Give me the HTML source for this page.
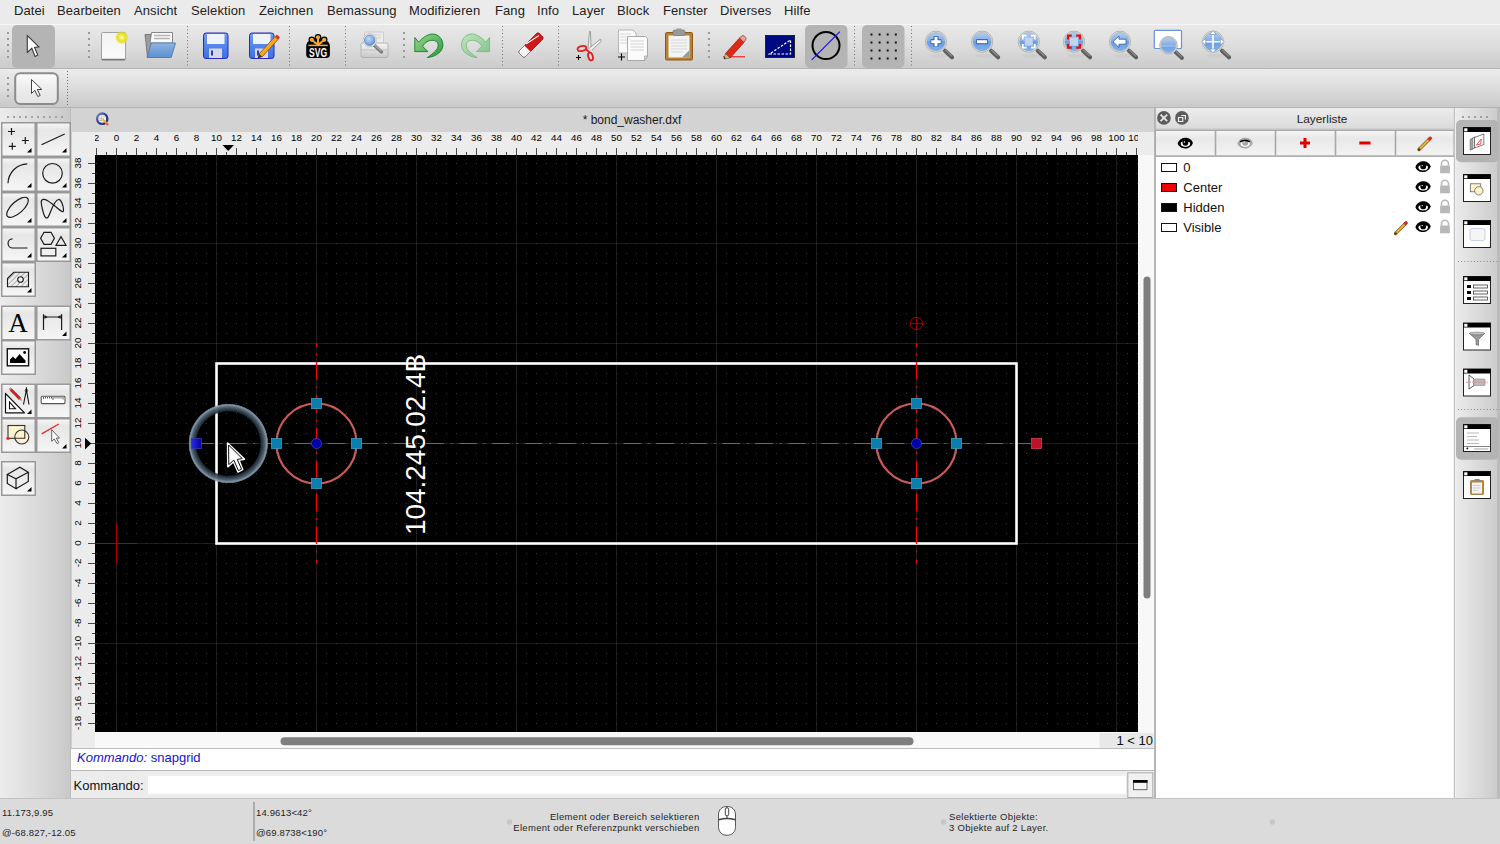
<!DOCTYPE html>
<html><head><meta charset="utf-8">
<style>
*{margin:0;padding:0;box-sizing:border-box}
html,body{width:1500px;height:844px;overflow:hidden;background:#e4e4e4;font-family:"Liberation Sans",sans-serif;color:#1a1a1a}
.a{position:absolute}
#menu{left:0;top:0;width:1500px;height:24px;background:#ebebeb}
#menu span{position:absolute;top:3px;font-size:13px;color:#222;letter-spacing:0.1px}
#tb1{left:0;top:24px;width:1500px;height:45px;background:linear-gradient(#e9e9e9,#dedede 45%,#cbcbcb);border-top:1px solid #f7f7f7;border-bottom:1px solid #b4b4b4}
#tb2{left:0;top:69px;width:1500px;height:39px;background:linear-gradient(#ececec,#dddddd 50%,#c9c9c9);border-bottom:1px solid #b4b4b4}
.hdl{position:absolute;width:2px;background:radial-gradient(circle,#9a9a9a 0.9px,transparent 1.1px) 0 0/2px 6px}
.sep{position:absolute;width:1px;background:repeating-linear-gradient(#7a7a7a 0 1px,transparent 1px 3px)}
.hl{position:absolute;background:#b3b3b3;border-radius:5px}
#tbox{left:0;top:108px;width:72px;height:690px;background:linear-gradient(90deg,#ececec,#dadada 55%,#c9c9c9);border-right:2px solid #bdbdbd}
.btn{position:absolute;width:35px;height:35px;border:2px solid #9b9b9b;background:linear-gradient(#fbfbfb,#ececec 60%,#e2e2e2)}
.btn svg{position:absolute;left:0;top:0}
#mdi{left:71px;top:108px;width:1084px;height:690px;background:#cfcfcf}
#title{left:71px;top:108px;width:1083px;height:24px;background:#d3d3d3}
#vsb{left:1138px;top:155px;width:16px;height:577px;background:#f8f8f8}
#hsb{left:95px;top:732px;width:1059px;height:16px;background:#f8f8f8}
#cmdh{left:71px;top:748px;width:1083px;height:23px;background:#fff;border-top:1.5px solid #bdbdbd;border-bottom:1px solid #b9b9b9}
#cmdi{left:71px;top:771px;width:1083px;height:27px;background:#ececec}
#status{left:0;top:798px;width:1500px;height:46px;background:#dbdbdb;border-top:1px solid #c3c3c3}
.st{position:absolute;font-size:9.5px;color:#1f1f1f;letter-spacing:0.35px;white-space:nowrap}

</style></head><body>
<div id="menu" class="a">
<span style="left:14px">Datei</span><span style="left:57px">Bearbeiten</span><span style="left:134px">Ansicht</span><span style="left:191px">Selektion</span><span style="left:259px">Zeichnen</span><span style="left:327px">Bemassung</span><span style="left:409px">Modifizieren</span><span style="left:495px">Fang</span><span style="left:537px">Info</span><span style="left:572px">Layer</span><span style="left:617px">Block</span><span style="left:663px">Fenster</span><span style="left:720px">Diverses</span><span style="left:784px">Hilfe</span>
</div>
<div id="tb1" class="a"></div>
<div id="tb2" class="a"></div>
<div id="tbox" class="a"></div>
<div id="mdi" class="a"></div>
<div id="title" class="a"></div>
<div id="vsb" class="a"></div>
<div id="hsb" class="a"></div>
<div id="cmdh" class="a"></div>
<div id="cmdi" class="a"></div>
<div id="status" class="a"></div>

<svg class="a" style="left:0;top:24px" width="1500" height="44" viewBox="0 24 1500 44">
<defs>
<linearGradient id="gpg" x1="0" y1="0" x2="0" y2="1"><stop offset="0" stop-color="#f2f2f2"/><stop offset="1" stop-color="#fbfbfb"/></linearGradient>
<radialGradient id="gyl"><stop offset="0" stop-color="#fff"/><stop offset="0.25" stop-color="#f5ef60"/><stop offset="0.6" stop-color="#e8e010"/><stop offset="1" stop-color="#e8e010" stop-opacity="0"/></radialGradient>
<linearGradient id="gfl" x1="0" y1="0" x2="0" y2="1"><stop offset="0" stop-color="#8fb4e0"/><stop offset="1" stop-color="#5b8fd0"/></linearGradient>
<linearGradient id="gfd" x1="0" y1="0" x2="0" y2="1"><stop offset="0" stop-color="#6f9cf0"/><stop offset="1" stop-color="#3a70e8"/></linearGradient>
<radialGradient id="glens" cx="0.4" cy="0.35" r="0.7"><stop offset="0" stop-color="#c6dcf4"/><stop offset="0.6" stop-color="#86b0e4"/><stop offset="1" stop-color="#5a8ccc"/></radialGradient>
<linearGradient id="gund" x1="0" y1="0" x2="0" y2="1"><stop offset="0" stop-color="#7cd27c"/><stop offset="1" stop-color="#1f9a3a"/></linearGradient>
<linearGradient id="gred" x1="0" y1="0" x2="0" y2="1"><stop offset="0" stop-color="#b8e0b8"/><stop offset="1" stop-color="#70b880"/></linearGradient>
<linearGradient id="gprn" x1="0" y1="0" x2="0" y2="1"><stop offset="0" stop-color="#f6f6f6"/><stop offset="1" stop-color="#c8c8c8"/></linearGradient>
</defs>
<!-- handles -->
<g fill="#9a9a9a">
<rect x="7" y="32" width="2" height="2"/><rect x="7" y="38" width="2" height="2"/><rect x="7" y="44" width="2" height="2"/><rect x="7" y="50" width="2" height="2"/><rect x="7" y="56" width="2" height="2"/>
<rect x="88" y="32" width="2" height="2"/><rect x="88" y="38" width="2" height="2"/><rect x="88" y="44" width="2" height="2"/><rect x="88" y="50" width="2" height="2"/><rect x="88" y="56" width="2" height="2"/>
<rect x="403" y="32" width="2" height="2"/><rect x="403" y="38" width="2" height="2"/><rect x="403" y="44" width="2" height="2"/><rect x="403" y="50" width="2" height="2"/><rect x="403" y="56" width="2" height="2"/>
<rect x="708" y="32" width="2" height="2"/><rect x="708" y="38" width="2" height="2"/><rect x="708" y="44" width="2" height="2"/><rect x="708" y="50" width="2" height="2"/><rect x="708" y="56" width="2" height="2"/>
</g>
<!-- separators -->
<path d="M187.5 26V67M289.5 26V67M345.5 26V67M502.5 26V67M558.5 26V67M854.5 26V67M911.5 26V67" stroke="#6e6e6e" stroke-width="1" stroke-dasharray="1 2.5"/>
<!-- highlights -->
<rect x="12" y="25" width="43" height="43" rx="5" fill="#b4b4b4"/>
<rect x="805" y="25" width="42.5" height="43" rx="5" fill="#b4b4b4"/>
<rect x="862" y="25" width="42.5" height="43" rx="5" fill="#b4b4b4"/>
<!-- select arrow -->
<path d="M27.3 35.5V52.4L31.8 48.3L35.1 56.4L37.8 55.1L34.5 47.4L38.9 46.9Z" fill="#fff" stroke="#3a3a3a" stroke-width="1.1" stroke-linejoin="miter"/>
<!-- new -->
<rect x="101.5" y="32.5" width="24" height="27.5" rx="1" fill="url(#gpg)" stroke="#999" stroke-width="0.9"/>
<path d="M102 59.5H125" stroke="#777" stroke-width="1.5"/>
<circle cx="121.8" cy="37.5" r="7" fill="url(#gyl)"/>
<!-- open -->
<path d="M145 34.5H151V57H147.5Z" fill="#9c9c9c" stroke="#6a6a6a" stroke-width="0.8"/>
<path d="M151.5 32.5H172.5V43H150Z" fill="#fafafa" stroke="#7a7a7a" stroke-width="0.9"/>
<path d="M154 35.5H170M154 38.5H170" stroke="#b4b4b4" stroke-width="1.4"/>
<path d="M151.3 43H175.5L171.2 57.5H147Z" fill="url(#gfl)" stroke="#4a7cc0" stroke-width="0.9" stroke-linejoin="round"/>
<!-- save -->
<rect x="203.5" y="33" width="24.5" height="25.5" rx="2.5" fill="url(#gfd)" stroke="#2a2ab8" stroke-width="1"/>
<rect x="207" y="34" width="17.5" height="10" fill="#eef2fa"/>
<rect x="209" y="48.5" width="13" height="9.5" fill="#d8d8e4"/>
<rect x="211" y="50.5" width="2" height="5" fill="#2040c0"/>
<!-- save as -->
<rect x="249.5" y="33" width="24.5" height="25.5" rx="2.5" fill="url(#gfd)" stroke="#2a2ab8" stroke-width="1"/>
<rect x="253" y="34" width="17.5" height="10" fill="#eef2fa"/>
<rect x="255" y="48.5" width="13" height="9.5" fill="#d8d8e4"/>
<rect x="257" y="50.5" width="2" height="5" fill="#2040c0"/>
<path d="M259 54L275 36.5L278 39.5L262 57Z" fill="#f5a623" stroke="#8a4a00" stroke-width="0.8"/>
<path d="M275 36.5L277 34.5L280 37.5L278 39.5Z" fill="#e03020"/>
<path d="M259 54L257.5 58.5L262 57Z" fill="#333"/>
<!-- SVG -->
<g stroke-linecap="round">
<path d="M318 45L318 37.3M318 45L311.8 39.8M318 45L324.2 39.8M318 45L309.5 43.8M318 45L326.5 43.8" stroke="#000" stroke-width="5"/>
<circle cx="318" cy="37.3" r="3.3" fill="#000"/><circle cx="311.8" cy="39.8" r="3.3" fill="#000"/><circle cx="324.2" cy="39.8" r="3.3" fill="#000"/>
<rect x="306.2" y="42.5" width="23.7" height="15.4" rx="3.4" fill="#000"/>
<path d="M318 45L318 37.3M318 45L311.8 39.8M318 45L324.2 39.8" stroke="#f5a831" stroke-width="2"/>
<circle cx="318" cy="37.3" r="2.1" fill="#f5a831"/><circle cx="311.8" cy="39.8" r="2.1" fill="#f5a831"/><circle cx="324.2" cy="39.8" r="2.1" fill="#f5a831"/>
<path d="M313 43.8L318 42.3L323 43.8" fill="#f5a831"/>
<path d="M308.3 45.4H327.7" stroke="#f5a831" stroke-width="1.5" stroke-linecap="butt"/>
</g>
<text x="0" y="0" font-family="Liberation Sans" font-weight="bold" font-size="13.4" fill="#fff" text-anchor="middle" transform="translate(318.1 56.5) scale(0.64 1)">SVG</text>
<!-- print preview -->
<rect x="364.5" y="32" width="19" height="13" rx="1" fill="#ececec" stroke="#c4c4c4" stroke-width="0.8"/>
<path d="M367 35H381M367 38H381" stroke="#cfcfcf" stroke-width="1"/>
<path d="M361 44.5Q361 43 363 43H386Q388 43 388 44.5V55.5Q388 57.5 386 57.5H363Q361 57.5 361 55.5Z" fill="url(#gprn)" stroke="#a8a8a8" stroke-width="0.8"/>
<path d="M362 50H387" stroke="#b8b8b8" stroke-width="0.8"/>
<path d="M373.5 44.5L381.5 52" stroke="#777" stroke-width="3.2" stroke-linecap="round"/>
<path d="M374 44.3L381 50.8" stroke="#b0b0b0" stroke-width="1.2" stroke-linecap="round"/>
<circle cx="369.7" cy="40.3" r="6.6" fill="#f4f4f4" stroke="#b8b8b8" stroke-width="0.8"/>
<circle cx="369.7" cy="40.3" r="5.2" fill="url(#glens)" stroke="#5d8ac4" stroke-width="0.8"/>
<!-- undo -->
<defs><linearGradient id="gu2" x1="0" y1="0" x2="1" y2="1"><stop offset="0" stop-color="#9ad88a"/><stop offset="1" stop-color="#2a9a40"/></linearGradient>
<linearGradient id="gr2" x1="1" y1="0" x2="0" y2="1"><stop offset="0" stop-color="#c4e6bc"/><stop offset="1" stop-color="#80c088"/></linearGradient></defs>
<path d="M414.8 37.5L418.7 42.1C422 38 428 34 432.2 34C438.5 34 442.9 39 442.9 44.9C442.9 51 437 56.5 427.3 57.6C434 53 438.2 49.5 438.2 45C438.2 42 435.5 40.3 432 40.3C428.5 40.3 425 42.5 422.5 46.3L427.9 51.6H414.8Z" fill="url(#gu2)" stroke="#157a2e" stroke-width="0.9" stroke-linejoin="round"/>
<!-- redo -->
<path d="M414.8 37.5L418.7 42.1C422 38 428 34 432.2 34C438.5 34 442.9 39 442.9 44.9C442.9 51 437 56.5 427.3 57.6C434 53 438.2 49.5 438.2 45C438.2 42 435.5 40.3 432 40.3C428.5 40.3 425 42.5 422.5 46.3L427.9 51.6H414.8Z" transform="matrix(-1 0 0 1 904.4 0)" fill="url(#gr2)" stroke="#7ab888" stroke-width="0.9" stroke-linejoin="round"/>
<!-- eraser -->
<ellipse cx="532" cy="57.5" rx="12" ry="1.5" fill="#d6d6d6"/>
<path d="M519.5 50.5L536.5 33.5Q538 32 539.5 33.5L542.5 36.5Q544 38 542.5 39.5L525.5 56.5Q524 58 522.5 56.5L519.5 53.5Q518 52 519.5 50.5Z" fill="#d01818" stroke="#8a0a0a" stroke-width="0.7"/>
<path d="M519.5 50.5L524.5 45.5L530.5 51.5L525.5 56.5Q524 58 522.5 56.5L519.5 53.5Q518 52 519.5 50.5Z" fill="#f4f4f4" stroke="#777" stroke-width="0.7"/>
<path d="M526 44L539 35.5" stroke="#fff" stroke-width="1.3" opacity="0.9"/>
<!-- scissors -->
<path d="M588 49L589.5 31.5Q590 30.5 590.5 31.5L591 48" fill="#f2f2f2" stroke="#888" stroke-width="0.8"/>
<path d="M589 48.5L600 39.5Q601 39 601 40L601 41.5L592 50" fill="#f2f2f2" stroke="#888" stroke-width="0.8"/>
<ellipse cx="582" cy="48.5" rx="4.5" ry="2.4" transform="rotate(-15 582 48.5)" fill="none" stroke="#e02020" stroke-width="1.8"/>
<ellipse cx="590.5" cy="56.5" rx="2.3" ry="4" transform="rotate(-15 590.5 56.5)" fill="none" stroke="#e02020" stroke-width="1.8"/>
<path d="M586 49.5L589.5 52" stroke="#e02020" stroke-width="1.8"/>
<path d="M576 57.5H581M578.5 55V60" stroke="#000" stroke-width="1.1"/>
<!-- copy -->
<path d="M618.5 30H633L636 33V53H618.5Z" fill="#fafafa" stroke="#a8a8a8" stroke-width="0.8"/>
<path d="M620 34H631M620 37H631M620 40H631M620 43H631" stroke="#d0d0d0" stroke-width="0.8"/>
<path d="M627.5 36.5H645.5L647.5 38.5V56L644.5 60.5H627.5Z" fill="#fbfbfb" stroke="#a0a0a0" stroke-width="0.9"/>
<path d="M630.5 41H644M630.5 44H644M630.5 47H644M630.5 50H644" stroke="#c8c8c8" stroke-width="0.8"/>
<path d="M644.5 60.5V56H647.5Z" fill="#ddd" stroke="#999" stroke-width="0.6"/>
<path d="M618 57H625M621.5 53.5V60.5" stroke="#000" stroke-width="1.1"/>
<!-- paste -->
<rect x="665.5" y="32.5" width="27" height="27.5" rx="1.2" fill="#b88030" stroke="#8a5a18" stroke-width="1"/>
<rect x="668.5" y="35.5" width="21" height="22" fill="#f4f4f4"/>
<path d="M671 40H687M671 43H687M671 46H687M671 49H687M671 52H683" stroke="#cfcfcf" stroke-width="0.8"/>
<path d="M682 57.5L689.5 50V57.5Z" fill="#9a9a9a"/>
<rect x="673" y="30" width="12" height="5.5" rx="1.5" fill="#9a9a9a" stroke="#777" stroke-width="0.7"/>
<rect x="676.5" y="28.5" width="5" height="2.5" fill="#9a9a9a"/>
<!-- pencil w/ red line -->
<path d="M723 56.8H745" stroke="#f02020" stroke-width="1.2"/>
<path d="M725.5 53.5L739 38.5Q740.5 37 742 38.5L743.5 40Q745 41.5 743.5 43L730 58Z" fill="#e02818" stroke="#8a1a10" stroke-width="0.7"/>
<path d="M739.5 38L741.5 36Q743 34.8 744.5 36.3L745.5 37.3Q746.8 38.8 745.5 40.2L743.5 42.2Z" fill="#e8a0a0" stroke="#8a1a10" stroke-width="0.6"/>
<path d="M725.5 53.5L724 59L730 58Z" fill="#d4b48a" stroke="#5a3a1a" stroke-width="0.5"/>
<path d="M724.5 57L724 59L726 58.6Z" fill="#222"/>
<!-- dim -->
<rect x="765.5" y="35.5" width="29" height="22" fill="#000a80" stroke="#222" stroke-width="1"/>
<path d="M769.5 54H790.5V40Z" fill="none" stroke="#fff" stroke-width="1.2" stroke-dasharray="2.5 1.5"/>
<!-- snap circle -->
<circle cx="826" cy="45.6" r="13.5" fill="none" stroke="#000" stroke-width="2"/>
<path d="M811.8 59.9L839.9 31.7" stroke="#1010ff" stroke-width="1.2"/>
<!-- grid -->
<g fill="#111">
<rect x="870.5" y="33.5" width="2" height="2"/>
<rect x="870.5" y="41.5" width="2" height="2"/>
<rect x="870.5" y="49.5" width="2" height="2"/>
<rect x="870.5" y="57.5" width="2" height="2"/>
<rect x="878.6" y="33.5" width="2" height="2"/>
<rect x="878.6" y="41.5" width="2" height="2"/>
<rect x="878.6" y="49.5" width="2" height="2"/>
<rect x="878.6" y="57.5" width="2" height="2"/>
<rect x="886.7" y="33.5" width="2" height="2"/>
<rect x="886.7" y="41.5" width="2" height="2"/>
<rect x="886.7" y="49.5" width="2" height="2"/>
<rect x="886.7" y="57.5" width="2" height="2"/>
<rect x="894.8" y="33.5" width="2" height="2"/>
<rect x="894.8" y="41.5" width="2" height="2"/>
<rect x="894.8" y="49.5" width="2" height="2"/>
<rect x="894.8" y="57.5" width="2" height="2"/>
</g>
<defs>
<linearGradient id="gzl" x1="0" y1="0" x2="0" y2="1"><stop offset="0" stop-color="#b4cdef"/><stop offset="0.45" stop-color="#86aee6"/><stop offset="0.5" stop-color="#6c9ce0"/><stop offset="1" stop-color="#80b4ec"/></linearGradient>
</defs>
<g>
<ellipse cx="939" cy="55.7" rx="10" ry="2" fill="#000" opacity="0.035"/>
<path d="M945 50.7L952 57.2" stroke="#5e5e5e" stroke-width="4.2" stroke-linecap="round"/>
<path d="M945.5 50.2L951.5 55.7" stroke="#8a8a8a" stroke-width="1.2" stroke-linecap="round"/>
<circle cx="936" cy="41.7" r="10.6" fill="#e6e6de" stroke="#b4b4aa" stroke-width="1"/>
<circle cx="936" cy="41.7" r="9.2" fill="url(#gzl)" stroke="#8aa6c8" stroke-width="0.6"/>
<path d="M930.6 41.7H941.4M936 36.3V47.1" stroke="#2a5aa0" stroke-width="5"/><path d="M931.3 41.7H940.7M936 37V46.4" stroke="#fff" stroke-width="3"/>
</g>
<g>
<ellipse cx="985.1" cy="55.7" rx="10" ry="2" fill="#000" opacity="0.035"/>
<path d="M991.1 50.7L998.1 57.2" stroke="#5e5e5e" stroke-width="4.2" stroke-linecap="round"/>
<path d="M991.6 50.2L997.6 55.7" stroke="#8a8a8a" stroke-width="1.2" stroke-linecap="round"/>
<circle cx="982.1" cy="41.7" r="10.6" fill="#e6e6de" stroke="#b4b4aa" stroke-width="1"/>
<circle cx="982.1" cy="41.7" r="9.2" fill="url(#gzl)" stroke="#8aa6c8" stroke-width="0.6"/>
<path d="M976.3 41.7H987.9" stroke="#2a5aa0" stroke-width="5"/><path d="M977 41.7H987.2" stroke="#fff" stroke-width="3"/>
</g>
<g>
<ellipse cx="1031.8" cy="55.7" rx="10" ry="2" fill="#000" opacity="0.035"/>
<path d="M1037.8 50.7L1044.8 57.2" stroke="#5e5e5e" stroke-width="4.2" stroke-linecap="round"/>
<path d="M1038.3 50.2L1044.3 55.7" stroke="#8a8a8a" stroke-width="1.2" stroke-linecap="round"/>
<circle cx="1028.8" cy="41.7" r="10.6" fill="#e6e6de" stroke="#b4b4aa" stroke-width="1"/>
<circle cx="1028.8" cy="41.7" r="9.2" fill="url(#gzl)" stroke="#8aa6c8" stroke-width="0.6"/>
<rect x="1024.8" y="37.7" width="8" height="8" fill="#c0d4ee"/><path d="M1022.8 39.5V35.7H1026.6M1031.0 35.7H1034.8V39.5M1034.8 44V47.7H1031.0M1026.6 47.7H1022.8V44" stroke="#fff" stroke-width="1.8" fill="none"/>
</g>
<g>
<ellipse cx="1077" cy="55.7" rx="10" ry="2" fill="#000" opacity="0.035"/>
<path d="M1083 50.7L1090 57.2" stroke="#5e5e5e" stroke-width="4.2" stroke-linecap="round"/>
<path d="M1083.5 50.2L1089.5 55.7" stroke="#8a8a8a" stroke-width="1.2" stroke-linecap="round"/>
<circle cx="1074" cy="41.7" r="10.6" fill="#e6e6de" stroke="#b4b4aa" stroke-width="1"/>
<circle cx="1074" cy="41.7" r="9.2" fill="url(#gzl)" stroke="#8aa6c8" stroke-width="0.6"/>
<rect x="1070" y="37.7" width="8" height="8" fill="#c0d4ee"/><path d="M1068 39.5V35.7H1071.8M1076.2 35.7H1080V39.5M1080 44V47.7H1076.2M1071.8 47.7H1068V44" stroke="#e01010" stroke-width="2.2" fill="none"/>
</g>
<g>
<ellipse cx="1123" cy="55.7" rx="10" ry="2" fill="#000" opacity="0.035"/>
<path d="M1129 50.7L1136 57.2" stroke="#5e5e5e" stroke-width="4.2" stroke-linecap="round"/>
<path d="M1129.5 50.2L1135.5 55.7" stroke="#8a8a8a" stroke-width="1.2" stroke-linecap="round"/>
<circle cx="1120" cy="41.7" r="10.6" fill="#e6e6de" stroke="#b4b4aa" stroke-width="1"/>
<circle cx="1120" cy="41.7" r="9.2" fill="url(#gzl)" stroke="#8aa6c8" stroke-width="0.6"/>
<path d="M1113 41.7L1119 36V39.2H1126V44.2H1119V47.4Z" fill="#fff" stroke="#2a5aa0" stroke-width="0.8"/>
</g>
<rect x="1154.3" y="30.3" width="27.2" height="18.2" rx="1" fill="#fff" stroke="#6a94d0" stroke-width="1.2"/>
<g>
<path d="M1175.5 52L1182 58" stroke="#5e5e5e" stroke-width="3.8" stroke-linecap="round"/>
<path d="M1176 51.5L1181.5 56.6" stroke="#8a8a8a" stroke-width="1.1" stroke-linecap="round"/>
<circle cx="1168.5" cy="45.3" r="8.8" fill="#e6e6de" stroke="#b4b4aa" stroke-width="1"/>
<circle cx="1168.5" cy="45.3" r="7.5" fill="url(#gzl)" stroke="#8aa6c8" stroke-width="0.6"/>
<path d="M1161 46H1176" stroke="#bcd2ee" stroke-width="1"/>
</g>
<g>
<ellipse cx="1216" cy="55.7" rx="10" ry="2" fill="#000" opacity="0.035"/>
<path d="M1222 50.7L1229 57.2" stroke="#5e5e5e" stroke-width="4.2" stroke-linecap="round"/>
<path d="M1222.5 50.2L1228.5 55.7" stroke="#8a8a8a" stroke-width="1.2" stroke-linecap="round"/>
<circle cx="1213" cy="41.7" r="10.6" fill="#e6e6de" stroke="#b4b4aa" stroke-width="1"/>
<circle cx="1213" cy="41.7" r="9.2" fill="url(#gzl)" stroke="#8aa6c8" stroke-width="0.6"/>
<path d="M1213 31V52.4M1202.3 41.7H1223.7" stroke="#fff" stroke-width="1.6"/><path d="M1213 30.5L1209.8 34.5H1216.2ZM1213 53L1209.8 49H1216.2ZM1201.7 41.7L1205.7 38.5V44.9ZM1224.3 41.7L1220.3 38.5V44.9Z" fill="#fff" stroke="#5a8ac8" stroke-width="0.6"/>
</g>
</svg>

<svg class="a" style="left:0;top:69px" width="1500" height="39" viewBox="0 69 1500 39">
<defs><linearGradient id="gb2" x1="0" y1="0" x2="0" y2="1"><stop offset="0" stop-color="#fdfdfd"/><stop offset="0.5" stop-color="#ececec"/><stop offset="1" stop-color="#e4e4e4"/></linearGradient></defs>
<g fill="#9a9a9a"><rect x="7" y="77" width="2" height="2"/><rect x="7" y="83" width="2" height="2"/><rect x="7" y="89" width="2" height="2"/><rect x="7" y="95" width="2" height="2"/></g>
<rect x="15.2" y="73.2" width="42.6" height="30.8" rx="5" fill="url(#gb2)" stroke="#8c8c8c" stroke-width="2"/>
<path d="M31.5 79.5V93.5L34.8 90.3L37.8 96.5L40.2 95.5L37.3 89.5H41.8Z" fill="#fff" stroke="#444" stroke-width="1"/>
<path d="M67.5 71V106" stroke="#6e6e6e" stroke-width="1" stroke-dasharray="1 2"/>
</svg>

<svg class="a" style="left:0;top:108px" width="71" height="690" viewBox="0 108 71 690">
<defs>
<linearGradient id="gbt" x1="0" y1="0" x2="0" y2="1"><stop offset="0" stop-color="#f7f7f7"/><stop offset="0.22" stop-color="#e6e6e6"/><stop offset="1" stop-color="#f6f6f6"/></linearGradient>
</defs>
<g fill="#a4a4a4">
<rect x="7" y="116" width="2" height="2"/><rect x="13" y="116" width="2" height="2"/><rect x="19" y="116" width="2" height="2"/><rect x="25" y="116" width="2" height="2"/><rect x="31" y="116" width="2" height="2"/><rect x="37" y="116" width="2" height="2"/><rect x="43" y="116" width="2" height="2"/><rect x="49" y="116" width="2" height="2"/><rect x="55" y="116" width="2" height="2"/><rect x="61" y="116" width="2" height="2"/>
</g>
<rect x="1.75" y="122.75" width="33.5" height="33.5" fill="url(#gbt)" stroke="#999" stroke-width="1.5"/>
<rect x="36.75" y="122.75" width="33.5" height="33.5" fill="url(#gbt)" stroke="#999" stroke-width="1.5"/>
<rect x="1.75" y="157.75" width="33.5" height="33.5" fill="url(#gbt)" stroke="#999" stroke-width="1.5"/>
<rect x="36.75" y="157.75" width="33.5" height="33.5" fill="url(#gbt)" stroke="#999" stroke-width="1.5"/>
<rect x="1.75" y="192.75" width="33.5" height="33.5" fill="url(#gbt)" stroke="#999" stroke-width="1.5"/>
<rect x="36.75" y="192.75" width="33.5" height="33.5" fill="url(#gbt)" stroke="#999" stroke-width="1.5"/>
<rect x="1.75" y="227.75" width="33.5" height="33.5" fill="url(#gbt)" stroke="#999" stroke-width="1.5"/>
<rect x="36.75" y="227.75" width="33.5" height="33.5" fill="url(#gbt)" stroke="#999" stroke-width="1.5"/>
<rect x="1.75" y="262.75" width="33.5" height="33.5" fill="url(#gbt)" stroke="#999" stroke-width="1.5"/>
<rect x="1.75" y="306.25" width="33.5" height="33.5" fill="url(#gbt)" stroke="#999" stroke-width="1.5"/>
<rect x="36.75" y="306.25" width="33.5" height="33.5" fill="url(#gbt)" stroke="#999" stroke-width="1.5"/>
<rect x="1.75" y="340.75" width="33.5" height="33.5" fill="url(#gbt)" stroke="#999" stroke-width="1.5"/>
<rect x="1.75" y="384.25" width="33.5" height="33.5" fill="url(#gbt)" stroke="#999" stroke-width="1.5"/>
<rect x="36.75" y="384.25" width="33.5" height="33.5" fill="url(#gbt)" stroke="#999" stroke-width="1.5"/>
<rect x="1.75" y="418.75" width="33.5" height="33.5" fill="url(#gbt)" stroke="#999" stroke-width="1.5"/>
<rect x="36.75" y="418.75" width="33.5" height="33.5" fill="url(#gbt)" stroke="#999" stroke-width="1.5"/>
<rect x="1.75" y="461.75" width="33.5" height="33.5" fill="url(#gbt)" stroke="#999" stroke-width="1.5"/>
<path d="M31.5 148V152.5H27Z" fill="#000"/>
<path d="M66.5 148V152.5H62Z" fill="#000"/>
<path d="M31.5 183V187.5H27Z" fill="#000"/>
<path d="M66.5 183V187.5H62Z" fill="#000"/>
<path d="M31.5 218V222.5H27Z" fill="#000"/>
<path d="M66.5 218V222.5H62Z" fill="#000"/>
<path d="M31.5 253V257.5H27Z" fill="#000"/>
<path d="M66.5 253V257.5H62Z" fill="#000"/>
<path d="M31.5 288V292.5H27Z" fill="#000"/>
<path d="M66.5 331.5V336.0H62Z" fill="#000"/>
<path d="M66.5 444V448.5H62Z" fill="#000"/>
<path d="M31.5 409.5V414.0H27Z" fill="#000"/>
<path d="M31.5 487V491.5H27Z" fill="#000"/>
<g fill="none" stroke="#1a1a1a" stroke-width="1.2">
<path d="M8 131.5H15M11.5 128V135M21.8 140.5H28.8M25.3 137V144M8.8 146.3H15.8M12.3 142.8V149.8"/>
<path d="M41.5 144.8L64.7 134"/>
<path d="M8 183.3A20 20 0 0 1 27.3 163.8"/>
<circle cx="52.5" cy="173.3" r="9.8"/>
<ellipse cx="17.5" cy="207.3" rx="13.5" ry="5.8" transform="rotate(-42 17.5 207.3)"/>
<path d="M41.5 200.5C44 197 50 202 55.5 206.5C60 210 63.5 214 63.5 210C63.5 206 61 199 58.5 199.5C55 200 52 208 50 213C48.5 217 47.5 219 45.5 217.5C43.5 215.5 40.5 203 41.5 200.5Z"/>
<path d="M12.5 238.8A4.6 4.6 0 0 0 12.8 248H27.5"/>
<path d="M44 232.3H51L54.4 238.3L51 244.3H44L40.6 238.3Z"/>
<path d="M56 245.3H66L61 236.7Z"/>
<rect x="41" y="248.3" width="14.8" height="7.6"/>
<path d="M15.5 327.5"/>
<path d="M43.5 314.3V330M61.6 314.3V330M44 317H61"/>
<path d="M41.7 433.9L58.8 424" stroke="#f02828" stroke-width="1.4"/>
<path d="M7.3 474.5L19.8 467.2L28.3 472.3L16 478.8ZM7.3 474.5V483.5L16 488.8V478.8M28.3 472.3V481.5L16 488.8"/>
</g>
<path d="M47.5 317L44.5 315V319ZM57.5 317L60.6 315V319Z" fill="#1a1a1a"/>
<!-- hatch -->
<defs><pattern id="hp" width="3.5" height="3.5" patternUnits="userSpaceOnUse" patternTransform="rotate(45)"><path d="M0 0V3.5" stroke="#666" stroke-width="0.9"/></pattern></defs>
<path d="M7.5 278.5L13.8 272.3H28.5V286.7H7.5Z" fill="url(#hp)" stroke="#1a1a1a" stroke-width="1.1"/>
<circle cx="20.5" cy="279.5" r="2.8" fill="#eee" stroke="#1a1a1a" stroke-width="1.1"/>
<!-- text A -->
<text x="18" y="332" font-family="Liberation Serif" font-size="27" text-anchor="middle" fill="#000">A</text>
<!-- image -->
<rect x="7.3" y="348.8" width="21.3" height="17" fill="#fff" stroke="#111" stroke-width="1.4"/>
<path d="M10 363V359.5L13 356.5L15.5 359L19.5 354L24 359L25.5 360.5V363Z" fill="#000"/>
<circle cx="24.6" cy="352.5" r="1.4" fill="#000"/>
<!-- modify -->
<path d="M5.5 393.5V412.8H24.5Z" fill="#fff" stroke="#111" stroke-width="1.2" stroke-linejoin="round"/>
<path d="M9.5 402V408.8H15.5Z" fill="#fff" stroke="#111" stroke-width="1.1"/>
<path d="M10.2 390.6L11.8 389L20.4 397.6L18.8 399.2Z" fill="#d82020" stroke="#8a1010" stroke-width="0.7"/>
<path d="M10.2 390.6L9.6 388.6Q9.8 387.8 10.6 388L11.8 389Z" fill="#f0a0a0" stroke="#8a1010" stroke-width="0.5"/>
<path d="M20.4 397.6L21.6 400.4L18.8 399.2Z" fill="#d8a070" stroke="#6a4020" stroke-width="0.4"/>
<path d="M26.4 387.2V390M26.4 390L23.5 404.5M26.4 390L29 404.5" stroke="#111" stroke-width="1.1" fill="none"/>
<circle cx="26.4" cy="390.5" r="1.2" fill="none" stroke="#111" stroke-width="0.8"/>
<!-- measure ruler -->
<rect x="41.2" y="396.2" width="23.8" height="7.4" rx="1" fill="#fff" stroke="#555" stroke-width="1.1"/>
<path d="M43.5 397V399M45.5 397V398.5M47.5 397V398.5M49.5 397V398.5M51.5 397V398.5M53 397V400M55 397V398.5M57 397V398.5M59 397V398.5M61 397V398.5M63 397V399.5" stroke="#333" stroke-width="0.8"/>
<!-- select -->
<rect x="8" y="425.5" width="16.8" height="12.8" fill="#fdf3cf" stroke="#333" stroke-width="1.1"/>
<circle cx="21.8" cy="437" r="7" fill="#fdf3cf" stroke="#333" stroke-width="1.1"/>
<path d="M15 438.3H24.8V431" fill="none" stroke="#333" stroke-width="1.1"/>
<circle cx="8" cy="438.3" r="1.6" fill="#f02020"/>
<!-- snap cursor -->
<path d="M51.7 429.7V441.3L54.3 438.9L57 443.6L58.8 442.7L56.3 438.1H59.5Z" fill="#fff" stroke="#555" stroke-width="0.9" stroke-linejoin="round"/>
</svg>

<svg style="position:absolute;left:72px;top:132px" width="1082" height="23" viewBox="72 132 1082 23"><rect x="72" y="132" width="1082" height="23" fill="#ececec"/><path d="M96.5 148V155M106.5 152V155M116.5 148V155M126.5 152V155M136.5 148V155M146.5 152V155M156.5 148V155M166.5 152V155M176.5 148V155M186.5 152V155M196.5 148V155M206.5 152V155M216.5 148V155M226.5 152V155M236.5 148V155M246.5 152V155M256.5 148V155M266.5 152V155M276.5 148V155M286.5 152V155M296.5 148V155M306.5 152V155M316.5 148V155M326.5 152V155M336.5 148V155M346.5 152V155M356.5 148V155M366.5 152V155M376.5 148V155M386.5 152V155M396.5 148V155M406.5 152V155M416.5 148V155M426.5 152V155M436.5 148V155M446.5 152V155M456.5 148V155M466.5 152V155M476.5 148V155M486.5 152V155M496.5 148V155M506.5 152V155M516.5 148V155M526.5 152V155M536.5 148V155M546.5 152V155M556.5 148V155M566.5 152V155M576.5 148V155M586.5 152V155M596.5 148V155M606.5 152V155M616.5 148V155M626.5 152V155M636.5 148V155M646.5 152V155M656.5 148V155M666.5 152V155M676.5 148V155M686.5 152V155M696.5 148V155M706.5 152V155M716.5 148V155M726.5 152V155M736.5 148V155M746.5 152V155M756.5 148V155M766.5 152V155M776.5 148V155M786.5 152V155M796.5 148V155M806.5 152V155M816.5 148V155M826.5 152V155M836.5 148V155M846.5 152V155M856.5 148V155M866.5 152V155M876.5 148V155M886.5 152V155M896.5 148V155M906.5 152V155M916.5 148V155M926.5 152V155M936.5 148V155M946.5 152V155M956.5 148V155M966.5 152V155M976.5 148V155M986.5 152V155M996.5 148V155M1006.5 152V155M1016.5 148V155M1026.5 152V155M1036.5 148V155M1046.5 152V155M1056.5 148V155M1066.5 152V155M1076.5 148V155M1086.5 152V155M1096.5 148V155M1106.5 152V155M1116.5 148V155M1126.5 152V155M1136.5 148V155" stroke="#4a4a4a" stroke-width="1" shape-rendering="crispEdges"/><defs><clipPath id="rtc"><rect x="95" y="132" width="1043" height="23"/></clipPath></defs><g clip-path="url(#rtc)" font-family="Liberation Sans" font-size="9.8" fill="#000" text-anchor="middle"><text x="96.5" y="141">2</text><text x="116.5" y="141">0</text><text x="136.5" y="141">2</text><text x="156.5" y="141">4</text><text x="176.5" y="141">6</text><text x="196.5" y="141">8</text><text x="216.5" y="141">10</text><text x="236.5" y="141">12</text><text x="256.5" y="141">14</text><text x="276.5" y="141">16</text><text x="296.5" y="141">18</text><text x="316.5" y="141">20</text><text x="336.5" y="141">22</text><text x="356.5" y="141">24</text><text x="376.5" y="141">26</text><text x="396.5" y="141">28</text><text x="416.5" y="141">30</text><text x="436.5" y="141">32</text><text x="456.5" y="141">34</text><text x="476.5" y="141">36</text><text x="496.5" y="141">38</text><text x="516.5" y="141">40</text><text x="536.5" y="141">42</text><text x="556.5" y="141">44</text><text x="576.5" y="141">46</text><text x="596.5" y="141">48</text><text x="616.5" y="141">50</text><text x="636.5" y="141">52</text><text x="656.5" y="141">54</text><text x="676.5" y="141">56</text><text x="696.5" y="141">58</text><text x="716.5" y="141">60</text><text x="736.5" y="141">62</text><text x="756.5" y="141">64</text><text x="776.5" y="141">66</text><text x="796.5" y="141">68</text><text x="816.5" y="141">70</text><text x="836.5" y="141">72</text><text x="856.5" y="141">74</text><text x="876.5" y="141">76</text><text x="896.5" y="141">78</text><text x="916.5" y="141">80</text><text x="936.5" y="141">82</text><text x="956.5" y="141">84</text><text x="976.5" y="141">86</text><text x="996.5" y="141">88</text><text x="1016.5" y="141">90</text><text x="1036.5" y="141">92</text><text x="1056.5" y="141">94</text><text x="1076.5" y="141">96</text><text x="1096.5" y="141">98</text><text x="1116.5" y="141">100</text><text x="1136.5" y="141">102</text></g></svg>
<svg style="position:absolute;left:72px;top:155px" width="23" height="593" viewBox="72 155 23 593"><rect x="72" y="155" width="23" height="593" fill="#ececec"/><path d="M88 723.5H95M92 713.5H95M88 703.5H95M92 693.5H95M88 683.5H95M92 673.5H95M88 663.5H95M92 653.5H95M88 643.5H95M92 633.5H95M88 623.5H95M92 613.5H95M88 603.5H95M92 593.5H95M88 583.5H95M92 573.5H95M88 563.5H95M92 553.5H95M88 543.5H95M92 533.5H95M88 523.5H95M92 513.5H95M88 503.5H95M92 493.5H95M88 483.5H95M92 473.5H95M88 463.5H95M92 453.5H95M88 443.5H95M92 433.5H95M88 423.5H95M92 413.5H95M88 403.5H95M92 393.5H95M88 383.5H95M92 373.5H95M88 363.5H95M92 353.5H95M88 343.5H95M92 333.5H95M88 323.5H95M92 313.5H95M88 303.5H95M92 293.5H95M88 283.5H95M92 273.5H95M88 263.5H95M92 253.5H95M88 243.5H95M92 233.5H95M88 223.5H95M92 213.5H95M88 203.5H95M92 193.5H95M88 183.5H95M92 173.5H95M88 163.5H95" stroke="#4a4a4a" stroke-width="1" shape-rendering="crispEdges"/><g font-family="Liberation Sans" font-size="9.8" fill="#000" text-anchor="middle"><text transform="translate(77.6 723) rotate(-90)" y="3.5">-18</text><text transform="translate(77.6 703) rotate(-90)" y="3.5">-16</text><text transform="translate(77.6 683) rotate(-90)" y="3.5">-14</text><text transform="translate(77.6 663) rotate(-90)" y="3.5">-12</text><text transform="translate(77.6 643) rotate(-90)" y="3.5">-10</text><text transform="translate(77.6 623) rotate(-90)" y="3.5">-8</text><text transform="translate(77.6 603) rotate(-90)" y="3.5">-6</text><text transform="translate(77.6 583) rotate(-90)" y="3.5">-4</text><text transform="translate(77.6 563) rotate(-90)" y="3.5">-2</text><text transform="translate(77.6 543) rotate(-90)" y="3.5">0</text><text transform="translate(77.6 523) rotate(-90)" y="3.5">2</text><text transform="translate(77.6 503) rotate(-90)" y="3.5">4</text><text transform="translate(77.6 483) rotate(-90)" y="3.5">6</text><text transform="translate(77.6 463) rotate(-90)" y="3.5">8</text><text transform="translate(77.6 443) rotate(-90)" y="3.5">10</text><text transform="translate(77.6 423) rotate(-90)" y="3.5">12</text><text transform="translate(77.6 403) rotate(-90)" y="3.5">14</text><text transform="translate(77.6 383) rotate(-90)" y="3.5">16</text><text transform="translate(77.6 363) rotate(-90)" y="3.5">18</text><text transform="translate(77.6 343) rotate(-90)" y="3.5">20</text><text transform="translate(77.6 323) rotate(-90)" y="3.5">22</text><text transform="translate(77.6 303) rotate(-90)" y="3.5">24</text><text transform="translate(77.6 283) rotate(-90)" y="3.5">26</text><text transform="translate(77.6 263) rotate(-90)" y="3.5">28</text><text transform="translate(77.6 243) rotate(-90)" y="3.5">30</text><text transform="translate(77.6 223) rotate(-90)" y="3.5">32</text><text transform="translate(77.6 203) rotate(-90)" y="3.5">34</text><text transform="translate(77.6 183) rotate(-90)" y="3.5">36</text><text transform="translate(77.6 163) rotate(-90)" y="3.5">38</text></g></svg>
<svg style="position:absolute;left:95px;top:155px" width="1043" height="577" viewBox="95 155 1043 577" shape-rendering="crispEdges"><rect x="95" y="155" width="1043" height="577" fill="#000"/><path d="M116.5 155V732M216.5 155V732M316.5 155V732M416.5 155V732M516.5 155V732M616.5 155V732M716.5 155V732M816.5 155V732M916.5 155V732M1016.5 155V732M1116.5 155V732M95 243.5H1138M95 343.5H1138M95 443.5H1138M95 543.5H1138M95 643.5H1138" stroke="#1c1c1c" stroke-width="1" fill="none"/><path d="M96 163h1v1h-1zM96 173h1v1h-1zM96 183h1v1h-1zM96 193h1v1h-1zM96 203h1v1h-1zM96 213h1v1h-1zM96 223h1v1h-1zM96 233h1v1h-1zM96 243h1v1h-1zM96 253h1v1h-1zM96 263h1v1h-1zM96 273h1v1h-1zM96 283h1v1h-1zM96 293h1v1h-1zM96 303h1v1h-1zM96 313h1v1h-1zM96 323h1v1h-1zM96 333h1v1h-1zM96 343h1v1h-1zM96 353h1v1h-1zM96 363h1v1h-1zM96 373h1v1h-1zM96 383h1v1h-1zM96 393h1v1h-1zM96 403h1v1h-1zM96 413h1v1h-1zM96 423h1v1h-1zM96 433h1v1h-1zM96 443h1v1h-1zM96 453h1v1h-1zM96 463h1v1h-1zM96 473h1v1h-1zM96 483h1v1h-1zM96 493h1v1h-1zM96 503h1v1h-1zM96 513h1v1h-1zM96 523h1v1h-1zM96 533h1v1h-1zM96 543h1v1h-1zM96 553h1v1h-1zM96 563h1v1h-1zM96 573h1v1h-1zM96 583h1v1h-1zM96 593h1v1h-1zM96 603h1v1h-1zM96 613h1v1h-1zM96 623h1v1h-1zM96 633h1v1h-1zM96 643h1v1h-1zM96 653h1v1h-1zM96 663h1v1h-1zM96 673h1v1h-1zM96 683h1v1h-1zM96 693h1v1h-1zM96 703h1v1h-1zM96 713h1v1h-1zM96 723h1v1h-1zM106 163h1v1h-1zM106 173h1v1h-1zM106 183h1v1h-1zM106 193h1v1h-1zM106 203h1v1h-1zM106 213h1v1h-1zM106 223h1v1h-1zM106 233h1v1h-1zM106 243h1v1h-1zM106 253h1v1h-1zM106 263h1v1h-1zM106 273h1v1h-1zM106 283h1v1h-1zM106 293h1v1h-1zM106 303h1v1h-1zM106 313h1v1h-1zM106 323h1v1h-1zM106 333h1v1h-1zM106 343h1v1h-1zM106 353h1v1h-1zM106 363h1v1h-1zM106 373h1v1h-1zM106 383h1v1h-1zM106 393h1v1h-1zM106 403h1v1h-1zM106 413h1v1h-1zM106 423h1v1h-1zM106 433h1v1h-1zM106 443h1v1h-1zM106 453h1v1h-1zM106 463h1v1h-1zM106 473h1v1h-1zM106 483h1v1h-1zM106 493h1v1h-1zM106 503h1v1h-1zM106 513h1v1h-1zM106 523h1v1h-1zM106 533h1v1h-1zM106 543h1v1h-1zM106 553h1v1h-1zM106 563h1v1h-1zM106 573h1v1h-1zM106 583h1v1h-1zM106 593h1v1h-1zM106 603h1v1h-1zM106 613h1v1h-1zM106 623h1v1h-1zM106 633h1v1h-1zM106 643h1v1h-1zM106 653h1v1h-1zM106 663h1v1h-1zM106 673h1v1h-1zM106 683h1v1h-1zM106 693h1v1h-1zM106 703h1v1h-1zM106 713h1v1h-1zM106 723h1v1h-1zM116 163h1v1h-1zM116 173h1v1h-1zM116 183h1v1h-1zM116 193h1v1h-1zM116 203h1v1h-1zM116 213h1v1h-1zM116 223h1v1h-1zM116 233h1v1h-1zM116 243h1v1h-1zM116 253h1v1h-1zM116 263h1v1h-1zM116 273h1v1h-1zM116 283h1v1h-1zM116 293h1v1h-1zM116 303h1v1h-1zM116 313h1v1h-1zM116 323h1v1h-1zM116 333h1v1h-1zM116 343h1v1h-1zM116 353h1v1h-1zM116 363h1v1h-1zM116 373h1v1h-1zM116 383h1v1h-1zM116 393h1v1h-1zM116 403h1v1h-1zM116 413h1v1h-1zM116 423h1v1h-1zM116 433h1v1h-1zM116 443h1v1h-1zM116 453h1v1h-1zM116 463h1v1h-1zM116 473h1v1h-1zM116 483h1v1h-1zM116 493h1v1h-1zM116 503h1v1h-1zM116 513h1v1h-1zM116 523h1v1h-1zM116 533h1v1h-1zM116 543h1v1h-1zM116 553h1v1h-1zM116 563h1v1h-1zM116 573h1v1h-1zM116 583h1v1h-1zM116 593h1v1h-1zM116 603h1v1h-1zM116 613h1v1h-1zM116 623h1v1h-1zM116 633h1v1h-1zM116 643h1v1h-1zM116 653h1v1h-1zM116 663h1v1h-1zM116 673h1v1h-1zM116 683h1v1h-1zM116 693h1v1h-1zM116 703h1v1h-1zM116 713h1v1h-1zM116 723h1v1h-1zM126 163h1v1h-1zM126 173h1v1h-1zM126 183h1v1h-1zM126 193h1v1h-1zM126 203h1v1h-1zM126 213h1v1h-1zM126 223h1v1h-1zM126 233h1v1h-1zM126 243h1v1h-1zM126 253h1v1h-1zM126 263h1v1h-1zM126 273h1v1h-1zM126 283h1v1h-1zM126 293h1v1h-1zM126 303h1v1h-1zM126 313h1v1h-1zM126 323h1v1h-1zM126 333h1v1h-1zM126 343h1v1h-1zM126 353h1v1h-1zM126 363h1v1h-1zM126 373h1v1h-1zM126 383h1v1h-1zM126 393h1v1h-1zM126 403h1v1h-1zM126 413h1v1h-1zM126 423h1v1h-1zM126 433h1v1h-1zM126 443h1v1h-1zM126 453h1v1h-1zM126 463h1v1h-1zM126 473h1v1h-1zM126 483h1v1h-1zM126 493h1v1h-1zM126 503h1v1h-1zM126 513h1v1h-1zM126 523h1v1h-1zM126 533h1v1h-1zM126 543h1v1h-1zM126 553h1v1h-1zM126 563h1v1h-1zM126 573h1v1h-1zM126 583h1v1h-1zM126 593h1v1h-1zM126 603h1v1h-1zM126 613h1v1h-1zM126 623h1v1h-1zM126 633h1v1h-1zM126 643h1v1h-1zM126 653h1v1h-1zM126 663h1v1h-1zM126 673h1v1h-1zM126 683h1v1h-1zM126 693h1v1h-1zM126 703h1v1h-1zM126 713h1v1h-1zM126 723h1v1h-1zM136 163h1v1h-1zM136 173h1v1h-1zM136 183h1v1h-1zM136 193h1v1h-1zM136 203h1v1h-1zM136 213h1v1h-1zM136 223h1v1h-1zM136 233h1v1h-1zM136 243h1v1h-1zM136 253h1v1h-1zM136 263h1v1h-1zM136 273h1v1h-1zM136 283h1v1h-1zM136 293h1v1h-1zM136 303h1v1h-1zM136 313h1v1h-1zM136 323h1v1h-1zM136 333h1v1h-1zM136 343h1v1h-1zM136 353h1v1h-1zM136 363h1v1h-1zM136 373h1v1h-1zM136 383h1v1h-1zM136 393h1v1h-1zM136 403h1v1h-1zM136 413h1v1h-1zM136 423h1v1h-1zM136 433h1v1h-1zM136 443h1v1h-1zM136 453h1v1h-1zM136 463h1v1h-1zM136 473h1v1h-1zM136 483h1v1h-1zM136 493h1v1h-1zM136 503h1v1h-1zM136 513h1v1h-1zM136 523h1v1h-1zM136 533h1v1h-1zM136 543h1v1h-1zM136 553h1v1h-1zM136 563h1v1h-1zM136 573h1v1h-1zM136 583h1v1h-1zM136 593h1v1h-1zM136 603h1v1h-1zM136 613h1v1h-1zM136 623h1v1h-1zM136 633h1v1h-1zM136 643h1v1h-1zM136 653h1v1h-1zM136 663h1v1h-1zM136 673h1v1h-1zM136 683h1v1h-1zM136 693h1v1h-1zM136 703h1v1h-1zM136 713h1v1h-1zM136 723h1v1h-1zM146 163h1v1h-1zM146 173h1v1h-1zM146 183h1v1h-1zM146 193h1v1h-1zM146 203h1v1h-1zM146 213h1v1h-1zM146 223h1v1h-1zM146 233h1v1h-1zM146 243h1v1h-1zM146 253h1v1h-1zM146 263h1v1h-1zM146 273h1v1h-1zM146 283h1v1h-1zM146 293h1v1h-1zM146 303h1v1h-1zM146 313h1v1h-1zM146 323h1v1h-1zM146 333h1v1h-1zM146 343h1v1h-1zM146 353h1v1h-1zM146 363h1v1h-1zM146 373h1v1h-1zM146 383h1v1h-1zM146 393h1v1h-1zM146 403h1v1h-1zM146 413h1v1h-1zM146 423h1v1h-1zM146 433h1v1h-1zM146 443h1v1h-1zM146 453h1v1h-1zM146 463h1v1h-1zM146 473h1v1h-1zM146 483h1v1h-1zM146 493h1v1h-1zM146 503h1v1h-1zM146 513h1v1h-1zM146 523h1v1h-1zM146 533h1v1h-1zM146 543h1v1h-1zM146 553h1v1h-1zM146 563h1v1h-1zM146 573h1v1h-1zM146 583h1v1h-1zM146 593h1v1h-1zM146 603h1v1h-1zM146 613h1v1h-1zM146 623h1v1h-1zM146 633h1v1h-1zM146 643h1v1h-1zM146 653h1v1h-1zM146 663h1v1h-1zM146 673h1v1h-1zM146 683h1v1h-1zM146 693h1v1h-1zM146 703h1v1h-1zM146 713h1v1h-1zM146 723h1v1h-1zM156 163h1v1h-1zM156 173h1v1h-1zM156 183h1v1h-1zM156 193h1v1h-1zM156 203h1v1h-1zM156 213h1v1h-1zM156 223h1v1h-1zM156 233h1v1h-1zM156 243h1v1h-1zM156 253h1v1h-1zM156 263h1v1h-1zM156 273h1v1h-1zM156 283h1v1h-1zM156 293h1v1h-1zM156 303h1v1h-1zM156 313h1v1h-1zM156 323h1v1h-1zM156 333h1v1h-1zM156 343h1v1h-1zM156 353h1v1h-1zM156 363h1v1h-1zM156 373h1v1h-1zM156 383h1v1h-1zM156 393h1v1h-1zM156 403h1v1h-1zM156 413h1v1h-1zM156 423h1v1h-1zM156 433h1v1h-1zM156 443h1v1h-1zM156 453h1v1h-1zM156 463h1v1h-1zM156 473h1v1h-1zM156 483h1v1h-1zM156 493h1v1h-1zM156 503h1v1h-1zM156 513h1v1h-1zM156 523h1v1h-1zM156 533h1v1h-1zM156 543h1v1h-1zM156 553h1v1h-1zM156 563h1v1h-1zM156 573h1v1h-1zM156 583h1v1h-1zM156 593h1v1h-1zM156 603h1v1h-1zM156 613h1v1h-1zM156 623h1v1h-1zM156 633h1v1h-1zM156 643h1v1h-1zM156 653h1v1h-1zM156 663h1v1h-1zM156 673h1v1h-1zM156 683h1v1h-1zM156 693h1v1h-1zM156 703h1v1h-1zM156 713h1v1h-1zM156 723h1v1h-1zM166 163h1v1h-1zM166 173h1v1h-1zM166 183h1v1h-1zM166 193h1v1h-1zM166 203h1v1h-1zM166 213h1v1h-1zM166 223h1v1h-1zM166 233h1v1h-1zM166 243h1v1h-1zM166 253h1v1h-1zM166 263h1v1h-1zM166 273h1v1h-1zM166 283h1v1h-1zM166 293h1v1h-1zM166 303h1v1h-1zM166 313h1v1h-1zM166 323h1v1h-1zM166 333h1v1h-1zM166 343h1v1h-1zM166 353h1v1h-1zM166 363h1v1h-1zM166 373h1v1h-1zM166 383h1v1h-1zM166 393h1v1h-1zM166 403h1v1h-1zM166 413h1v1h-1zM166 423h1v1h-1zM166 433h1v1h-1zM166 443h1v1h-1zM166 453h1v1h-1zM166 463h1v1h-1zM166 473h1v1h-1zM166 483h1v1h-1zM166 493h1v1h-1zM166 503h1v1h-1zM166 513h1v1h-1zM166 523h1v1h-1zM166 533h1v1h-1zM166 543h1v1h-1zM166 553h1v1h-1zM166 563h1v1h-1zM166 573h1v1h-1zM166 583h1v1h-1zM166 593h1v1h-1zM166 603h1v1h-1zM166 613h1v1h-1zM166 623h1v1h-1zM166 633h1v1h-1zM166 643h1v1h-1zM166 653h1v1h-1zM166 663h1v1h-1zM166 673h1v1h-1zM166 683h1v1h-1zM166 693h1v1h-1zM166 703h1v1h-1zM166 713h1v1h-1zM166 723h1v1h-1zM176 163h1v1h-1zM176 173h1v1h-1zM176 183h1v1h-1zM176 193h1v1h-1zM176 203h1v1h-1zM176 213h1v1h-1zM176 223h1v1h-1zM176 233h1v1h-1zM176 243h1v1h-1zM176 253h1v1h-1zM176 263h1v1h-1zM176 273h1v1h-1zM176 283h1v1h-1zM176 293h1v1h-1zM176 303h1v1h-1zM176 313h1v1h-1zM176 323h1v1h-1zM176 333h1v1h-1zM176 343h1v1h-1zM176 353h1v1h-1zM176 363h1v1h-1zM176 373h1v1h-1zM176 383h1v1h-1zM176 393h1v1h-1zM176 403h1v1h-1zM176 413h1v1h-1zM176 423h1v1h-1zM176 433h1v1h-1zM176 443h1v1h-1zM176 453h1v1h-1zM176 463h1v1h-1zM176 473h1v1h-1zM176 483h1v1h-1zM176 493h1v1h-1zM176 503h1v1h-1zM176 513h1v1h-1zM176 523h1v1h-1zM176 533h1v1h-1zM176 543h1v1h-1zM176 553h1v1h-1zM176 563h1v1h-1zM176 573h1v1h-1zM176 583h1v1h-1zM176 593h1v1h-1zM176 603h1v1h-1zM176 613h1v1h-1zM176 623h1v1h-1zM176 633h1v1h-1zM176 643h1v1h-1zM176 653h1v1h-1zM176 663h1v1h-1zM176 673h1v1h-1zM176 683h1v1h-1zM176 693h1v1h-1zM176 703h1v1h-1zM176 713h1v1h-1zM176 723h1v1h-1zM186 163h1v1h-1zM186 173h1v1h-1zM186 183h1v1h-1zM186 193h1v1h-1zM186 203h1v1h-1zM186 213h1v1h-1zM186 223h1v1h-1zM186 233h1v1h-1zM186 243h1v1h-1zM186 253h1v1h-1zM186 263h1v1h-1zM186 273h1v1h-1zM186 283h1v1h-1zM186 293h1v1h-1zM186 303h1v1h-1zM186 313h1v1h-1zM186 323h1v1h-1zM186 333h1v1h-1zM186 343h1v1h-1zM186 353h1v1h-1zM186 363h1v1h-1zM186 373h1v1h-1zM186 383h1v1h-1zM186 393h1v1h-1zM186 403h1v1h-1zM186 413h1v1h-1zM186 423h1v1h-1zM186 433h1v1h-1zM186 443h1v1h-1zM186 453h1v1h-1zM186 463h1v1h-1zM186 473h1v1h-1zM186 483h1v1h-1zM186 493h1v1h-1zM186 503h1v1h-1zM186 513h1v1h-1zM186 523h1v1h-1zM186 533h1v1h-1zM186 543h1v1h-1zM186 553h1v1h-1zM186 563h1v1h-1zM186 573h1v1h-1zM186 583h1v1h-1zM186 593h1v1h-1zM186 603h1v1h-1zM186 613h1v1h-1zM186 623h1v1h-1zM186 633h1v1h-1zM186 643h1v1h-1zM186 653h1v1h-1zM186 663h1v1h-1zM186 673h1v1h-1zM186 683h1v1h-1zM186 693h1v1h-1zM186 703h1v1h-1zM186 713h1v1h-1zM186 723h1v1h-1zM196 163h1v1h-1zM196 173h1v1h-1zM196 183h1v1h-1zM196 193h1v1h-1zM196 203h1v1h-1zM196 213h1v1h-1zM196 223h1v1h-1zM196 233h1v1h-1zM196 243h1v1h-1zM196 253h1v1h-1zM196 263h1v1h-1zM196 273h1v1h-1zM196 283h1v1h-1zM196 293h1v1h-1zM196 303h1v1h-1zM196 313h1v1h-1zM196 323h1v1h-1zM196 333h1v1h-1zM196 343h1v1h-1zM196 353h1v1h-1zM196 363h1v1h-1zM196 373h1v1h-1zM196 383h1v1h-1zM196 393h1v1h-1zM196 403h1v1h-1zM196 413h1v1h-1zM196 423h1v1h-1zM196 433h1v1h-1zM196 443h1v1h-1zM196 453h1v1h-1zM196 463h1v1h-1zM196 473h1v1h-1zM196 483h1v1h-1zM196 493h1v1h-1zM196 503h1v1h-1zM196 513h1v1h-1zM196 523h1v1h-1zM196 533h1v1h-1zM196 543h1v1h-1zM196 553h1v1h-1zM196 563h1v1h-1zM196 573h1v1h-1zM196 583h1v1h-1zM196 593h1v1h-1zM196 603h1v1h-1zM196 613h1v1h-1zM196 623h1v1h-1zM196 633h1v1h-1zM196 643h1v1h-1zM196 653h1v1h-1zM196 663h1v1h-1zM196 673h1v1h-1zM196 683h1v1h-1zM196 693h1v1h-1zM196 703h1v1h-1zM196 713h1v1h-1zM196 723h1v1h-1zM206 163h1v1h-1zM206 173h1v1h-1zM206 183h1v1h-1zM206 193h1v1h-1zM206 203h1v1h-1zM206 213h1v1h-1zM206 223h1v1h-1zM206 233h1v1h-1zM206 243h1v1h-1zM206 253h1v1h-1zM206 263h1v1h-1zM206 273h1v1h-1zM206 283h1v1h-1zM206 293h1v1h-1zM206 303h1v1h-1zM206 313h1v1h-1zM206 323h1v1h-1zM206 333h1v1h-1zM206 343h1v1h-1zM206 353h1v1h-1zM206 363h1v1h-1zM206 373h1v1h-1zM206 383h1v1h-1zM206 393h1v1h-1zM206 403h1v1h-1zM206 413h1v1h-1zM206 423h1v1h-1zM206 433h1v1h-1zM206 443h1v1h-1zM206 453h1v1h-1zM206 463h1v1h-1zM206 473h1v1h-1zM206 483h1v1h-1zM206 493h1v1h-1zM206 503h1v1h-1zM206 513h1v1h-1zM206 523h1v1h-1zM206 533h1v1h-1zM206 543h1v1h-1zM206 553h1v1h-1zM206 563h1v1h-1zM206 573h1v1h-1zM206 583h1v1h-1zM206 593h1v1h-1zM206 603h1v1h-1zM206 613h1v1h-1zM206 623h1v1h-1zM206 633h1v1h-1zM206 643h1v1h-1zM206 653h1v1h-1zM206 663h1v1h-1zM206 673h1v1h-1zM206 683h1v1h-1zM206 693h1v1h-1zM206 703h1v1h-1zM206 713h1v1h-1zM206 723h1v1h-1zM216 163h1v1h-1zM216 173h1v1h-1zM216 183h1v1h-1zM216 193h1v1h-1zM216 203h1v1h-1zM216 213h1v1h-1zM216 223h1v1h-1zM216 233h1v1h-1zM216 243h1v1h-1zM216 253h1v1h-1zM216 263h1v1h-1zM216 273h1v1h-1zM216 283h1v1h-1zM216 293h1v1h-1zM216 303h1v1h-1zM216 313h1v1h-1zM216 323h1v1h-1zM216 333h1v1h-1zM216 343h1v1h-1zM216 353h1v1h-1zM216 363h1v1h-1zM216 373h1v1h-1zM216 383h1v1h-1zM216 393h1v1h-1zM216 403h1v1h-1zM216 413h1v1h-1zM216 423h1v1h-1zM216 433h1v1h-1zM216 443h1v1h-1zM216 453h1v1h-1zM216 463h1v1h-1zM216 473h1v1h-1zM216 483h1v1h-1zM216 493h1v1h-1zM216 503h1v1h-1zM216 513h1v1h-1zM216 523h1v1h-1zM216 533h1v1h-1zM216 543h1v1h-1zM216 553h1v1h-1zM216 563h1v1h-1zM216 573h1v1h-1zM216 583h1v1h-1zM216 593h1v1h-1zM216 603h1v1h-1zM216 613h1v1h-1zM216 623h1v1h-1zM216 633h1v1h-1zM216 643h1v1h-1zM216 653h1v1h-1zM216 663h1v1h-1zM216 673h1v1h-1zM216 683h1v1h-1zM216 693h1v1h-1zM216 703h1v1h-1zM216 713h1v1h-1zM216 723h1v1h-1zM226 163h1v1h-1zM226 173h1v1h-1zM226 183h1v1h-1zM226 193h1v1h-1zM226 203h1v1h-1zM226 213h1v1h-1zM226 223h1v1h-1zM226 233h1v1h-1zM226 243h1v1h-1zM226 253h1v1h-1zM226 263h1v1h-1zM226 273h1v1h-1zM226 283h1v1h-1zM226 293h1v1h-1zM226 303h1v1h-1zM226 313h1v1h-1zM226 323h1v1h-1zM226 333h1v1h-1zM226 343h1v1h-1zM226 353h1v1h-1zM226 363h1v1h-1zM226 373h1v1h-1zM226 383h1v1h-1zM226 393h1v1h-1zM226 403h1v1h-1zM226 413h1v1h-1zM226 423h1v1h-1zM226 433h1v1h-1zM226 443h1v1h-1zM226 453h1v1h-1zM226 463h1v1h-1zM226 473h1v1h-1zM226 483h1v1h-1zM226 493h1v1h-1zM226 503h1v1h-1zM226 513h1v1h-1zM226 523h1v1h-1zM226 533h1v1h-1zM226 543h1v1h-1zM226 553h1v1h-1zM226 563h1v1h-1zM226 573h1v1h-1zM226 583h1v1h-1zM226 593h1v1h-1zM226 603h1v1h-1zM226 613h1v1h-1zM226 623h1v1h-1zM226 633h1v1h-1zM226 643h1v1h-1zM226 653h1v1h-1zM226 663h1v1h-1zM226 673h1v1h-1zM226 683h1v1h-1zM226 693h1v1h-1zM226 703h1v1h-1zM226 713h1v1h-1zM226 723h1v1h-1zM236 163h1v1h-1zM236 173h1v1h-1zM236 183h1v1h-1zM236 193h1v1h-1zM236 203h1v1h-1zM236 213h1v1h-1zM236 223h1v1h-1zM236 233h1v1h-1zM236 243h1v1h-1zM236 253h1v1h-1zM236 263h1v1h-1zM236 273h1v1h-1zM236 283h1v1h-1zM236 293h1v1h-1zM236 303h1v1h-1zM236 313h1v1h-1zM236 323h1v1h-1zM236 333h1v1h-1zM236 343h1v1h-1zM236 353h1v1h-1zM236 363h1v1h-1zM236 373h1v1h-1zM236 383h1v1h-1zM236 393h1v1h-1zM236 403h1v1h-1zM236 413h1v1h-1zM236 423h1v1h-1zM236 433h1v1h-1zM236 443h1v1h-1zM236 453h1v1h-1zM236 463h1v1h-1zM236 473h1v1h-1zM236 483h1v1h-1zM236 493h1v1h-1zM236 503h1v1h-1zM236 513h1v1h-1zM236 523h1v1h-1zM236 533h1v1h-1zM236 543h1v1h-1zM236 553h1v1h-1zM236 563h1v1h-1zM236 573h1v1h-1zM236 583h1v1h-1zM236 593h1v1h-1zM236 603h1v1h-1zM236 613h1v1h-1zM236 623h1v1h-1zM236 633h1v1h-1zM236 643h1v1h-1zM236 653h1v1h-1zM236 663h1v1h-1zM236 673h1v1h-1zM236 683h1v1h-1zM236 693h1v1h-1zM236 703h1v1h-1zM236 713h1v1h-1zM236 723h1v1h-1zM246 163h1v1h-1zM246 173h1v1h-1zM246 183h1v1h-1zM246 193h1v1h-1zM246 203h1v1h-1zM246 213h1v1h-1zM246 223h1v1h-1zM246 233h1v1h-1zM246 243h1v1h-1zM246 253h1v1h-1zM246 263h1v1h-1zM246 273h1v1h-1zM246 283h1v1h-1zM246 293h1v1h-1zM246 303h1v1h-1zM246 313h1v1h-1zM246 323h1v1h-1zM246 333h1v1h-1zM246 343h1v1h-1zM246 353h1v1h-1zM246 363h1v1h-1zM246 373h1v1h-1zM246 383h1v1h-1zM246 393h1v1h-1zM246 403h1v1h-1zM246 413h1v1h-1zM246 423h1v1h-1zM246 433h1v1h-1zM246 443h1v1h-1zM246 453h1v1h-1zM246 463h1v1h-1zM246 473h1v1h-1zM246 483h1v1h-1zM246 493h1v1h-1zM246 503h1v1h-1zM246 513h1v1h-1zM246 523h1v1h-1zM246 533h1v1h-1zM246 543h1v1h-1zM246 553h1v1h-1zM246 563h1v1h-1zM246 573h1v1h-1zM246 583h1v1h-1zM246 593h1v1h-1zM246 603h1v1h-1zM246 613h1v1h-1zM246 623h1v1h-1zM246 633h1v1h-1zM246 643h1v1h-1zM246 653h1v1h-1zM246 663h1v1h-1zM246 673h1v1h-1zM246 683h1v1h-1zM246 693h1v1h-1zM246 703h1v1h-1zM246 713h1v1h-1zM246 723h1v1h-1zM256 163h1v1h-1zM256 173h1v1h-1zM256 183h1v1h-1zM256 193h1v1h-1zM256 203h1v1h-1zM256 213h1v1h-1zM256 223h1v1h-1zM256 233h1v1h-1zM256 243h1v1h-1zM256 253h1v1h-1zM256 263h1v1h-1zM256 273h1v1h-1zM256 283h1v1h-1zM256 293h1v1h-1zM256 303h1v1h-1zM256 313h1v1h-1zM256 323h1v1h-1zM256 333h1v1h-1zM256 343h1v1h-1zM256 353h1v1h-1zM256 363h1v1h-1zM256 373h1v1h-1zM256 383h1v1h-1zM256 393h1v1h-1zM256 403h1v1h-1zM256 413h1v1h-1zM256 423h1v1h-1zM256 433h1v1h-1zM256 443h1v1h-1zM256 453h1v1h-1zM256 463h1v1h-1zM256 473h1v1h-1zM256 483h1v1h-1zM256 493h1v1h-1zM256 503h1v1h-1zM256 513h1v1h-1zM256 523h1v1h-1zM256 533h1v1h-1zM256 543h1v1h-1zM256 553h1v1h-1zM256 563h1v1h-1zM256 573h1v1h-1zM256 583h1v1h-1zM256 593h1v1h-1zM256 603h1v1h-1zM256 613h1v1h-1zM256 623h1v1h-1zM256 633h1v1h-1zM256 643h1v1h-1zM256 653h1v1h-1zM256 663h1v1h-1zM256 673h1v1h-1zM256 683h1v1h-1zM256 693h1v1h-1zM256 703h1v1h-1zM256 713h1v1h-1zM256 723h1v1h-1zM266 163h1v1h-1zM266 173h1v1h-1zM266 183h1v1h-1zM266 193h1v1h-1zM266 203h1v1h-1zM266 213h1v1h-1zM266 223h1v1h-1zM266 233h1v1h-1zM266 243h1v1h-1zM266 253h1v1h-1zM266 263h1v1h-1zM266 273h1v1h-1zM266 283h1v1h-1zM266 293h1v1h-1zM266 303h1v1h-1zM266 313h1v1h-1zM266 323h1v1h-1zM266 333h1v1h-1zM266 343h1v1h-1zM266 353h1v1h-1zM266 363h1v1h-1zM266 373h1v1h-1zM266 383h1v1h-1zM266 393h1v1h-1zM266 403h1v1h-1zM266 413h1v1h-1zM266 423h1v1h-1zM266 433h1v1h-1zM266 443h1v1h-1zM266 453h1v1h-1zM266 463h1v1h-1zM266 473h1v1h-1zM266 483h1v1h-1zM266 493h1v1h-1zM266 503h1v1h-1zM266 513h1v1h-1zM266 523h1v1h-1zM266 533h1v1h-1zM266 543h1v1h-1zM266 553h1v1h-1zM266 563h1v1h-1zM266 573h1v1h-1zM266 583h1v1h-1zM266 593h1v1h-1zM266 603h1v1h-1zM266 613h1v1h-1zM266 623h1v1h-1zM266 633h1v1h-1zM266 643h1v1h-1zM266 653h1v1h-1zM266 663h1v1h-1zM266 673h1v1h-1zM266 683h1v1h-1zM266 693h1v1h-1zM266 703h1v1h-1zM266 713h1v1h-1zM266 723h1v1h-1zM276 163h1v1h-1zM276 173h1v1h-1zM276 183h1v1h-1zM276 193h1v1h-1zM276 203h1v1h-1zM276 213h1v1h-1zM276 223h1v1h-1zM276 233h1v1h-1zM276 243h1v1h-1zM276 253h1v1h-1zM276 263h1v1h-1zM276 273h1v1h-1zM276 283h1v1h-1zM276 293h1v1h-1zM276 303h1v1h-1zM276 313h1v1h-1zM276 323h1v1h-1zM276 333h1v1h-1zM276 343h1v1h-1zM276 353h1v1h-1zM276 363h1v1h-1zM276 373h1v1h-1zM276 383h1v1h-1zM276 393h1v1h-1zM276 403h1v1h-1zM276 413h1v1h-1zM276 423h1v1h-1zM276 433h1v1h-1zM276 443h1v1h-1zM276 453h1v1h-1zM276 463h1v1h-1zM276 473h1v1h-1zM276 483h1v1h-1zM276 493h1v1h-1zM276 503h1v1h-1zM276 513h1v1h-1zM276 523h1v1h-1zM276 533h1v1h-1zM276 543h1v1h-1zM276 553h1v1h-1zM276 563h1v1h-1zM276 573h1v1h-1zM276 583h1v1h-1zM276 593h1v1h-1zM276 603h1v1h-1zM276 613h1v1h-1zM276 623h1v1h-1zM276 633h1v1h-1zM276 643h1v1h-1zM276 653h1v1h-1zM276 663h1v1h-1zM276 673h1v1h-1zM276 683h1v1h-1zM276 693h1v1h-1zM276 703h1v1h-1zM276 713h1v1h-1zM276 723h1v1h-1zM286 163h1v1h-1zM286 173h1v1h-1zM286 183h1v1h-1zM286 193h1v1h-1zM286 203h1v1h-1zM286 213h1v1h-1zM286 223h1v1h-1zM286 233h1v1h-1zM286 243h1v1h-1zM286 253h1v1h-1zM286 263h1v1h-1zM286 273h1v1h-1zM286 283h1v1h-1zM286 293h1v1h-1zM286 303h1v1h-1zM286 313h1v1h-1zM286 323h1v1h-1zM286 333h1v1h-1zM286 343h1v1h-1zM286 353h1v1h-1zM286 363h1v1h-1zM286 373h1v1h-1zM286 383h1v1h-1zM286 393h1v1h-1zM286 403h1v1h-1zM286 413h1v1h-1zM286 423h1v1h-1zM286 433h1v1h-1zM286 443h1v1h-1zM286 453h1v1h-1zM286 463h1v1h-1zM286 473h1v1h-1zM286 483h1v1h-1zM286 493h1v1h-1zM286 503h1v1h-1zM286 513h1v1h-1zM286 523h1v1h-1zM286 533h1v1h-1zM286 543h1v1h-1zM286 553h1v1h-1zM286 563h1v1h-1zM286 573h1v1h-1zM286 583h1v1h-1zM286 593h1v1h-1zM286 603h1v1h-1zM286 613h1v1h-1zM286 623h1v1h-1zM286 633h1v1h-1zM286 643h1v1h-1zM286 653h1v1h-1zM286 663h1v1h-1zM286 673h1v1h-1zM286 683h1v1h-1zM286 693h1v1h-1zM286 703h1v1h-1zM286 713h1v1h-1zM286 723h1v1h-1zM296 163h1v1h-1zM296 173h1v1h-1zM296 183h1v1h-1zM296 193h1v1h-1zM296 203h1v1h-1zM296 213h1v1h-1zM296 223h1v1h-1zM296 233h1v1h-1zM296 243h1v1h-1zM296 253h1v1h-1zM296 263h1v1h-1zM296 273h1v1h-1zM296 283h1v1h-1zM296 293h1v1h-1zM296 303h1v1h-1zM296 313h1v1h-1zM296 323h1v1h-1zM296 333h1v1h-1zM296 343h1v1h-1zM296 353h1v1h-1zM296 363h1v1h-1zM296 373h1v1h-1zM296 383h1v1h-1zM296 393h1v1h-1zM296 403h1v1h-1zM296 413h1v1h-1zM296 423h1v1h-1zM296 433h1v1h-1zM296 443h1v1h-1zM296 453h1v1h-1zM296 463h1v1h-1zM296 473h1v1h-1zM296 483h1v1h-1zM296 493h1v1h-1zM296 503h1v1h-1zM296 513h1v1h-1zM296 523h1v1h-1zM296 533h1v1h-1zM296 543h1v1h-1zM296 553h1v1h-1zM296 563h1v1h-1zM296 573h1v1h-1zM296 583h1v1h-1zM296 593h1v1h-1zM296 603h1v1h-1zM296 613h1v1h-1zM296 623h1v1h-1zM296 633h1v1h-1zM296 643h1v1h-1zM296 653h1v1h-1zM296 663h1v1h-1zM296 673h1v1h-1zM296 683h1v1h-1zM296 693h1v1h-1zM296 703h1v1h-1zM296 713h1v1h-1zM296 723h1v1h-1zM306 163h1v1h-1zM306 173h1v1h-1zM306 183h1v1h-1zM306 193h1v1h-1zM306 203h1v1h-1zM306 213h1v1h-1zM306 223h1v1h-1zM306 233h1v1h-1zM306 243h1v1h-1zM306 253h1v1h-1zM306 263h1v1h-1zM306 273h1v1h-1zM306 283h1v1h-1zM306 293h1v1h-1zM306 303h1v1h-1zM306 313h1v1h-1zM306 323h1v1h-1zM306 333h1v1h-1zM306 343h1v1h-1zM306 353h1v1h-1zM306 363h1v1h-1zM306 373h1v1h-1zM306 383h1v1h-1zM306 393h1v1h-1zM306 403h1v1h-1zM306 413h1v1h-1zM306 423h1v1h-1zM306 433h1v1h-1zM306 443h1v1h-1zM306 453h1v1h-1zM306 463h1v1h-1zM306 473h1v1h-1zM306 483h1v1h-1zM306 493h1v1h-1zM306 503h1v1h-1zM306 513h1v1h-1zM306 523h1v1h-1zM306 533h1v1h-1zM306 543h1v1h-1zM306 553h1v1h-1zM306 563h1v1h-1zM306 573h1v1h-1zM306 583h1v1h-1zM306 593h1v1h-1zM306 603h1v1h-1zM306 613h1v1h-1zM306 623h1v1h-1zM306 633h1v1h-1zM306 643h1v1h-1zM306 653h1v1h-1zM306 663h1v1h-1zM306 673h1v1h-1zM306 683h1v1h-1zM306 693h1v1h-1zM306 703h1v1h-1zM306 713h1v1h-1zM306 723h1v1h-1zM316 163h1v1h-1zM316 173h1v1h-1zM316 183h1v1h-1zM316 193h1v1h-1zM316 203h1v1h-1zM316 213h1v1h-1zM316 223h1v1h-1zM316 233h1v1h-1zM316 243h1v1h-1zM316 253h1v1h-1zM316 263h1v1h-1zM316 273h1v1h-1zM316 283h1v1h-1zM316 293h1v1h-1zM316 303h1v1h-1zM316 313h1v1h-1zM316 323h1v1h-1zM316 333h1v1h-1zM316 343h1v1h-1zM316 353h1v1h-1zM316 363h1v1h-1zM316 373h1v1h-1zM316 383h1v1h-1zM316 393h1v1h-1zM316 403h1v1h-1zM316 413h1v1h-1zM316 423h1v1h-1zM316 433h1v1h-1zM316 443h1v1h-1zM316 453h1v1h-1zM316 463h1v1h-1zM316 473h1v1h-1zM316 483h1v1h-1zM316 493h1v1h-1zM316 503h1v1h-1zM316 513h1v1h-1zM316 523h1v1h-1zM316 533h1v1h-1zM316 543h1v1h-1zM316 553h1v1h-1zM316 563h1v1h-1zM316 573h1v1h-1zM316 583h1v1h-1zM316 593h1v1h-1zM316 603h1v1h-1zM316 613h1v1h-1zM316 623h1v1h-1zM316 633h1v1h-1zM316 643h1v1h-1zM316 653h1v1h-1zM316 663h1v1h-1zM316 673h1v1h-1zM316 683h1v1h-1zM316 693h1v1h-1zM316 703h1v1h-1zM316 713h1v1h-1zM316 723h1v1h-1zM326 163h1v1h-1zM326 173h1v1h-1zM326 183h1v1h-1zM326 193h1v1h-1zM326 203h1v1h-1zM326 213h1v1h-1zM326 223h1v1h-1zM326 233h1v1h-1zM326 243h1v1h-1zM326 253h1v1h-1zM326 263h1v1h-1zM326 273h1v1h-1zM326 283h1v1h-1zM326 293h1v1h-1zM326 303h1v1h-1zM326 313h1v1h-1zM326 323h1v1h-1zM326 333h1v1h-1zM326 343h1v1h-1zM326 353h1v1h-1zM326 363h1v1h-1zM326 373h1v1h-1zM326 383h1v1h-1zM326 393h1v1h-1zM326 403h1v1h-1zM326 413h1v1h-1zM326 423h1v1h-1zM326 433h1v1h-1zM326 443h1v1h-1zM326 453h1v1h-1zM326 463h1v1h-1zM326 473h1v1h-1zM326 483h1v1h-1zM326 493h1v1h-1zM326 503h1v1h-1zM326 513h1v1h-1zM326 523h1v1h-1zM326 533h1v1h-1zM326 543h1v1h-1zM326 553h1v1h-1zM326 563h1v1h-1zM326 573h1v1h-1zM326 583h1v1h-1zM326 593h1v1h-1zM326 603h1v1h-1zM326 613h1v1h-1zM326 623h1v1h-1zM326 633h1v1h-1zM326 643h1v1h-1zM326 653h1v1h-1zM326 663h1v1h-1zM326 673h1v1h-1zM326 683h1v1h-1zM326 693h1v1h-1zM326 703h1v1h-1zM326 713h1v1h-1zM326 723h1v1h-1zM336 163h1v1h-1zM336 173h1v1h-1zM336 183h1v1h-1zM336 193h1v1h-1zM336 203h1v1h-1zM336 213h1v1h-1zM336 223h1v1h-1zM336 233h1v1h-1zM336 243h1v1h-1zM336 253h1v1h-1zM336 263h1v1h-1zM336 273h1v1h-1zM336 283h1v1h-1zM336 293h1v1h-1zM336 303h1v1h-1zM336 313h1v1h-1zM336 323h1v1h-1zM336 333h1v1h-1zM336 343h1v1h-1zM336 353h1v1h-1zM336 363h1v1h-1zM336 373h1v1h-1zM336 383h1v1h-1zM336 393h1v1h-1zM336 403h1v1h-1zM336 413h1v1h-1zM336 423h1v1h-1zM336 433h1v1h-1zM336 443h1v1h-1zM336 453h1v1h-1zM336 463h1v1h-1zM336 473h1v1h-1zM336 483h1v1h-1zM336 493h1v1h-1zM336 503h1v1h-1zM336 513h1v1h-1zM336 523h1v1h-1zM336 533h1v1h-1zM336 543h1v1h-1zM336 553h1v1h-1zM336 563h1v1h-1zM336 573h1v1h-1zM336 583h1v1h-1zM336 593h1v1h-1zM336 603h1v1h-1zM336 613h1v1h-1zM336 623h1v1h-1zM336 633h1v1h-1zM336 643h1v1h-1zM336 653h1v1h-1zM336 663h1v1h-1zM336 673h1v1h-1zM336 683h1v1h-1zM336 693h1v1h-1zM336 703h1v1h-1zM336 713h1v1h-1zM336 723h1v1h-1zM346 163h1v1h-1zM346 173h1v1h-1zM346 183h1v1h-1zM346 193h1v1h-1zM346 203h1v1h-1zM346 213h1v1h-1zM346 223h1v1h-1zM346 233h1v1h-1zM346 243h1v1h-1zM346 253h1v1h-1zM346 263h1v1h-1zM346 273h1v1h-1zM346 283h1v1h-1zM346 293h1v1h-1zM346 303h1v1h-1zM346 313h1v1h-1zM346 323h1v1h-1zM346 333h1v1h-1zM346 343h1v1h-1zM346 353h1v1h-1zM346 363h1v1h-1zM346 373h1v1h-1zM346 383h1v1h-1zM346 393h1v1h-1zM346 403h1v1h-1zM346 413h1v1h-1zM346 423h1v1h-1zM346 433h1v1h-1zM346 443h1v1h-1zM346 453h1v1h-1zM346 463h1v1h-1zM346 473h1v1h-1zM346 483h1v1h-1zM346 493h1v1h-1zM346 503h1v1h-1zM346 513h1v1h-1zM346 523h1v1h-1zM346 533h1v1h-1zM346 543h1v1h-1zM346 553h1v1h-1zM346 563h1v1h-1zM346 573h1v1h-1zM346 583h1v1h-1zM346 593h1v1h-1zM346 603h1v1h-1zM346 613h1v1h-1zM346 623h1v1h-1zM346 633h1v1h-1zM346 643h1v1h-1zM346 653h1v1h-1zM346 663h1v1h-1zM346 673h1v1h-1zM346 683h1v1h-1zM346 693h1v1h-1zM346 703h1v1h-1zM346 713h1v1h-1zM346 723h1v1h-1zM356 163h1v1h-1zM356 173h1v1h-1zM356 183h1v1h-1zM356 193h1v1h-1zM356 203h1v1h-1zM356 213h1v1h-1zM356 223h1v1h-1zM356 233h1v1h-1zM356 243h1v1h-1zM356 253h1v1h-1zM356 263h1v1h-1zM356 273h1v1h-1zM356 283h1v1h-1zM356 293h1v1h-1zM356 303h1v1h-1zM356 313h1v1h-1zM356 323h1v1h-1zM356 333h1v1h-1zM356 343h1v1h-1zM356 353h1v1h-1zM356 363h1v1h-1zM356 373h1v1h-1zM356 383h1v1h-1zM356 393h1v1h-1zM356 403h1v1h-1zM356 413h1v1h-1zM356 423h1v1h-1zM356 433h1v1h-1zM356 443h1v1h-1zM356 453h1v1h-1zM356 463h1v1h-1zM356 473h1v1h-1zM356 483h1v1h-1zM356 493h1v1h-1zM356 503h1v1h-1zM356 513h1v1h-1zM356 523h1v1h-1zM356 533h1v1h-1zM356 543h1v1h-1zM356 553h1v1h-1zM356 563h1v1h-1zM356 573h1v1h-1zM356 583h1v1h-1zM356 593h1v1h-1zM356 603h1v1h-1zM356 613h1v1h-1zM356 623h1v1h-1zM356 633h1v1h-1zM356 643h1v1h-1zM356 653h1v1h-1zM356 663h1v1h-1zM356 673h1v1h-1zM356 683h1v1h-1zM356 693h1v1h-1zM356 703h1v1h-1zM356 713h1v1h-1zM356 723h1v1h-1zM366 163h1v1h-1zM366 173h1v1h-1zM366 183h1v1h-1zM366 193h1v1h-1zM366 203h1v1h-1zM366 213h1v1h-1zM366 223h1v1h-1zM366 233h1v1h-1zM366 243h1v1h-1zM366 253h1v1h-1zM366 263h1v1h-1zM366 273h1v1h-1zM366 283h1v1h-1zM366 293h1v1h-1zM366 303h1v1h-1zM366 313h1v1h-1zM366 323h1v1h-1zM366 333h1v1h-1zM366 343h1v1h-1zM366 353h1v1h-1zM366 363h1v1h-1zM366 373h1v1h-1zM366 383h1v1h-1zM366 393h1v1h-1zM366 403h1v1h-1zM366 413h1v1h-1zM366 423h1v1h-1zM366 433h1v1h-1zM366 443h1v1h-1zM366 453h1v1h-1zM366 463h1v1h-1zM366 473h1v1h-1zM366 483h1v1h-1zM366 493h1v1h-1zM366 503h1v1h-1zM366 513h1v1h-1zM366 523h1v1h-1zM366 533h1v1h-1zM366 543h1v1h-1zM366 553h1v1h-1zM366 563h1v1h-1zM366 573h1v1h-1zM366 583h1v1h-1zM366 593h1v1h-1zM366 603h1v1h-1zM366 613h1v1h-1zM366 623h1v1h-1zM366 633h1v1h-1zM366 643h1v1h-1zM366 653h1v1h-1zM366 663h1v1h-1zM366 673h1v1h-1zM366 683h1v1h-1zM366 693h1v1h-1zM366 703h1v1h-1zM366 713h1v1h-1zM366 723h1v1h-1zM376 163h1v1h-1zM376 173h1v1h-1zM376 183h1v1h-1zM376 193h1v1h-1zM376 203h1v1h-1zM376 213h1v1h-1zM376 223h1v1h-1zM376 233h1v1h-1zM376 243h1v1h-1zM376 253h1v1h-1zM376 263h1v1h-1zM376 273h1v1h-1zM376 283h1v1h-1zM376 293h1v1h-1zM376 303h1v1h-1zM376 313h1v1h-1zM376 323h1v1h-1zM376 333h1v1h-1zM376 343h1v1h-1zM376 353h1v1h-1zM376 363h1v1h-1zM376 373h1v1h-1zM376 383h1v1h-1zM376 393h1v1h-1zM376 403h1v1h-1zM376 413h1v1h-1zM376 423h1v1h-1zM376 433h1v1h-1zM376 443h1v1h-1zM376 453h1v1h-1zM376 463h1v1h-1zM376 473h1v1h-1zM376 483h1v1h-1zM376 493h1v1h-1zM376 503h1v1h-1zM376 513h1v1h-1zM376 523h1v1h-1zM376 533h1v1h-1zM376 543h1v1h-1zM376 553h1v1h-1zM376 563h1v1h-1zM376 573h1v1h-1zM376 583h1v1h-1zM376 593h1v1h-1zM376 603h1v1h-1zM376 613h1v1h-1zM376 623h1v1h-1zM376 633h1v1h-1zM376 643h1v1h-1zM376 653h1v1h-1zM376 663h1v1h-1zM376 673h1v1h-1zM376 683h1v1h-1zM376 693h1v1h-1zM376 703h1v1h-1zM376 713h1v1h-1zM376 723h1v1h-1zM386 163h1v1h-1zM386 173h1v1h-1zM386 183h1v1h-1zM386 193h1v1h-1zM386 203h1v1h-1zM386 213h1v1h-1zM386 223h1v1h-1zM386 233h1v1h-1zM386 243h1v1h-1zM386 253h1v1h-1zM386 263h1v1h-1zM386 273h1v1h-1zM386 283h1v1h-1zM386 293h1v1h-1zM386 303h1v1h-1zM386 313h1v1h-1zM386 323h1v1h-1zM386 333h1v1h-1zM386 343h1v1h-1zM386 353h1v1h-1zM386 363h1v1h-1zM386 373h1v1h-1zM386 383h1v1h-1zM386 393h1v1h-1zM386 403h1v1h-1zM386 413h1v1h-1zM386 423h1v1h-1zM386 433h1v1h-1zM386 443h1v1h-1zM386 453h1v1h-1zM386 463h1v1h-1zM386 473h1v1h-1zM386 483h1v1h-1zM386 493h1v1h-1zM386 503h1v1h-1zM386 513h1v1h-1zM386 523h1v1h-1zM386 533h1v1h-1zM386 543h1v1h-1zM386 553h1v1h-1zM386 563h1v1h-1zM386 573h1v1h-1zM386 583h1v1h-1zM386 593h1v1h-1zM386 603h1v1h-1zM386 613h1v1h-1zM386 623h1v1h-1zM386 633h1v1h-1zM386 643h1v1h-1zM386 653h1v1h-1zM386 663h1v1h-1zM386 673h1v1h-1zM386 683h1v1h-1zM386 693h1v1h-1zM386 703h1v1h-1zM386 713h1v1h-1zM386 723h1v1h-1zM396 163h1v1h-1zM396 173h1v1h-1zM396 183h1v1h-1zM396 193h1v1h-1zM396 203h1v1h-1zM396 213h1v1h-1zM396 223h1v1h-1zM396 233h1v1h-1zM396 243h1v1h-1zM396 253h1v1h-1zM396 263h1v1h-1zM396 273h1v1h-1zM396 283h1v1h-1zM396 293h1v1h-1zM396 303h1v1h-1zM396 313h1v1h-1zM396 323h1v1h-1zM396 333h1v1h-1zM396 343h1v1h-1zM396 353h1v1h-1zM396 363h1v1h-1zM396 373h1v1h-1zM396 383h1v1h-1zM396 393h1v1h-1zM396 403h1v1h-1zM396 413h1v1h-1zM396 423h1v1h-1zM396 433h1v1h-1zM396 443h1v1h-1zM396 453h1v1h-1zM396 463h1v1h-1zM396 473h1v1h-1zM396 483h1v1h-1zM396 493h1v1h-1zM396 503h1v1h-1zM396 513h1v1h-1zM396 523h1v1h-1zM396 533h1v1h-1zM396 543h1v1h-1zM396 553h1v1h-1zM396 563h1v1h-1zM396 573h1v1h-1zM396 583h1v1h-1zM396 593h1v1h-1zM396 603h1v1h-1zM396 613h1v1h-1zM396 623h1v1h-1zM396 633h1v1h-1zM396 643h1v1h-1zM396 653h1v1h-1zM396 663h1v1h-1zM396 673h1v1h-1zM396 683h1v1h-1zM396 693h1v1h-1zM396 703h1v1h-1zM396 713h1v1h-1zM396 723h1v1h-1zM406 163h1v1h-1zM406 173h1v1h-1zM406 183h1v1h-1zM406 193h1v1h-1zM406 203h1v1h-1zM406 213h1v1h-1zM406 223h1v1h-1zM406 233h1v1h-1zM406 243h1v1h-1zM406 253h1v1h-1zM406 263h1v1h-1zM406 273h1v1h-1zM406 283h1v1h-1zM406 293h1v1h-1zM406 303h1v1h-1zM406 313h1v1h-1zM406 323h1v1h-1zM406 333h1v1h-1zM406 343h1v1h-1zM406 353h1v1h-1zM406 363h1v1h-1zM406 373h1v1h-1zM406 383h1v1h-1zM406 393h1v1h-1zM406 403h1v1h-1zM406 413h1v1h-1zM406 423h1v1h-1zM406 433h1v1h-1zM406 443h1v1h-1zM406 453h1v1h-1zM406 463h1v1h-1zM406 473h1v1h-1zM406 483h1v1h-1zM406 493h1v1h-1zM406 503h1v1h-1zM406 513h1v1h-1zM406 523h1v1h-1zM406 533h1v1h-1zM406 543h1v1h-1zM406 553h1v1h-1zM406 563h1v1h-1zM406 573h1v1h-1zM406 583h1v1h-1zM406 593h1v1h-1zM406 603h1v1h-1zM406 613h1v1h-1zM406 623h1v1h-1zM406 633h1v1h-1zM406 643h1v1h-1zM406 653h1v1h-1zM406 663h1v1h-1zM406 673h1v1h-1zM406 683h1v1h-1zM406 693h1v1h-1zM406 703h1v1h-1zM406 713h1v1h-1zM406 723h1v1h-1zM416 163h1v1h-1zM416 173h1v1h-1zM416 183h1v1h-1zM416 193h1v1h-1zM416 203h1v1h-1zM416 213h1v1h-1zM416 223h1v1h-1zM416 233h1v1h-1zM416 243h1v1h-1zM416 253h1v1h-1zM416 263h1v1h-1zM416 273h1v1h-1zM416 283h1v1h-1zM416 293h1v1h-1zM416 303h1v1h-1zM416 313h1v1h-1zM416 323h1v1h-1zM416 333h1v1h-1zM416 343h1v1h-1zM416 353h1v1h-1zM416 363h1v1h-1zM416 373h1v1h-1zM416 383h1v1h-1zM416 393h1v1h-1zM416 403h1v1h-1zM416 413h1v1h-1zM416 423h1v1h-1zM416 433h1v1h-1zM416 443h1v1h-1zM416 453h1v1h-1zM416 463h1v1h-1zM416 473h1v1h-1zM416 483h1v1h-1zM416 493h1v1h-1zM416 503h1v1h-1zM416 513h1v1h-1zM416 523h1v1h-1zM416 533h1v1h-1zM416 543h1v1h-1zM416 553h1v1h-1zM416 563h1v1h-1zM416 573h1v1h-1zM416 583h1v1h-1zM416 593h1v1h-1zM416 603h1v1h-1zM416 613h1v1h-1zM416 623h1v1h-1zM416 633h1v1h-1zM416 643h1v1h-1zM416 653h1v1h-1zM416 663h1v1h-1zM416 673h1v1h-1zM416 683h1v1h-1zM416 693h1v1h-1zM416 703h1v1h-1zM416 713h1v1h-1zM416 723h1v1h-1zM426 163h1v1h-1zM426 173h1v1h-1zM426 183h1v1h-1zM426 193h1v1h-1zM426 203h1v1h-1zM426 213h1v1h-1zM426 223h1v1h-1zM426 233h1v1h-1zM426 243h1v1h-1zM426 253h1v1h-1zM426 263h1v1h-1zM426 273h1v1h-1zM426 283h1v1h-1zM426 293h1v1h-1zM426 303h1v1h-1zM426 313h1v1h-1zM426 323h1v1h-1zM426 333h1v1h-1zM426 343h1v1h-1zM426 353h1v1h-1zM426 363h1v1h-1zM426 373h1v1h-1zM426 383h1v1h-1zM426 393h1v1h-1zM426 403h1v1h-1zM426 413h1v1h-1zM426 423h1v1h-1zM426 433h1v1h-1zM426 443h1v1h-1zM426 453h1v1h-1zM426 463h1v1h-1zM426 473h1v1h-1zM426 483h1v1h-1zM426 493h1v1h-1zM426 503h1v1h-1zM426 513h1v1h-1zM426 523h1v1h-1zM426 533h1v1h-1zM426 543h1v1h-1zM426 553h1v1h-1zM426 563h1v1h-1zM426 573h1v1h-1zM426 583h1v1h-1zM426 593h1v1h-1zM426 603h1v1h-1zM426 613h1v1h-1zM426 623h1v1h-1zM426 633h1v1h-1zM426 643h1v1h-1zM426 653h1v1h-1zM426 663h1v1h-1zM426 673h1v1h-1zM426 683h1v1h-1zM426 693h1v1h-1zM426 703h1v1h-1zM426 713h1v1h-1zM426 723h1v1h-1zM436 163h1v1h-1zM436 173h1v1h-1zM436 183h1v1h-1zM436 193h1v1h-1zM436 203h1v1h-1zM436 213h1v1h-1zM436 223h1v1h-1zM436 233h1v1h-1zM436 243h1v1h-1zM436 253h1v1h-1zM436 263h1v1h-1zM436 273h1v1h-1zM436 283h1v1h-1zM436 293h1v1h-1zM436 303h1v1h-1zM436 313h1v1h-1zM436 323h1v1h-1zM436 333h1v1h-1zM436 343h1v1h-1zM436 353h1v1h-1zM436 363h1v1h-1zM436 373h1v1h-1zM436 383h1v1h-1zM436 393h1v1h-1zM436 403h1v1h-1zM436 413h1v1h-1zM436 423h1v1h-1zM436 433h1v1h-1zM436 443h1v1h-1zM436 453h1v1h-1zM436 463h1v1h-1zM436 473h1v1h-1zM436 483h1v1h-1zM436 493h1v1h-1zM436 503h1v1h-1zM436 513h1v1h-1zM436 523h1v1h-1zM436 533h1v1h-1zM436 543h1v1h-1zM436 553h1v1h-1zM436 563h1v1h-1zM436 573h1v1h-1zM436 583h1v1h-1zM436 593h1v1h-1zM436 603h1v1h-1zM436 613h1v1h-1zM436 623h1v1h-1zM436 633h1v1h-1zM436 643h1v1h-1zM436 653h1v1h-1zM436 663h1v1h-1zM436 673h1v1h-1zM436 683h1v1h-1zM436 693h1v1h-1zM436 703h1v1h-1zM436 713h1v1h-1zM436 723h1v1h-1zM446 163h1v1h-1zM446 173h1v1h-1zM446 183h1v1h-1zM446 193h1v1h-1zM446 203h1v1h-1zM446 213h1v1h-1zM446 223h1v1h-1zM446 233h1v1h-1zM446 243h1v1h-1zM446 253h1v1h-1zM446 263h1v1h-1zM446 273h1v1h-1zM446 283h1v1h-1zM446 293h1v1h-1zM446 303h1v1h-1zM446 313h1v1h-1zM446 323h1v1h-1zM446 333h1v1h-1zM446 343h1v1h-1zM446 353h1v1h-1zM446 363h1v1h-1zM446 373h1v1h-1zM446 383h1v1h-1zM446 393h1v1h-1zM446 403h1v1h-1zM446 413h1v1h-1zM446 423h1v1h-1zM446 433h1v1h-1zM446 443h1v1h-1zM446 453h1v1h-1zM446 463h1v1h-1zM446 473h1v1h-1zM446 483h1v1h-1zM446 493h1v1h-1zM446 503h1v1h-1zM446 513h1v1h-1zM446 523h1v1h-1zM446 533h1v1h-1zM446 543h1v1h-1zM446 553h1v1h-1zM446 563h1v1h-1zM446 573h1v1h-1zM446 583h1v1h-1zM446 593h1v1h-1zM446 603h1v1h-1zM446 613h1v1h-1zM446 623h1v1h-1zM446 633h1v1h-1zM446 643h1v1h-1zM446 653h1v1h-1zM446 663h1v1h-1zM446 673h1v1h-1zM446 683h1v1h-1zM446 693h1v1h-1zM446 703h1v1h-1zM446 713h1v1h-1zM446 723h1v1h-1zM456 163h1v1h-1zM456 173h1v1h-1zM456 183h1v1h-1zM456 193h1v1h-1zM456 203h1v1h-1zM456 213h1v1h-1zM456 223h1v1h-1zM456 233h1v1h-1zM456 243h1v1h-1zM456 253h1v1h-1zM456 263h1v1h-1zM456 273h1v1h-1zM456 283h1v1h-1zM456 293h1v1h-1zM456 303h1v1h-1zM456 313h1v1h-1zM456 323h1v1h-1zM456 333h1v1h-1zM456 343h1v1h-1zM456 353h1v1h-1zM456 363h1v1h-1zM456 373h1v1h-1zM456 383h1v1h-1zM456 393h1v1h-1zM456 403h1v1h-1zM456 413h1v1h-1zM456 423h1v1h-1zM456 433h1v1h-1zM456 443h1v1h-1zM456 453h1v1h-1zM456 463h1v1h-1zM456 473h1v1h-1zM456 483h1v1h-1zM456 493h1v1h-1zM456 503h1v1h-1zM456 513h1v1h-1zM456 523h1v1h-1zM456 533h1v1h-1zM456 543h1v1h-1zM456 553h1v1h-1zM456 563h1v1h-1zM456 573h1v1h-1zM456 583h1v1h-1zM456 593h1v1h-1zM456 603h1v1h-1zM456 613h1v1h-1zM456 623h1v1h-1zM456 633h1v1h-1zM456 643h1v1h-1zM456 653h1v1h-1zM456 663h1v1h-1zM456 673h1v1h-1zM456 683h1v1h-1zM456 693h1v1h-1zM456 703h1v1h-1zM456 713h1v1h-1zM456 723h1v1h-1zM466 163h1v1h-1zM466 173h1v1h-1zM466 183h1v1h-1zM466 193h1v1h-1zM466 203h1v1h-1zM466 213h1v1h-1zM466 223h1v1h-1zM466 233h1v1h-1zM466 243h1v1h-1zM466 253h1v1h-1zM466 263h1v1h-1zM466 273h1v1h-1zM466 283h1v1h-1zM466 293h1v1h-1zM466 303h1v1h-1zM466 313h1v1h-1zM466 323h1v1h-1zM466 333h1v1h-1zM466 343h1v1h-1zM466 353h1v1h-1zM466 363h1v1h-1zM466 373h1v1h-1zM466 383h1v1h-1zM466 393h1v1h-1zM466 403h1v1h-1zM466 413h1v1h-1zM466 423h1v1h-1zM466 433h1v1h-1zM466 443h1v1h-1zM466 453h1v1h-1zM466 463h1v1h-1zM466 473h1v1h-1zM466 483h1v1h-1zM466 493h1v1h-1zM466 503h1v1h-1zM466 513h1v1h-1zM466 523h1v1h-1zM466 533h1v1h-1zM466 543h1v1h-1zM466 553h1v1h-1zM466 563h1v1h-1zM466 573h1v1h-1zM466 583h1v1h-1zM466 593h1v1h-1zM466 603h1v1h-1zM466 613h1v1h-1zM466 623h1v1h-1zM466 633h1v1h-1zM466 643h1v1h-1zM466 653h1v1h-1zM466 663h1v1h-1zM466 673h1v1h-1zM466 683h1v1h-1zM466 693h1v1h-1zM466 703h1v1h-1zM466 713h1v1h-1zM466 723h1v1h-1zM476 163h1v1h-1zM476 173h1v1h-1zM476 183h1v1h-1zM476 193h1v1h-1zM476 203h1v1h-1zM476 213h1v1h-1zM476 223h1v1h-1zM476 233h1v1h-1zM476 243h1v1h-1zM476 253h1v1h-1zM476 263h1v1h-1zM476 273h1v1h-1zM476 283h1v1h-1zM476 293h1v1h-1zM476 303h1v1h-1zM476 313h1v1h-1zM476 323h1v1h-1zM476 333h1v1h-1zM476 343h1v1h-1zM476 353h1v1h-1zM476 363h1v1h-1zM476 373h1v1h-1zM476 383h1v1h-1zM476 393h1v1h-1zM476 403h1v1h-1zM476 413h1v1h-1zM476 423h1v1h-1zM476 433h1v1h-1zM476 443h1v1h-1zM476 453h1v1h-1zM476 463h1v1h-1zM476 473h1v1h-1zM476 483h1v1h-1zM476 493h1v1h-1zM476 503h1v1h-1zM476 513h1v1h-1zM476 523h1v1h-1zM476 533h1v1h-1zM476 543h1v1h-1zM476 553h1v1h-1zM476 563h1v1h-1zM476 573h1v1h-1zM476 583h1v1h-1zM476 593h1v1h-1zM476 603h1v1h-1zM476 613h1v1h-1zM476 623h1v1h-1zM476 633h1v1h-1zM476 643h1v1h-1zM476 653h1v1h-1zM476 663h1v1h-1zM476 673h1v1h-1zM476 683h1v1h-1zM476 693h1v1h-1zM476 703h1v1h-1zM476 713h1v1h-1zM476 723h1v1h-1zM486 163h1v1h-1zM486 173h1v1h-1zM486 183h1v1h-1zM486 193h1v1h-1zM486 203h1v1h-1zM486 213h1v1h-1zM486 223h1v1h-1zM486 233h1v1h-1zM486 243h1v1h-1zM486 253h1v1h-1zM486 263h1v1h-1zM486 273h1v1h-1zM486 283h1v1h-1zM486 293h1v1h-1zM486 303h1v1h-1zM486 313h1v1h-1zM486 323h1v1h-1zM486 333h1v1h-1zM486 343h1v1h-1zM486 353h1v1h-1zM486 363h1v1h-1zM486 373h1v1h-1zM486 383h1v1h-1zM486 393h1v1h-1zM486 403h1v1h-1zM486 413h1v1h-1zM486 423h1v1h-1zM486 433h1v1h-1zM486 443h1v1h-1zM486 453h1v1h-1zM486 463h1v1h-1zM486 473h1v1h-1zM486 483h1v1h-1zM486 493h1v1h-1zM486 503h1v1h-1zM486 513h1v1h-1zM486 523h1v1h-1zM486 533h1v1h-1zM486 543h1v1h-1zM486 553h1v1h-1zM486 563h1v1h-1zM486 573h1v1h-1zM486 583h1v1h-1zM486 593h1v1h-1zM486 603h1v1h-1zM486 613h1v1h-1zM486 623h1v1h-1zM486 633h1v1h-1zM486 643h1v1h-1zM486 653h1v1h-1zM486 663h1v1h-1zM486 673h1v1h-1zM486 683h1v1h-1zM486 693h1v1h-1zM486 703h1v1h-1zM486 713h1v1h-1zM486 723h1v1h-1zM496 163h1v1h-1zM496 173h1v1h-1zM496 183h1v1h-1zM496 193h1v1h-1zM496 203h1v1h-1zM496 213h1v1h-1zM496 223h1v1h-1zM496 233h1v1h-1zM496 243h1v1h-1zM496 253h1v1h-1zM496 263h1v1h-1zM496 273h1v1h-1zM496 283h1v1h-1zM496 293h1v1h-1zM496 303h1v1h-1zM496 313h1v1h-1zM496 323h1v1h-1zM496 333h1v1h-1zM496 343h1v1h-1zM496 353h1v1h-1zM496 363h1v1h-1zM496 373h1v1h-1zM496 383h1v1h-1zM496 393h1v1h-1zM496 403h1v1h-1zM496 413h1v1h-1zM496 423h1v1h-1zM496 433h1v1h-1zM496 443h1v1h-1zM496 453h1v1h-1zM496 463h1v1h-1zM496 473h1v1h-1zM496 483h1v1h-1zM496 493h1v1h-1zM496 503h1v1h-1zM496 513h1v1h-1zM496 523h1v1h-1zM496 533h1v1h-1zM496 543h1v1h-1zM496 553h1v1h-1zM496 563h1v1h-1zM496 573h1v1h-1zM496 583h1v1h-1zM496 593h1v1h-1zM496 603h1v1h-1zM496 613h1v1h-1zM496 623h1v1h-1zM496 633h1v1h-1zM496 643h1v1h-1zM496 653h1v1h-1zM496 663h1v1h-1zM496 673h1v1h-1zM496 683h1v1h-1zM496 693h1v1h-1zM496 703h1v1h-1zM496 713h1v1h-1zM496 723h1v1h-1zM506 163h1v1h-1zM506 173h1v1h-1zM506 183h1v1h-1zM506 193h1v1h-1zM506 203h1v1h-1zM506 213h1v1h-1zM506 223h1v1h-1zM506 233h1v1h-1zM506 243h1v1h-1zM506 253h1v1h-1zM506 263h1v1h-1zM506 273h1v1h-1zM506 283h1v1h-1zM506 293h1v1h-1zM506 303h1v1h-1zM506 313h1v1h-1zM506 323h1v1h-1zM506 333h1v1h-1zM506 343h1v1h-1zM506 353h1v1h-1zM506 363h1v1h-1zM506 373h1v1h-1zM506 383h1v1h-1zM506 393h1v1h-1zM506 403h1v1h-1zM506 413h1v1h-1zM506 423h1v1h-1zM506 433h1v1h-1zM506 443h1v1h-1zM506 453h1v1h-1zM506 463h1v1h-1zM506 473h1v1h-1zM506 483h1v1h-1zM506 493h1v1h-1zM506 503h1v1h-1zM506 513h1v1h-1zM506 523h1v1h-1zM506 533h1v1h-1zM506 543h1v1h-1zM506 553h1v1h-1zM506 563h1v1h-1zM506 573h1v1h-1zM506 583h1v1h-1zM506 593h1v1h-1zM506 603h1v1h-1zM506 613h1v1h-1zM506 623h1v1h-1zM506 633h1v1h-1zM506 643h1v1h-1zM506 653h1v1h-1zM506 663h1v1h-1zM506 673h1v1h-1zM506 683h1v1h-1zM506 693h1v1h-1zM506 703h1v1h-1zM506 713h1v1h-1zM506 723h1v1h-1zM516 163h1v1h-1zM516 173h1v1h-1zM516 183h1v1h-1zM516 193h1v1h-1zM516 203h1v1h-1zM516 213h1v1h-1zM516 223h1v1h-1zM516 233h1v1h-1zM516 243h1v1h-1zM516 253h1v1h-1zM516 263h1v1h-1zM516 273h1v1h-1zM516 283h1v1h-1zM516 293h1v1h-1zM516 303h1v1h-1zM516 313h1v1h-1zM516 323h1v1h-1zM516 333h1v1h-1zM516 343h1v1h-1zM516 353h1v1h-1zM516 363h1v1h-1zM516 373h1v1h-1zM516 383h1v1h-1zM516 393h1v1h-1zM516 403h1v1h-1zM516 413h1v1h-1zM516 423h1v1h-1zM516 433h1v1h-1zM516 443h1v1h-1zM516 453h1v1h-1zM516 463h1v1h-1zM516 473h1v1h-1zM516 483h1v1h-1zM516 493h1v1h-1zM516 503h1v1h-1zM516 513h1v1h-1zM516 523h1v1h-1zM516 533h1v1h-1zM516 543h1v1h-1zM516 553h1v1h-1zM516 563h1v1h-1zM516 573h1v1h-1zM516 583h1v1h-1zM516 593h1v1h-1zM516 603h1v1h-1zM516 613h1v1h-1zM516 623h1v1h-1zM516 633h1v1h-1zM516 643h1v1h-1zM516 653h1v1h-1zM516 663h1v1h-1zM516 673h1v1h-1zM516 683h1v1h-1zM516 693h1v1h-1zM516 703h1v1h-1zM516 713h1v1h-1zM516 723h1v1h-1zM526 163h1v1h-1zM526 173h1v1h-1zM526 183h1v1h-1zM526 193h1v1h-1zM526 203h1v1h-1zM526 213h1v1h-1zM526 223h1v1h-1zM526 233h1v1h-1zM526 243h1v1h-1zM526 253h1v1h-1zM526 263h1v1h-1zM526 273h1v1h-1zM526 283h1v1h-1zM526 293h1v1h-1zM526 303h1v1h-1zM526 313h1v1h-1zM526 323h1v1h-1zM526 333h1v1h-1zM526 343h1v1h-1zM526 353h1v1h-1zM526 363h1v1h-1zM526 373h1v1h-1zM526 383h1v1h-1zM526 393h1v1h-1zM526 403h1v1h-1zM526 413h1v1h-1zM526 423h1v1h-1zM526 433h1v1h-1zM526 443h1v1h-1zM526 453h1v1h-1zM526 463h1v1h-1zM526 473h1v1h-1zM526 483h1v1h-1zM526 493h1v1h-1zM526 503h1v1h-1zM526 513h1v1h-1zM526 523h1v1h-1zM526 533h1v1h-1zM526 543h1v1h-1zM526 553h1v1h-1zM526 563h1v1h-1zM526 573h1v1h-1zM526 583h1v1h-1zM526 593h1v1h-1zM526 603h1v1h-1zM526 613h1v1h-1zM526 623h1v1h-1zM526 633h1v1h-1zM526 643h1v1h-1zM526 653h1v1h-1zM526 663h1v1h-1zM526 673h1v1h-1zM526 683h1v1h-1zM526 693h1v1h-1zM526 703h1v1h-1zM526 713h1v1h-1zM526 723h1v1h-1zM536 163h1v1h-1zM536 173h1v1h-1zM536 183h1v1h-1zM536 193h1v1h-1zM536 203h1v1h-1zM536 213h1v1h-1zM536 223h1v1h-1zM536 233h1v1h-1zM536 243h1v1h-1zM536 253h1v1h-1zM536 263h1v1h-1zM536 273h1v1h-1zM536 283h1v1h-1zM536 293h1v1h-1zM536 303h1v1h-1zM536 313h1v1h-1zM536 323h1v1h-1zM536 333h1v1h-1zM536 343h1v1h-1zM536 353h1v1h-1zM536 363h1v1h-1zM536 373h1v1h-1zM536 383h1v1h-1zM536 393h1v1h-1zM536 403h1v1h-1zM536 413h1v1h-1zM536 423h1v1h-1zM536 433h1v1h-1zM536 443h1v1h-1zM536 453h1v1h-1zM536 463h1v1h-1zM536 473h1v1h-1zM536 483h1v1h-1zM536 493h1v1h-1zM536 503h1v1h-1zM536 513h1v1h-1zM536 523h1v1h-1zM536 533h1v1h-1zM536 543h1v1h-1zM536 553h1v1h-1zM536 563h1v1h-1zM536 573h1v1h-1zM536 583h1v1h-1zM536 593h1v1h-1zM536 603h1v1h-1zM536 613h1v1h-1zM536 623h1v1h-1zM536 633h1v1h-1zM536 643h1v1h-1zM536 653h1v1h-1zM536 663h1v1h-1zM536 673h1v1h-1zM536 683h1v1h-1zM536 693h1v1h-1zM536 703h1v1h-1zM536 713h1v1h-1zM536 723h1v1h-1zM546 163h1v1h-1zM546 173h1v1h-1zM546 183h1v1h-1zM546 193h1v1h-1zM546 203h1v1h-1zM546 213h1v1h-1zM546 223h1v1h-1zM546 233h1v1h-1zM546 243h1v1h-1zM546 253h1v1h-1zM546 263h1v1h-1zM546 273h1v1h-1zM546 283h1v1h-1zM546 293h1v1h-1zM546 303h1v1h-1zM546 313h1v1h-1zM546 323h1v1h-1zM546 333h1v1h-1zM546 343h1v1h-1zM546 353h1v1h-1zM546 363h1v1h-1zM546 373h1v1h-1zM546 383h1v1h-1zM546 393h1v1h-1zM546 403h1v1h-1zM546 413h1v1h-1zM546 423h1v1h-1zM546 433h1v1h-1zM546 443h1v1h-1zM546 453h1v1h-1zM546 463h1v1h-1zM546 473h1v1h-1zM546 483h1v1h-1zM546 493h1v1h-1zM546 503h1v1h-1zM546 513h1v1h-1zM546 523h1v1h-1zM546 533h1v1h-1zM546 543h1v1h-1zM546 553h1v1h-1zM546 563h1v1h-1zM546 573h1v1h-1zM546 583h1v1h-1zM546 593h1v1h-1zM546 603h1v1h-1zM546 613h1v1h-1zM546 623h1v1h-1zM546 633h1v1h-1zM546 643h1v1h-1zM546 653h1v1h-1zM546 663h1v1h-1zM546 673h1v1h-1zM546 683h1v1h-1zM546 693h1v1h-1zM546 703h1v1h-1zM546 713h1v1h-1zM546 723h1v1h-1zM556 163h1v1h-1zM556 173h1v1h-1zM556 183h1v1h-1zM556 193h1v1h-1zM556 203h1v1h-1zM556 213h1v1h-1zM556 223h1v1h-1zM556 233h1v1h-1zM556 243h1v1h-1zM556 253h1v1h-1zM556 263h1v1h-1zM556 273h1v1h-1zM556 283h1v1h-1zM556 293h1v1h-1zM556 303h1v1h-1zM556 313h1v1h-1zM556 323h1v1h-1zM556 333h1v1h-1zM556 343h1v1h-1zM556 353h1v1h-1zM556 363h1v1h-1zM556 373h1v1h-1zM556 383h1v1h-1zM556 393h1v1h-1zM556 403h1v1h-1zM556 413h1v1h-1zM556 423h1v1h-1zM556 433h1v1h-1zM556 443h1v1h-1zM556 453h1v1h-1zM556 463h1v1h-1zM556 473h1v1h-1zM556 483h1v1h-1zM556 493h1v1h-1zM556 503h1v1h-1zM556 513h1v1h-1zM556 523h1v1h-1zM556 533h1v1h-1zM556 543h1v1h-1zM556 553h1v1h-1zM556 563h1v1h-1zM556 573h1v1h-1zM556 583h1v1h-1zM556 593h1v1h-1zM556 603h1v1h-1zM556 613h1v1h-1zM556 623h1v1h-1zM556 633h1v1h-1zM556 643h1v1h-1zM556 653h1v1h-1zM556 663h1v1h-1zM556 673h1v1h-1zM556 683h1v1h-1zM556 693h1v1h-1zM556 703h1v1h-1zM556 713h1v1h-1zM556 723h1v1h-1zM566 163h1v1h-1zM566 173h1v1h-1zM566 183h1v1h-1zM566 193h1v1h-1zM566 203h1v1h-1zM566 213h1v1h-1zM566 223h1v1h-1zM566 233h1v1h-1zM566 243h1v1h-1zM566 253h1v1h-1zM566 263h1v1h-1zM566 273h1v1h-1zM566 283h1v1h-1zM566 293h1v1h-1zM566 303h1v1h-1zM566 313h1v1h-1zM566 323h1v1h-1zM566 333h1v1h-1zM566 343h1v1h-1zM566 353h1v1h-1zM566 363h1v1h-1zM566 373h1v1h-1zM566 383h1v1h-1zM566 393h1v1h-1zM566 403h1v1h-1zM566 413h1v1h-1zM566 423h1v1h-1zM566 433h1v1h-1zM566 443h1v1h-1zM566 453h1v1h-1zM566 463h1v1h-1zM566 473h1v1h-1zM566 483h1v1h-1zM566 493h1v1h-1zM566 503h1v1h-1zM566 513h1v1h-1zM566 523h1v1h-1zM566 533h1v1h-1zM566 543h1v1h-1zM566 553h1v1h-1zM566 563h1v1h-1zM566 573h1v1h-1zM566 583h1v1h-1zM566 593h1v1h-1zM566 603h1v1h-1zM566 613h1v1h-1zM566 623h1v1h-1zM566 633h1v1h-1zM566 643h1v1h-1zM566 653h1v1h-1zM566 663h1v1h-1zM566 673h1v1h-1zM566 683h1v1h-1zM566 693h1v1h-1zM566 703h1v1h-1zM566 713h1v1h-1zM566 723h1v1h-1zM576 163h1v1h-1zM576 173h1v1h-1zM576 183h1v1h-1zM576 193h1v1h-1zM576 203h1v1h-1zM576 213h1v1h-1zM576 223h1v1h-1zM576 233h1v1h-1zM576 243h1v1h-1zM576 253h1v1h-1zM576 263h1v1h-1zM576 273h1v1h-1zM576 283h1v1h-1zM576 293h1v1h-1zM576 303h1v1h-1zM576 313h1v1h-1zM576 323h1v1h-1zM576 333h1v1h-1zM576 343h1v1h-1zM576 353h1v1h-1zM576 363h1v1h-1zM576 373h1v1h-1zM576 383h1v1h-1zM576 393h1v1h-1zM576 403h1v1h-1zM576 413h1v1h-1zM576 423h1v1h-1zM576 433h1v1h-1zM576 443h1v1h-1zM576 453h1v1h-1zM576 463h1v1h-1zM576 473h1v1h-1zM576 483h1v1h-1zM576 493h1v1h-1zM576 503h1v1h-1zM576 513h1v1h-1zM576 523h1v1h-1zM576 533h1v1h-1zM576 543h1v1h-1zM576 553h1v1h-1zM576 563h1v1h-1zM576 573h1v1h-1zM576 583h1v1h-1zM576 593h1v1h-1zM576 603h1v1h-1zM576 613h1v1h-1zM576 623h1v1h-1zM576 633h1v1h-1zM576 643h1v1h-1zM576 653h1v1h-1zM576 663h1v1h-1zM576 673h1v1h-1zM576 683h1v1h-1zM576 693h1v1h-1zM576 703h1v1h-1zM576 713h1v1h-1zM576 723h1v1h-1zM586 163h1v1h-1zM586 173h1v1h-1zM586 183h1v1h-1zM586 193h1v1h-1zM586 203h1v1h-1zM586 213h1v1h-1zM586 223h1v1h-1zM586 233h1v1h-1zM586 243h1v1h-1zM586 253h1v1h-1zM586 263h1v1h-1zM586 273h1v1h-1zM586 283h1v1h-1zM586 293h1v1h-1zM586 303h1v1h-1zM586 313h1v1h-1zM586 323h1v1h-1zM586 333h1v1h-1zM586 343h1v1h-1zM586 353h1v1h-1zM586 363h1v1h-1zM586 373h1v1h-1zM586 383h1v1h-1zM586 393h1v1h-1zM586 403h1v1h-1zM586 413h1v1h-1zM586 423h1v1h-1zM586 433h1v1h-1zM586 443h1v1h-1zM586 453h1v1h-1zM586 463h1v1h-1zM586 473h1v1h-1zM586 483h1v1h-1zM586 493h1v1h-1zM586 503h1v1h-1zM586 513h1v1h-1zM586 523h1v1h-1zM586 533h1v1h-1zM586 543h1v1h-1zM586 553h1v1h-1zM586 563h1v1h-1zM586 573h1v1h-1zM586 583h1v1h-1zM586 593h1v1h-1zM586 603h1v1h-1zM586 613h1v1h-1zM586 623h1v1h-1zM586 633h1v1h-1zM586 643h1v1h-1zM586 653h1v1h-1zM586 663h1v1h-1zM586 673h1v1h-1zM586 683h1v1h-1zM586 693h1v1h-1zM586 703h1v1h-1zM586 713h1v1h-1zM586 723h1v1h-1zM596 163h1v1h-1zM596 173h1v1h-1zM596 183h1v1h-1zM596 193h1v1h-1zM596 203h1v1h-1zM596 213h1v1h-1zM596 223h1v1h-1zM596 233h1v1h-1zM596 243h1v1h-1zM596 253h1v1h-1zM596 263h1v1h-1zM596 273h1v1h-1zM596 283h1v1h-1zM596 293h1v1h-1zM596 303h1v1h-1zM596 313h1v1h-1zM596 323h1v1h-1zM596 333h1v1h-1zM596 343h1v1h-1zM596 353h1v1h-1zM596 363h1v1h-1zM596 373h1v1h-1zM596 383h1v1h-1zM596 393h1v1h-1zM596 403h1v1h-1zM596 413h1v1h-1zM596 423h1v1h-1zM596 433h1v1h-1zM596 443h1v1h-1zM596 453h1v1h-1zM596 463h1v1h-1zM596 473h1v1h-1zM596 483h1v1h-1zM596 493h1v1h-1zM596 503h1v1h-1zM596 513h1v1h-1zM596 523h1v1h-1zM596 533h1v1h-1zM596 543h1v1h-1zM596 553h1v1h-1zM596 563h1v1h-1zM596 573h1v1h-1zM596 583h1v1h-1zM596 593h1v1h-1zM596 603h1v1h-1zM596 613h1v1h-1zM596 623h1v1h-1zM596 633h1v1h-1zM596 643h1v1h-1zM596 653h1v1h-1zM596 663h1v1h-1zM596 673h1v1h-1zM596 683h1v1h-1zM596 693h1v1h-1zM596 703h1v1h-1zM596 713h1v1h-1zM596 723h1v1h-1zM606 163h1v1h-1zM606 173h1v1h-1zM606 183h1v1h-1zM606 193h1v1h-1zM606 203h1v1h-1zM606 213h1v1h-1zM606 223h1v1h-1zM606 233h1v1h-1zM606 243h1v1h-1zM606 253h1v1h-1zM606 263h1v1h-1zM606 273h1v1h-1zM606 283h1v1h-1zM606 293h1v1h-1zM606 303h1v1h-1zM606 313h1v1h-1zM606 323h1v1h-1zM606 333h1v1h-1zM606 343h1v1h-1zM606 353h1v1h-1zM606 363h1v1h-1zM606 373h1v1h-1zM606 383h1v1h-1zM606 393h1v1h-1zM606 403h1v1h-1zM606 413h1v1h-1zM606 423h1v1h-1zM606 433h1v1h-1zM606 443h1v1h-1zM606 453h1v1h-1zM606 463h1v1h-1zM606 473h1v1h-1zM606 483h1v1h-1zM606 493h1v1h-1zM606 503h1v1h-1zM606 513h1v1h-1zM606 523h1v1h-1zM606 533h1v1h-1zM606 543h1v1h-1zM606 553h1v1h-1zM606 563h1v1h-1zM606 573h1v1h-1zM606 583h1v1h-1zM606 593h1v1h-1zM606 603h1v1h-1zM606 613h1v1h-1zM606 623h1v1h-1zM606 633h1v1h-1zM606 643h1v1h-1zM606 653h1v1h-1zM606 663h1v1h-1zM606 673h1v1h-1zM606 683h1v1h-1zM606 693h1v1h-1zM606 703h1v1h-1zM606 713h1v1h-1zM606 723h1v1h-1zM616 163h1v1h-1zM616 173h1v1h-1zM616 183h1v1h-1zM616 193h1v1h-1zM616 203h1v1h-1zM616 213h1v1h-1zM616 223h1v1h-1zM616 233h1v1h-1zM616 243h1v1h-1zM616 253h1v1h-1zM616 263h1v1h-1zM616 273h1v1h-1zM616 283h1v1h-1zM616 293h1v1h-1zM616 303h1v1h-1zM616 313h1v1h-1zM616 323h1v1h-1zM616 333h1v1h-1zM616 343h1v1h-1zM616 353h1v1h-1zM616 363h1v1h-1zM616 373h1v1h-1zM616 383h1v1h-1zM616 393h1v1h-1zM616 403h1v1h-1zM616 413h1v1h-1zM616 423h1v1h-1zM616 433h1v1h-1zM616 443h1v1h-1zM616 453h1v1h-1zM616 463h1v1h-1zM616 473h1v1h-1zM616 483h1v1h-1zM616 493h1v1h-1zM616 503h1v1h-1zM616 513h1v1h-1zM616 523h1v1h-1zM616 533h1v1h-1zM616 543h1v1h-1zM616 553h1v1h-1zM616 563h1v1h-1zM616 573h1v1h-1zM616 583h1v1h-1zM616 593h1v1h-1zM616 603h1v1h-1zM616 613h1v1h-1zM616 623h1v1h-1zM616 633h1v1h-1zM616 643h1v1h-1zM616 653h1v1h-1zM616 663h1v1h-1zM616 673h1v1h-1zM616 683h1v1h-1zM616 693h1v1h-1zM616 703h1v1h-1zM616 713h1v1h-1zM616 723h1v1h-1zM626 163h1v1h-1zM626 173h1v1h-1zM626 183h1v1h-1zM626 193h1v1h-1zM626 203h1v1h-1zM626 213h1v1h-1zM626 223h1v1h-1zM626 233h1v1h-1zM626 243h1v1h-1zM626 253h1v1h-1zM626 263h1v1h-1zM626 273h1v1h-1zM626 283h1v1h-1zM626 293h1v1h-1zM626 303h1v1h-1zM626 313h1v1h-1zM626 323h1v1h-1zM626 333h1v1h-1zM626 343h1v1h-1zM626 353h1v1h-1zM626 363h1v1h-1zM626 373h1v1h-1zM626 383h1v1h-1zM626 393h1v1h-1zM626 403h1v1h-1zM626 413h1v1h-1zM626 423h1v1h-1zM626 433h1v1h-1zM626 443h1v1h-1zM626 453h1v1h-1zM626 463h1v1h-1zM626 473h1v1h-1zM626 483h1v1h-1zM626 493h1v1h-1zM626 503h1v1h-1zM626 513h1v1h-1zM626 523h1v1h-1zM626 533h1v1h-1zM626 543h1v1h-1zM626 553h1v1h-1zM626 563h1v1h-1zM626 573h1v1h-1zM626 583h1v1h-1zM626 593h1v1h-1zM626 603h1v1h-1zM626 613h1v1h-1zM626 623h1v1h-1zM626 633h1v1h-1zM626 643h1v1h-1zM626 653h1v1h-1zM626 663h1v1h-1zM626 673h1v1h-1zM626 683h1v1h-1zM626 693h1v1h-1zM626 703h1v1h-1zM626 713h1v1h-1zM626 723h1v1h-1zM636 163h1v1h-1zM636 173h1v1h-1zM636 183h1v1h-1zM636 193h1v1h-1zM636 203h1v1h-1zM636 213h1v1h-1zM636 223h1v1h-1zM636 233h1v1h-1zM636 243h1v1h-1zM636 253h1v1h-1zM636 263h1v1h-1zM636 273h1v1h-1zM636 283h1v1h-1zM636 293h1v1h-1zM636 303h1v1h-1zM636 313h1v1h-1zM636 323h1v1h-1zM636 333h1v1h-1zM636 343h1v1h-1zM636 353h1v1h-1zM636 363h1v1h-1zM636 373h1v1h-1zM636 383h1v1h-1zM636 393h1v1h-1zM636 403h1v1h-1zM636 413h1v1h-1zM636 423h1v1h-1zM636 433h1v1h-1zM636 443h1v1h-1zM636 453h1v1h-1zM636 463h1v1h-1zM636 473h1v1h-1zM636 483h1v1h-1zM636 493h1v1h-1zM636 503h1v1h-1zM636 513h1v1h-1zM636 523h1v1h-1zM636 533h1v1h-1zM636 543h1v1h-1zM636 553h1v1h-1zM636 563h1v1h-1zM636 573h1v1h-1zM636 583h1v1h-1zM636 593h1v1h-1zM636 603h1v1h-1zM636 613h1v1h-1zM636 623h1v1h-1zM636 633h1v1h-1zM636 643h1v1h-1zM636 653h1v1h-1zM636 663h1v1h-1zM636 673h1v1h-1zM636 683h1v1h-1zM636 693h1v1h-1zM636 703h1v1h-1zM636 713h1v1h-1zM636 723h1v1h-1zM646 163h1v1h-1zM646 173h1v1h-1zM646 183h1v1h-1zM646 193h1v1h-1zM646 203h1v1h-1zM646 213h1v1h-1zM646 223h1v1h-1zM646 233h1v1h-1zM646 243h1v1h-1zM646 253h1v1h-1zM646 263h1v1h-1zM646 273h1v1h-1zM646 283h1v1h-1zM646 293h1v1h-1zM646 303h1v1h-1zM646 313h1v1h-1zM646 323h1v1h-1zM646 333h1v1h-1zM646 343h1v1h-1zM646 353h1v1h-1zM646 363h1v1h-1zM646 373h1v1h-1zM646 383h1v1h-1zM646 393h1v1h-1zM646 403h1v1h-1zM646 413h1v1h-1zM646 423h1v1h-1zM646 433h1v1h-1zM646 443h1v1h-1zM646 453h1v1h-1zM646 463h1v1h-1zM646 473h1v1h-1zM646 483h1v1h-1zM646 493h1v1h-1zM646 503h1v1h-1zM646 513h1v1h-1zM646 523h1v1h-1zM646 533h1v1h-1zM646 543h1v1h-1zM646 553h1v1h-1zM646 563h1v1h-1zM646 573h1v1h-1zM646 583h1v1h-1zM646 593h1v1h-1zM646 603h1v1h-1zM646 613h1v1h-1zM646 623h1v1h-1zM646 633h1v1h-1zM646 643h1v1h-1zM646 653h1v1h-1zM646 663h1v1h-1zM646 673h1v1h-1zM646 683h1v1h-1zM646 693h1v1h-1zM646 703h1v1h-1zM646 713h1v1h-1zM646 723h1v1h-1zM656 163h1v1h-1zM656 173h1v1h-1zM656 183h1v1h-1zM656 193h1v1h-1zM656 203h1v1h-1zM656 213h1v1h-1zM656 223h1v1h-1zM656 233h1v1h-1zM656 243h1v1h-1zM656 253h1v1h-1zM656 263h1v1h-1zM656 273h1v1h-1zM656 283h1v1h-1zM656 293h1v1h-1zM656 303h1v1h-1zM656 313h1v1h-1zM656 323h1v1h-1zM656 333h1v1h-1zM656 343h1v1h-1zM656 353h1v1h-1zM656 363h1v1h-1zM656 373h1v1h-1zM656 383h1v1h-1zM656 393h1v1h-1zM656 403h1v1h-1zM656 413h1v1h-1zM656 423h1v1h-1zM656 433h1v1h-1zM656 443h1v1h-1zM656 453h1v1h-1zM656 463h1v1h-1zM656 473h1v1h-1zM656 483h1v1h-1zM656 493h1v1h-1zM656 503h1v1h-1zM656 513h1v1h-1zM656 523h1v1h-1zM656 533h1v1h-1zM656 543h1v1h-1zM656 553h1v1h-1zM656 563h1v1h-1zM656 573h1v1h-1zM656 583h1v1h-1zM656 593h1v1h-1zM656 603h1v1h-1zM656 613h1v1h-1zM656 623h1v1h-1zM656 633h1v1h-1zM656 643h1v1h-1zM656 653h1v1h-1zM656 663h1v1h-1zM656 673h1v1h-1zM656 683h1v1h-1zM656 693h1v1h-1zM656 703h1v1h-1zM656 713h1v1h-1zM656 723h1v1h-1zM666 163h1v1h-1zM666 173h1v1h-1zM666 183h1v1h-1zM666 193h1v1h-1zM666 203h1v1h-1zM666 213h1v1h-1zM666 223h1v1h-1zM666 233h1v1h-1zM666 243h1v1h-1zM666 253h1v1h-1zM666 263h1v1h-1zM666 273h1v1h-1zM666 283h1v1h-1zM666 293h1v1h-1zM666 303h1v1h-1zM666 313h1v1h-1zM666 323h1v1h-1zM666 333h1v1h-1zM666 343h1v1h-1zM666 353h1v1h-1zM666 363h1v1h-1zM666 373h1v1h-1zM666 383h1v1h-1zM666 393h1v1h-1zM666 403h1v1h-1zM666 413h1v1h-1zM666 423h1v1h-1zM666 433h1v1h-1zM666 443h1v1h-1zM666 453h1v1h-1zM666 463h1v1h-1zM666 473h1v1h-1zM666 483h1v1h-1zM666 493h1v1h-1zM666 503h1v1h-1zM666 513h1v1h-1zM666 523h1v1h-1zM666 533h1v1h-1zM666 543h1v1h-1zM666 553h1v1h-1zM666 563h1v1h-1zM666 573h1v1h-1zM666 583h1v1h-1zM666 593h1v1h-1zM666 603h1v1h-1zM666 613h1v1h-1zM666 623h1v1h-1zM666 633h1v1h-1zM666 643h1v1h-1zM666 653h1v1h-1zM666 663h1v1h-1zM666 673h1v1h-1zM666 683h1v1h-1zM666 693h1v1h-1zM666 703h1v1h-1zM666 713h1v1h-1zM666 723h1v1h-1zM676 163h1v1h-1zM676 173h1v1h-1zM676 183h1v1h-1zM676 193h1v1h-1zM676 203h1v1h-1zM676 213h1v1h-1zM676 223h1v1h-1zM676 233h1v1h-1zM676 243h1v1h-1zM676 253h1v1h-1zM676 263h1v1h-1zM676 273h1v1h-1zM676 283h1v1h-1zM676 293h1v1h-1zM676 303h1v1h-1zM676 313h1v1h-1zM676 323h1v1h-1zM676 333h1v1h-1zM676 343h1v1h-1zM676 353h1v1h-1zM676 363h1v1h-1zM676 373h1v1h-1zM676 383h1v1h-1zM676 393h1v1h-1zM676 403h1v1h-1zM676 413h1v1h-1zM676 423h1v1h-1zM676 433h1v1h-1zM676 443h1v1h-1zM676 453h1v1h-1zM676 463h1v1h-1zM676 473h1v1h-1zM676 483h1v1h-1zM676 493h1v1h-1zM676 503h1v1h-1zM676 513h1v1h-1zM676 523h1v1h-1zM676 533h1v1h-1zM676 543h1v1h-1zM676 553h1v1h-1zM676 563h1v1h-1zM676 573h1v1h-1zM676 583h1v1h-1zM676 593h1v1h-1zM676 603h1v1h-1zM676 613h1v1h-1zM676 623h1v1h-1zM676 633h1v1h-1zM676 643h1v1h-1zM676 653h1v1h-1zM676 663h1v1h-1zM676 673h1v1h-1zM676 683h1v1h-1zM676 693h1v1h-1zM676 703h1v1h-1zM676 713h1v1h-1zM676 723h1v1h-1zM686 163h1v1h-1zM686 173h1v1h-1zM686 183h1v1h-1zM686 193h1v1h-1zM686 203h1v1h-1zM686 213h1v1h-1zM686 223h1v1h-1zM686 233h1v1h-1zM686 243h1v1h-1zM686 253h1v1h-1zM686 263h1v1h-1zM686 273h1v1h-1zM686 283h1v1h-1zM686 293h1v1h-1zM686 303h1v1h-1zM686 313h1v1h-1zM686 323h1v1h-1zM686 333h1v1h-1zM686 343h1v1h-1zM686 353h1v1h-1zM686 363h1v1h-1zM686 373h1v1h-1zM686 383h1v1h-1zM686 393h1v1h-1zM686 403h1v1h-1zM686 413h1v1h-1zM686 423h1v1h-1zM686 433h1v1h-1zM686 443h1v1h-1zM686 453h1v1h-1zM686 463h1v1h-1zM686 473h1v1h-1zM686 483h1v1h-1zM686 493h1v1h-1zM686 503h1v1h-1zM686 513h1v1h-1zM686 523h1v1h-1zM686 533h1v1h-1zM686 543h1v1h-1zM686 553h1v1h-1zM686 563h1v1h-1zM686 573h1v1h-1zM686 583h1v1h-1zM686 593h1v1h-1zM686 603h1v1h-1zM686 613h1v1h-1zM686 623h1v1h-1zM686 633h1v1h-1zM686 643h1v1h-1zM686 653h1v1h-1zM686 663h1v1h-1zM686 673h1v1h-1zM686 683h1v1h-1zM686 693h1v1h-1zM686 703h1v1h-1zM686 713h1v1h-1zM686 723h1v1h-1zM696 163h1v1h-1zM696 173h1v1h-1zM696 183h1v1h-1zM696 193h1v1h-1zM696 203h1v1h-1zM696 213h1v1h-1zM696 223h1v1h-1zM696 233h1v1h-1zM696 243h1v1h-1zM696 253h1v1h-1zM696 263h1v1h-1zM696 273h1v1h-1zM696 283h1v1h-1zM696 293h1v1h-1zM696 303h1v1h-1zM696 313h1v1h-1zM696 323h1v1h-1zM696 333h1v1h-1zM696 343h1v1h-1zM696 353h1v1h-1zM696 363h1v1h-1zM696 373h1v1h-1zM696 383h1v1h-1zM696 393h1v1h-1zM696 403h1v1h-1zM696 413h1v1h-1zM696 423h1v1h-1zM696 433h1v1h-1zM696 443h1v1h-1zM696 453h1v1h-1zM696 463h1v1h-1zM696 473h1v1h-1zM696 483h1v1h-1zM696 493h1v1h-1zM696 503h1v1h-1zM696 513h1v1h-1zM696 523h1v1h-1zM696 533h1v1h-1zM696 543h1v1h-1zM696 553h1v1h-1zM696 563h1v1h-1zM696 573h1v1h-1zM696 583h1v1h-1zM696 593h1v1h-1zM696 603h1v1h-1zM696 613h1v1h-1zM696 623h1v1h-1zM696 633h1v1h-1zM696 643h1v1h-1zM696 653h1v1h-1zM696 663h1v1h-1zM696 673h1v1h-1zM696 683h1v1h-1zM696 693h1v1h-1zM696 703h1v1h-1zM696 713h1v1h-1zM696 723h1v1h-1zM706 163h1v1h-1zM706 173h1v1h-1zM706 183h1v1h-1zM706 193h1v1h-1zM706 203h1v1h-1zM706 213h1v1h-1zM706 223h1v1h-1zM706 233h1v1h-1zM706 243h1v1h-1zM706 253h1v1h-1zM706 263h1v1h-1zM706 273h1v1h-1zM706 283h1v1h-1zM706 293h1v1h-1zM706 303h1v1h-1zM706 313h1v1h-1zM706 323h1v1h-1zM706 333h1v1h-1zM706 343h1v1h-1zM706 353h1v1h-1zM706 363h1v1h-1zM706 373h1v1h-1zM706 383h1v1h-1zM706 393h1v1h-1zM706 403h1v1h-1zM706 413h1v1h-1zM706 423h1v1h-1zM706 433h1v1h-1zM706 443h1v1h-1zM706 453h1v1h-1zM706 463h1v1h-1zM706 473h1v1h-1zM706 483h1v1h-1zM706 493h1v1h-1zM706 503h1v1h-1zM706 513h1v1h-1zM706 523h1v1h-1zM706 533h1v1h-1zM706 543h1v1h-1zM706 553h1v1h-1zM706 563h1v1h-1zM706 573h1v1h-1zM706 583h1v1h-1zM706 593h1v1h-1zM706 603h1v1h-1zM706 613h1v1h-1zM706 623h1v1h-1zM706 633h1v1h-1zM706 643h1v1h-1zM706 653h1v1h-1zM706 663h1v1h-1zM706 673h1v1h-1zM706 683h1v1h-1zM706 693h1v1h-1zM706 703h1v1h-1zM706 713h1v1h-1zM706 723h1v1h-1zM716 163h1v1h-1zM716 173h1v1h-1zM716 183h1v1h-1zM716 193h1v1h-1zM716 203h1v1h-1zM716 213h1v1h-1zM716 223h1v1h-1zM716 233h1v1h-1zM716 243h1v1h-1zM716 253h1v1h-1zM716 263h1v1h-1zM716 273h1v1h-1zM716 283h1v1h-1zM716 293h1v1h-1zM716 303h1v1h-1zM716 313h1v1h-1zM716 323h1v1h-1zM716 333h1v1h-1zM716 343h1v1h-1zM716 353h1v1h-1zM716 363h1v1h-1zM716 373h1v1h-1zM716 383h1v1h-1zM716 393h1v1h-1zM716 403h1v1h-1zM716 413h1v1h-1zM716 423h1v1h-1zM716 433h1v1h-1zM716 443h1v1h-1zM716 453h1v1h-1zM716 463h1v1h-1zM716 473h1v1h-1zM716 483h1v1h-1zM716 493h1v1h-1zM716 503h1v1h-1zM716 513h1v1h-1zM716 523h1v1h-1zM716 533h1v1h-1zM716 543h1v1h-1zM716 553h1v1h-1zM716 563h1v1h-1zM716 573h1v1h-1zM716 583h1v1h-1zM716 593h1v1h-1zM716 603h1v1h-1zM716 613h1v1h-1zM716 623h1v1h-1zM716 633h1v1h-1zM716 643h1v1h-1zM716 653h1v1h-1zM716 663h1v1h-1zM716 673h1v1h-1zM716 683h1v1h-1zM716 693h1v1h-1zM716 703h1v1h-1zM716 713h1v1h-1zM716 723h1v1h-1zM726 163h1v1h-1zM726 173h1v1h-1zM726 183h1v1h-1zM726 193h1v1h-1zM726 203h1v1h-1zM726 213h1v1h-1zM726 223h1v1h-1zM726 233h1v1h-1zM726 243h1v1h-1zM726 253h1v1h-1zM726 263h1v1h-1zM726 273h1v1h-1zM726 283h1v1h-1zM726 293h1v1h-1zM726 303h1v1h-1zM726 313h1v1h-1zM726 323h1v1h-1zM726 333h1v1h-1zM726 343h1v1h-1zM726 353h1v1h-1zM726 363h1v1h-1zM726 373h1v1h-1zM726 383h1v1h-1zM726 393h1v1h-1zM726 403h1v1h-1zM726 413h1v1h-1zM726 423h1v1h-1zM726 433h1v1h-1zM726 443h1v1h-1zM726 453h1v1h-1zM726 463h1v1h-1zM726 473h1v1h-1zM726 483h1v1h-1zM726 493h1v1h-1zM726 503h1v1h-1zM726 513h1v1h-1zM726 523h1v1h-1zM726 533h1v1h-1zM726 543h1v1h-1zM726 553h1v1h-1zM726 563h1v1h-1zM726 573h1v1h-1zM726 583h1v1h-1zM726 593h1v1h-1zM726 603h1v1h-1zM726 613h1v1h-1zM726 623h1v1h-1zM726 633h1v1h-1zM726 643h1v1h-1zM726 653h1v1h-1zM726 663h1v1h-1zM726 673h1v1h-1zM726 683h1v1h-1zM726 693h1v1h-1zM726 703h1v1h-1zM726 713h1v1h-1zM726 723h1v1h-1zM736 163h1v1h-1zM736 173h1v1h-1zM736 183h1v1h-1zM736 193h1v1h-1zM736 203h1v1h-1zM736 213h1v1h-1zM736 223h1v1h-1zM736 233h1v1h-1zM736 243h1v1h-1zM736 253h1v1h-1zM736 263h1v1h-1zM736 273h1v1h-1zM736 283h1v1h-1zM736 293h1v1h-1zM736 303h1v1h-1zM736 313h1v1h-1zM736 323h1v1h-1zM736 333h1v1h-1zM736 343h1v1h-1zM736 353h1v1h-1zM736 363h1v1h-1zM736 373h1v1h-1zM736 383h1v1h-1zM736 393h1v1h-1zM736 403h1v1h-1zM736 413h1v1h-1zM736 423h1v1h-1zM736 433h1v1h-1zM736 443h1v1h-1zM736 453h1v1h-1zM736 463h1v1h-1zM736 473h1v1h-1zM736 483h1v1h-1zM736 493h1v1h-1zM736 503h1v1h-1zM736 513h1v1h-1zM736 523h1v1h-1zM736 533h1v1h-1zM736 543h1v1h-1zM736 553h1v1h-1zM736 563h1v1h-1zM736 573h1v1h-1zM736 583h1v1h-1zM736 593h1v1h-1zM736 603h1v1h-1zM736 613h1v1h-1zM736 623h1v1h-1zM736 633h1v1h-1zM736 643h1v1h-1zM736 653h1v1h-1zM736 663h1v1h-1zM736 673h1v1h-1zM736 683h1v1h-1zM736 693h1v1h-1zM736 703h1v1h-1zM736 713h1v1h-1zM736 723h1v1h-1zM746 163h1v1h-1zM746 173h1v1h-1zM746 183h1v1h-1zM746 193h1v1h-1zM746 203h1v1h-1zM746 213h1v1h-1zM746 223h1v1h-1zM746 233h1v1h-1zM746 243h1v1h-1zM746 253h1v1h-1zM746 263h1v1h-1zM746 273h1v1h-1zM746 283h1v1h-1zM746 293h1v1h-1zM746 303h1v1h-1zM746 313h1v1h-1zM746 323h1v1h-1zM746 333h1v1h-1zM746 343h1v1h-1zM746 353h1v1h-1zM746 363h1v1h-1zM746 373h1v1h-1zM746 383h1v1h-1zM746 393h1v1h-1zM746 403h1v1h-1zM746 413h1v1h-1zM746 423h1v1h-1zM746 433h1v1h-1zM746 443h1v1h-1zM746 453h1v1h-1zM746 463h1v1h-1zM746 473h1v1h-1zM746 483h1v1h-1zM746 493h1v1h-1zM746 503h1v1h-1zM746 513h1v1h-1zM746 523h1v1h-1zM746 533h1v1h-1zM746 543h1v1h-1zM746 553h1v1h-1zM746 563h1v1h-1zM746 573h1v1h-1zM746 583h1v1h-1zM746 593h1v1h-1zM746 603h1v1h-1zM746 613h1v1h-1zM746 623h1v1h-1zM746 633h1v1h-1zM746 643h1v1h-1zM746 653h1v1h-1zM746 663h1v1h-1zM746 673h1v1h-1zM746 683h1v1h-1zM746 693h1v1h-1zM746 703h1v1h-1zM746 713h1v1h-1zM746 723h1v1h-1zM756 163h1v1h-1zM756 173h1v1h-1zM756 183h1v1h-1zM756 193h1v1h-1zM756 203h1v1h-1zM756 213h1v1h-1zM756 223h1v1h-1zM756 233h1v1h-1zM756 243h1v1h-1zM756 253h1v1h-1zM756 263h1v1h-1zM756 273h1v1h-1zM756 283h1v1h-1zM756 293h1v1h-1zM756 303h1v1h-1zM756 313h1v1h-1zM756 323h1v1h-1zM756 333h1v1h-1zM756 343h1v1h-1zM756 353h1v1h-1zM756 363h1v1h-1zM756 373h1v1h-1zM756 383h1v1h-1zM756 393h1v1h-1zM756 403h1v1h-1zM756 413h1v1h-1zM756 423h1v1h-1zM756 433h1v1h-1zM756 443h1v1h-1zM756 453h1v1h-1zM756 463h1v1h-1zM756 473h1v1h-1zM756 483h1v1h-1zM756 493h1v1h-1zM756 503h1v1h-1zM756 513h1v1h-1zM756 523h1v1h-1zM756 533h1v1h-1zM756 543h1v1h-1zM756 553h1v1h-1zM756 563h1v1h-1zM756 573h1v1h-1zM756 583h1v1h-1zM756 593h1v1h-1zM756 603h1v1h-1zM756 613h1v1h-1zM756 623h1v1h-1zM756 633h1v1h-1zM756 643h1v1h-1zM756 653h1v1h-1zM756 663h1v1h-1zM756 673h1v1h-1zM756 683h1v1h-1zM756 693h1v1h-1zM756 703h1v1h-1zM756 713h1v1h-1zM756 723h1v1h-1zM766 163h1v1h-1zM766 173h1v1h-1zM766 183h1v1h-1zM766 193h1v1h-1zM766 203h1v1h-1zM766 213h1v1h-1zM766 223h1v1h-1zM766 233h1v1h-1zM766 243h1v1h-1zM766 253h1v1h-1zM766 263h1v1h-1zM766 273h1v1h-1zM766 283h1v1h-1zM766 293h1v1h-1zM766 303h1v1h-1zM766 313h1v1h-1zM766 323h1v1h-1zM766 333h1v1h-1zM766 343h1v1h-1zM766 353h1v1h-1zM766 363h1v1h-1zM766 373h1v1h-1zM766 383h1v1h-1zM766 393h1v1h-1zM766 403h1v1h-1zM766 413h1v1h-1zM766 423h1v1h-1zM766 433h1v1h-1zM766 443h1v1h-1zM766 453h1v1h-1zM766 463h1v1h-1zM766 473h1v1h-1zM766 483h1v1h-1zM766 493h1v1h-1zM766 503h1v1h-1zM766 513h1v1h-1zM766 523h1v1h-1zM766 533h1v1h-1zM766 543h1v1h-1zM766 553h1v1h-1zM766 563h1v1h-1zM766 573h1v1h-1zM766 583h1v1h-1zM766 593h1v1h-1zM766 603h1v1h-1zM766 613h1v1h-1zM766 623h1v1h-1zM766 633h1v1h-1zM766 643h1v1h-1zM766 653h1v1h-1zM766 663h1v1h-1zM766 673h1v1h-1zM766 683h1v1h-1zM766 693h1v1h-1zM766 703h1v1h-1zM766 713h1v1h-1zM766 723h1v1h-1zM776 163h1v1h-1zM776 173h1v1h-1zM776 183h1v1h-1zM776 193h1v1h-1zM776 203h1v1h-1zM776 213h1v1h-1zM776 223h1v1h-1zM776 233h1v1h-1zM776 243h1v1h-1zM776 253h1v1h-1zM776 263h1v1h-1zM776 273h1v1h-1zM776 283h1v1h-1zM776 293h1v1h-1zM776 303h1v1h-1zM776 313h1v1h-1zM776 323h1v1h-1zM776 333h1v1h-1zM776 343h1v1h-1zM776 353h1v1h-1zM776 363h1v1h-1zM776 373h1v1h-1zM776 383h1v1h-1zM776 393h1v1h-1zM776 403h1v1h-1zM776 413h1v1h-1zM776 423h1v1h-1zM776 433h1v1h-1zM776 443h1v1h-1zM776 453h1v1h-1zM776 463h1v1h-1zM776 473h1v1h-1zM776 483h1v1h-1zM776 493h1v1h-1zM776 503h1v1h-1zM776 513h1v1h-1zM776 523h1v1h-1zM776 533h1v1h-1zM776 543h1v1h-1zM776 553h1v1h-1zM776 563h1v1h-1zM776 573h1v1h-1zM776 583h1v1h-1zM776 593h1v1h-1zM776 603h1v1h-1zM776 613h1v1h-1zM776 623h1v1h-1zM776 633h1v1h-1zM776 643h1v1h-1zM776 653h1v1h-1zM776 663h1v1h-1zM776 673h1v1h-1zM776 683h1v1h-1zM776 693h1v1h-1zM776 703h1v1h-1zM776 713h1v1h-1zM776 723h1v1h-1zM786 163h1v1h-1zM786 173h1v1h-1zM786 183h1v1h-1zM786 193h1v1h-1zM786 203h1v1h-1zM786 213h1v1h-1zM786 223h1v1h-1zM786 233h1v1h-1zM786 243h1v1h-1zM786 253h1v1h-1zM786 263h1v1h-1zM786 273h1v1h-1zM786 283h1v1h-1zM786 293h1v1h-1zM786 303h1v1h-1zM786 313h1v1h-1zM786 323h1v1h-1zM786 333h1v1h-1zM786 343h1v1h-1zM786 353h1v1h-1zM786 363h1v1h-1zM786 373h1v1h-1zM786 383h1v1h-1zM786 393h1v1h-1zM786 403h1v1h-1zM786 413h1v1h-1zM786 423h1v1h-1zM786 433h1v1h-1zM786 443h1v1h-1zM786 453h1v1h-1zM786 463h1v1h-1zM786 473h1v1h-1zM786 483h1v1h-1zM786 493h1v1h-1zM786 503h1v1h-1zM786 513h1v1h-1zM786 523h1v1h-1zM786 533h1v1h-1zM786 543h1v1h-1zM786 553h1v1h-1zM786 563h1v1h-1zM786 573h1v1h-1zM786 583h1v1h-1zM786 593h1v1h-1zM786 603h1v1h-1zM786 613h1v1h-1zM786 623h1v1h-1zM786 633h1v1h-1zM786 643h1v1h-1zM786 653h1v1h-1zM786 663h1v1h-1zM786 673h1v1h-1zM786 683h1v1h-1zM786 693h1v1h-1zM786 703h1v1h-1zM786 713h1v1h-1zM786 723h1v1h-1zM796 163h1v1h-1zM796 173h1v1h-1zM796 183h1v1h-1zM796 193h1v1h-1zM796 203h1v1h-1zM796 213h1v1h-1zM796 223h1v1h-1zM796 233h1v1h-1zM796 243h1v1h-1zM796 253h1v1h-1zM796 263h1v1h-1zM796 273h1v1h-1zM796 283h1v1h-1zM796 293h1v1h-1zM796 303h1v1h-1zM796 313h1v1h-1zM796 323h1v1h-1zM796 333h1v1h-1zM796 343h1v1h-1zM796 353h1v1h-1zM796 363h1v1h-1zM796 373h1v1h-1zM796 383h1v1h-1zM796 393h1v1h-1zM796 403h1v1h-1zM796 413h1v1h-1zM796 423h1v1h-1zM796 433h1v1h-1zM796 443h1v1h-1zM796 453h1v1h-1zM796 463h1v1h-1zM796 473h1v1h-1zM796 483h1v1h-1zM796 493h1v1h-1zM796 503h1v1h-1zM796 513h1v1h-1zM796 523h1v1h-1zM796 533h1v1h-1zM796 543h1v1h-1zM796 553h1v1h-1zM796 563h1v1h-1zM796 573h1v1h-1zM796 583h1v1h-1zM796 593h1v1h-1zM796 603h1v1h-1zM796 613h1v1h-1zM796 623h1v1h-1zM796 633h1v1h-1zM796 643h1v1h-1zM796 653h1v1h-1zM796 663h1v1h-1zM796 673h1v1h-1zM796 683h1v1h-1zM796 693h1v1h-1zM796 703h1v1h-1zM796 713h1v1h-1zM796 723h1v1h-1zM806 163h1v1h-1zM806 173h1v1h-1zM806 183h1v1h-1zM806 193h1v1h-1zM806 203h1v1h-1zM806 213h1v1h-1zM806 223h1v1h-1zM806 233h1v1h-1zM806 243h1v1h-1zM806 253h1v1h-1zM806 263h1v1h-1zM806 273h1v1h-1zM806 283h1v1h-1zM806 293h1v1h-1zM806 303h1v1h-1zM806 313h1v1h-1zM806 323h1v1h-1zM806 333h1v1h-1zM806 343h1v1h-1zM806 353h1v1h-1zM806 363h1v1h-1zM806 373h1v1h-1zM806 383h1v1h-1zM806 393h1v1h-1zM806 403h1v1h-1zM806 413h1v1h-1zM806 423h1v1h-1zM806 433h1v1h-1zM806 443h1v1h-1zM806 453h1v1h-1zM806 463h1v1h-1zM806 473h1v1h-1zM806 483h1v1h-1zM806 493h1v1h-1zM806 503h1v1h-1zM806 513h1v1h-1zM806 523h1v1h-1zM806 533h1v1h-1zM806 543h1v1h-1zM806 553h1v1h-1zM806 563h1v1h-1zM806 573h1v1h-1zM806 583h1v1h-1zM806 593h1v1h-1zM806 603h1v1h-1zM806 613h1v1h-1zM806 623h1v1h-1zM806 633h1v1h-1zM806 643h1v1h-1zM806 653h1v1h-1zM806 663h1v1h-1zM806 673h1v1h-1zM806 683h1v1h-1zM806 693h1v1h-1zM806 703h1v1h-1zM806 713h1v1h-1zM806 723h1v1h-1zM816 163h1v1h-1zM816 173h1v1h-1zM816 183h1v1h-1zM816 193h1v1h-1zM816 203h1v1h-1zM816 213h1v1h-1zM816 223h1v1h-1zM816 233h1v1h-1zM816 243h1v1h-1zM816 253h1v1h-1zM816 263h1v1h-1zM816 273h1v1h-1zM816 283h1v1h-1zM816 293h1v1h-1zM816 303h1v1h-1zM816 313h1v1h-1zM816 323h1v1h-1zM816 333h1v1h-1zM816 343h1v1h-1zM816 353h1v1h-1zM816 363h1v1h-1zM816 373h1v1h-1zM816 383h1v1h-1zM816 393h1v1h-1zM816 403h1v1h-1zM816 413h1v1h-1zM816 423h1v1h-1zM816 433h1v1h-1zM816 443h1v1h-1zM816 453h1v1h-1zM816 463h1v1h-1zM816 473h1v1h-1zM816 483h1v1h-1zM816 493h1v1h-1zM816 503h1v1h-1zM816 513h1v1h-1zM816 523h1v1h-1zM816 533h1v1h-1zM816 543h1v1h-1zM816 553h1v1h-1zM816 563h1v1h-1zM816 573h1v1h-1zM816 583h1v1h-1zM816 593h1v1h-1zM816 603h1v1h-1zM816 613h1v1h-1zM816 623h1v1h-1zM816 633h1v1h-1zM816 643h1v1h-1zM816 653h1v1h-1zM816 663h1v1h-1zM816 673h1v1h-1zM816 683h1v1h-1zM816 693h1v1h-1zM816 703h1v1h-1zM816 713h1v1h-1zM816 723h1v1h-1zM826 163h1v1h-1zM826 173h1v1h-1zM826 183h1v1h-1zM826 193h1v1h-1zM826 203h1v1h-1zM826 213h1v1h-1zM826 223h1v1h-1zM826 233h1v1h-1zM826 243h1v1h-1zM826 253h1v1h-1zM826 263h1v1h-1zM826 273h1v1h-1zM826 283h1v1h-1zM826 293h1v1h-1zM826 303h1v1h-1zM826 313h1v1h-1zM826 323h1v1h-1zM826 333h1v1h-1zM826 343h1v1h-1zM826 353h1v1h-1zM826 363h1v1h-1zM826 373h1v1h-1zM826 383h1v1h-1zM826 393h1v1h-1zM826 403h1v1h-1zM826 413h1v1h-1zM826 423h1v1h-1zM826 433h1v1h-1zM826 443h1v1h-1zM826 453h1v1h-1zM826 463h1v1h-1zM826 473h1v1h-1zM826 483h1v1h-1zM826 493h1v1h-1zM826 503h1v1h-1zM826 513h1v1h-1zM826 523h1v1h-1zM826 533h1v1h-1zM826 543h1v1h-1zM826 553h1v1h-1zM826 563h1v1h-1zM826 573h1v1h-1zM826 583h1v1h-1zM826 593h1v1h-1zM826 603h1v1h-1zM826 613h1v1h-1zM826 623h1v1h-1zM826 633h1v1h-1zM826 643h1v1h-1zM826 653h1v1h-1zM826 663h1v1h-1zM826 673h1v1h-1zM826 683h1v1h-1zM826 693h1v1h-1zM826 703h1v1h-1zM826 713h1v1h-1zM826 723h1v1h-1zM836 163h1v1h-1zM836 173h1v1h-1zM836 183h1v1h-1zM836 193h1v1h-1zM836 203h1v1h-1zM836 213h1v1h-1zM836 223h1v1h-1zM836 233h1v1h-1zM836 243h1v1h-1zM836 253h1v1h-1zM836 263h1v1h-1zM836 273h1v1h-1zM836 283h1v1h-1zM836 293h1v1h-1zM836 303h1v1h-1zM836 313h1v1h-1zM836 323h1v1h-1zM836 333h1v1h-1zM836 343h1v1h-1zM836 353h1v1h-1zM836 363h1v1h-1zM836 373h1v1h-1zM836 383h1v1h-1zM836 393h1v1h-1zM836 403h1v1h-1zM836 413h1v1h-1zM836 423h1v1h-1zM836 433h1v1h-1zM836 443h1v1h-1zM836 453h1v1h-1zM836 463h1v1h-1zM836 473h1v1h-1zM836 483h1v1h-1zM836 493h1v1h-1zM836 503h1v1h-1zM836 513h1v1h-1zM836 523h1v1h-1zM836 533h1v1h-1zM836 543h1v1h-1zM836 553h1v1h-1zM836 563h1v1h-1zM836 573h1v1h-1zM836 583h1v1h-1zM836 593h1v1h-1zM836 603h1v1h-1zM836 613h1v1h-1zM836 623h1v1h-1zM836 633h1v1h-1zM836 643h1v1h-1zM836 653h1v1h-1zM836 663h1v1h-1zM836 673h1v1h-1zM836 683h1v1h-1zM836 693h1v1h-1zM836 703h1v1h-1zM836 713h1v1h-1zM836 723h1v1h-1zM846 163h1v1h-1zM846 173h1v1h-1zM846 183h1v1h-1zM846 193h1v1h-1zM846 203h1v1h-1zM846 213h1v1h-1zM846 223h1v1h-1zM846 233h1v1h-1zM846 243h1v1h-1zM846 253h1v1h-1zM846 263h1v1h-1zM846 273h1v1h-1zM846 283h1v1h-1zM846 293h1v1h-1zM846 303h1v1h-1zM846 313h1v1h-1zM846 323h1v1h-1zM846 333h1v1h-1zM846 343h1v1h-1zM846 353h1v1h-1zM846 363h1v1h-1zM846 373h1v1h-1zM846 383h1v1h-1zM846 393h1v1h-1zM846 403h1v1h-1zM846 413h1v1h-1zM846 423h1v1h-1zM846 433h1v1h-1zM846 443h1v1h-1zM846 453h1v1h-1zM846 463h1v1h-1zM846 473h1v1h-1zM846 483h1v1h-1zM846 493h1v1h-1zM846 503h1v1h-1zM846 513h1v1h-1zM846 523h1v1h-1zM846 533h1v1h-1zM846 543h1v1h-1zM846 553h1v1h-1zM846 563h1v1h-1zM846 573h1v1h-1zM846 583h1v1h-1zM846 593h1v1h-1zM846 603h1v1h-1zM846 613h1v1h-1zM846 623h1v1h-1zM846 633h1v1h-1zM846 643h1v1h-1zM846 653h1v1h-1zM846 663h1v1h-1zM846 673h1v1h-1zM846 683h1v1h-1zM846 693h1v1h-1zM846 703h1v1h-1zM846 713h1v1h-1zM846 723h1v1h-1zM856 163h1v1h-1zM856 173h1v1h-1zM856 183h1v1h-1zM856 193h1v1h-1zM856 203h1v1h-1zM856 213h1v1h-1zM856 223h1v1h-1zM856 233h1v1h-1zM856 243h1v1h-1zM856 253h1v1h-1zM856 263h1v1h-1zM856 273h1v1h-1zM856 283h1v1h-1zM856 293h1v1h-1zM856 303h1v1h-1zM856 313h1v1h-1zM856 323h1v1h-1zM856 333h1v1h-1zM856 343h1v1h-1zM856 353h1v1h-1zM856 363h1v1h-1zM856 373h1v1h-1zM856 383h1v1h-1zM856 393h1v1h-1zM856 403h1v1h-1zM856 413h1v1h-1zM856 423h1v1h-1zM856 433h1v1h-1zM856 443h1v1h-1zM856 453h1v1h-1zM856 463h1v1h-1zM856 473h1v1h-1zM856 483h1v1h-1zM856 493h1v1h-1zM856 503h1v1h-1zM856 513h1v1h-1zM856 523h1v1h-1zM856 533h1v1h-1zM856 543h1v1h-1zM856 553h1v1h-1zM856 563h1v1h-1zM856 573h1v1h-1zM856 583h1v1h-1zM856 593h1v1h-1zM856 603h1v1h-1zM856 613h1v1h-1zM856 623h1v1h-1zM856 633h1v1h-1zM856 643h1v1h-1zM856 653h1v1h-1zM856 663h1v1h-1zM856 673h1v1h-1zM856 683h1v1h-1zM856 693h1v1h-1zM856 703h1v1h-1zM856 713h1v1h-1zM856 723h1v1h-1zM866 163h1v1h-1zM866 173h1v1h-1zM866 183h1v1h-1zM866 193h1v1h-1zM866 203h1v1h-1zM866 213h1v1h-1zM866 223h1v1h-1zM866 233h1v1h-1zM866 243h1v1h-1zM866 253h1v1h-1zM866 263h1v1h-1zM866 273h1v1h-1zM866 283h1v1h-1zM866 293h1v1h-1zM866 303h1v1h-1zM866 313h1v1h-1zM866 323h1v1h-1zM866 333h1v1h-1zM866 343h1v1h-1zM866 353h1v1h-1zM866 363h1v1h-1zM866 373h1v1h-1zM866 383h1v1h-1zM866 393h1v1h-1zM866 403h1v1h-1zM866 413h1v1h-1zM866 423h1v1h-1zM866 433h1v1h-1zM866 443h1v1h-1zM866 453h1v1h-1zM866 463h1v1h-1zM866 473h1v1h-1zM866 483h1v1h-1zM866 493h1v1h-1zM866 503h1v1h-1zM866 513h1v1h-1zM866 523h1v1h-1zM866 533h1v1h-1zM866 543h1v1h-1zM866 553h1v1h-1zM866 563h1v1h-1zM866 573h1v1h-1zM866 583h1v1h-1zM866 593h1v1h-1zM866 603h1v1h-1zM866 613h1v1h-1zM866 623h1v1h-1zM866 633h1v1h-1zM866 643h1v1h-1zM866 653h1v1h-1zM866 663h1v1h-1zM866 673h1v1h-1zM866 683h1v1h-1zM866 693h1v1h-1zM866 703h1v1h-1zM866 713h1v1h-1zM866 723h1v1h-1zM876 163h1v1h-1zM876 173h1v1h-1zM876 183h1v1h-1zM876 193h1v1h-1zM876 203h1v1h-1zM876 213h1v1h-1zM876 223h1v1h-1zM876 233h1v1h-1zM876 243h1v1h-1zM876 253h1v1h-1zM876 263h1v1h-1zM876 273h1v1h-1zM876 283h1v1h-1zM876 293h1v1h-1zM876 303h1v1h-1zM876 313h1v1h-1zM876 323h1v1h-1zM876 333h1v1h-1zM876 343h1v1h-1zM876 353h1v1h-1zM876 363h1v1h-1zM876 373h1v1h-1zM876 383h1v1h-1zM876 393h1v1h-1zM876 403h1v1h-1zM876 413h1v1h-1zM876 423h1v1h-1zM876 433h1v1h-1zM876 443h1v1h-1zM876 453h1v1h-1zM876 463h1v1h-1zM876 473h1v1h-1zM876 483h1v1h-1zM876 493h1v1h-1zM876 503h1v1h-1zM876 513h1v1h-1zM876 523h1v1h-1zM876 533h1v1h-1zM876 543h1v1h-1zM876 553h1v1h-1zM876 563h1v1h-1zM876 573h1v1h-1zM876 583h1v1h-1zM876 593h1v1h-1zM876 603h1v1h-1zM876 613h1v1h-1zM876 623h1v1h-1zM876 633h1v1h-1zM876 643h1v1h-1zM876 653h1v1h-1zM876 663h1v1h-1zM876 673h1v1h-1zM876 683h1v1h-1zM876 693h1v1h-1zM876 703h1v1h-1zM876 713h1v1h-1zM876 723h1v1h-1zM886 163h1v1h-1zM886 173h1v1h-1zM886 183h1v1h-1zM886 193h1v1h-1zM886 203h1v1h-1zM886 213h1v1h-1zM886 223h1v1h-1zM886 233h1v1h-1zM886 243h1v1h-1zM886 253h1v1h-1zM886 263h1v1h-1zM886 273h1v1h-1zM886 283h1v1h-1zM886 293h1v1h-1zM886 303h1v1h-1zM886 313h1v1h-1zM886 323h1v1h-1zM886 333h1v1h-1zM886 343h1v1h-1zM886 353h1v1h-1zM886 363h1v1h-1zM886 373h1v1h-1zM886 383h1v1h-1zM886 393h1v1h-1zM886 403h1v1h-1zM886 413h1v1h-1zM886 423h1v1h-1zM886 433h1v1h-1zM886 443h1v1h-1zM886 453h1v1h-1zM886 463h1v1h-1zM886 473h1v1h-1zM886 483h1v1h-1zM886 493h1v1h-1zM886 503h1v1h-1zM886 513h1v1h-1zM886 523h1v1h-1zM886 533h1v1h-1zM886 543h1v1h-1zM886 553h1v1h-1zM886 563h1v1h-1zM886 573h1v1h-1zM886 583h1v1h-1zM886 593h1v1h-1zM886 603h1v1h-1zM886 613h1v1h-1zM886 623h1v1h-1zM886 633h1v1h-1zM886 643h1v1h-1zM886 653h1v1h-1zM886 663h1v1h-1zM886 673h1v1h-1zM886 683h1v1h-1zM886 693h1v1h-1zM886 703h1v1h-1zM886 713h1v1h-1zM886 723h1v1h-1zM896 163h1v1h-1zM896 173h1v1h-1zM896 183h1v1h-1zM896 193h1v1h-1zM896 203h1v1h-1zM896 213h1v1h-1zM896 223h1v1h-1zM896 233h1v1h-1zM896 243h1v1h-1zM896 253h1v1h-1zM896 263h1v1h-1zM896 273h1v1h-1zM896 283h1v1h-1zM896 293h1v1h-1zM896 303h1v1h-1zM896 313h1v1h-1zM896 323h1v1h-1zM896 333h1v1h-1zM896 343h1v1h-1zM896 353h1v1h-1zM896 363h1v1h-1zM896 373h1v1h-1zM896 383h1v1h-1zM896 393h1v1h-1zM896 403h1v1h-1zM896 413h1v1h-1zM896 423h1v1h-1zM896 433h1v1h-1zM896 443h1v1h-1zM896 453h1v1h-1zM896 463h1v1h-1zM896 473h1v1h-1zM896 483h1v1h-1zM896 493h1v1h-1zM896 503h1v1h-1zM896 513h1v1h-1zM896 523h1v1h-1zM896 533h1v1h-1zM896 543h1v1h-1zM896 553h1v1h-1zM896 563h1v1h-1zM896 573h1v1h-1zM896 583h1v1h-1zM896 593h1v1h-1zM896 603h1v1h-1zM896 613h1v1h-1zM896 623h1v1h-1zM896 633h1v1h-1zM896 643h1v1h-1zM896 653h1v1h-1zM896 663h1v1h-1zM896 673h1v1h-1zM896 683h1v1h-1zM896 693h1v1h-1zM896 703h1v1h-1zM896 713h1v1h-1zM896 723h1v1h-1zM906 163h1v1h-1zM906 173h1v1h-1zM906 183h1v1h-1zM906 193h1v1h-1zM906 203h1v1h-1zM906 213h1v1h-1zM906 223h1v1h-1zM906 233h1v1h-1zM906 243h1v1h-1zM906 253h1v1h-1zM906 263h1v1h-1zM906 273h1v1h-1zM906 283h1v1h-1zM906 293h1v1h-1zM906 303h1v1h-1zM906 313h1v1h-1zM906 323h1v1h-1zM906 333h1v1h-1zM906 343h1v1h-1zM906 353h1v1h-1zM906 363h1v1h-1zM906 373h1v1h-1zM906 383h1v1h-1zM906 393h1v1h-1zM906 403h1v1h-1zM906 413h1v1h-1zM906 423h1v1h-1zM906 433h1v1h-1zM906 443h1v1h-1zM906 453h1v1h-1zM906 463h1v1h-1zM906 473h1v1h-1zM906 483h1v1h-1zM906 493h1v1h-1zM906 503h1v1h-1zM906 513h1v1h-1zM906 523h1v1h-1zM906 533h1v1h-1zM906 543h1v1h-1zM906 553h1v1h-1zM906 563h1v1h-1zM906 573h1v1h-1zM906 583h1v1h-1zM906 593h1v1h-1zM906 603h1v1h-1zM906 613h1v1h-1zM906 623h1v1h-1zM906 633h1v1h-1zM906 643h1v1h-1zM906 653h1v1h-1zM906 663h1v1h-1zM906 673h1v1h-1zM906 683h1v1h-1zM906 693h1v1h-1zM906 703h1v1h-1zM906 713h1v1h-1zM906 723h1v1h-1zM916 163h1v1h-1zM916 173h1v1h-1zM916 183h1v1h-1zM916 193h1v1h-1zM916 203h1v1h-1zM916 213h1v1h-1zM916 223h1v1h-1zM916 233h1v1h-1zM916 243h1v1h-1zM916 253h1v1h-1zM916 263h1v1h-1zM916 273h1v1h-1zM916 283h1v1h-1zM916 293h1v1h-1zM916 303h1v1h-1zM916 313h1v1h-1zM916 323h1v1h-1zM916 333h1v1h-1zM916 343h1v1h-1zM916 353h1v1h-1zM916 363h1v1h-1zM916 373h1v1h-1zM916 383h1v1h-1zM916 393h1v1h-1zM916 403h1v1h-1zM916 413h1v1h-1zM916 423h1v1h-1zM916 433h1v1h-1zM916 443h1v1h-1zM916 453h1v1h-1zM916 463h1v1h-1zM916 473h1v1h-1zM916 483h1v1h-1zM916 493h1v1h-1zM916 503h1v1h-1zM916 513h1v1h-1zM916 523h1v1h-1zM916 533h1v1h-1zM916 543h1v1h-1zM916 553h1v1h-1zM916 563h1v1h-1zM916 573h1v1h-1zM916 583h1v1h-1zM916 593h1v1h-1zM916 603h1v1h-1zM916 613h1v1h-1zM916 623h1v1h-1zM916 633h1v1h-1zM916 643h1v1h-1zM916 653h1v1h-1zM916 663h1v1h-1zM916 673h1v1h-1zM916 683h1v1h-1zM916 693h1v1h-1zM916 703h1v1h-1zM916 713h1v1h-1zM916 723h1v1h-1zM926 163h1v1h-1zM926 173h1v1h-1zM926 183h1v1h-1zM926 193h1v1h-1zM926 203h1v1h-1zM926 213h1v1h-1zM926 223h1v1h-1zM926 233h1v1h-1zM926 243h1v1h-1zM926 253h1v1h-1zM926 263h1v1h-1zM926 273h1v1h-1zM926 283h1v1h-1zM926 293h1v1h-1zM926 303h1v1h-1zM926 313h1v1h-1zM926 323h1v1h-1zM926 333h1v1h-1zM926 343h1v1h-1zM926 353h1v1h-1zM926 363h1v1h-1zM926 373h1v1h-1zM926 383h1v1h-1zM926 393h1v1h-1zM926 403h1v1h-1zM926 413h1v1h-1zM926 423h1v1h-1zM926 433h1v1h-1zM926 443h1v1h-1zM926 453h1v1h-1zM926 463h1v1h-1zM926 473h1v1h-1zM926 483h1v1h-1zM926 493h1v1h-1zM926 503h1v1h-1zM926 513h1v1h-1zM926 523h1v1h-1zM926 533h1v1h-1zM926 543h1v1h-1zM926 553h1v1h-1zM926 563h1v1h-1zM926 573h1v1h-1zM926 583h1v1h-1zM926 593h1v1h-1zM926 603h1v1h-1zM926 613h1v1h-1zM926 623h1v1h-1zM926 633h1v1h-1zM926 643h1v1h-1zM926 653h1v1h-1zM926 663h1v1h-1zM926 673h1v1h-1zM926 683h1v1h-1zM926 693h1v1h-1zM926 703h1v1h-1zM926 713h1v1h-1zM926 723h1v1h-1zM936 163h1v1h-1zM936 173h1v1h-1zM936 183h1v1h-1zM936 193h1v1h-1zM936 203h1v1h-1zM936 213h1v1h-1zM936 223h1v1h-1zM936 233h1v1h-1zM936 243h1v1h-1zM936 253h1v1h-1zM936 263h1v1h-1zM936 273h1v1h-1zM936 283h1v1h-1zM936 293h1v1h-1zM936 303h1v1h-1zM936 313h1v1h-1zM936 323h1v1h-1zM936 333h1v1h-1zM936 343h1v1h-1zM936 353h1v1h-1zM936 363h1v1h-1zM936 373h1v1h-1zM936 383h1v1h-1zM936 393h1v1h-1zM936 403h1v1h-1zM936 413h1v1h-1zM936 423h1v1h-1zM936 433h1v1h-1zM936 443h1v1h-1zM936 453h1v1h-1zM936 463h1v1h-1zM936 473h1v1h-1zM936 483h1v1h-1zM936 493h1v1h-1zM936 503h1v1h-1zM936 513h1v1h-1zM936 523h1v1h-1zM936 533h1v1h-1zM936 543h1v1h-1zM936 553h1v1h-1zM936 563h1v1h-1zM936 573h1v1h-1zM936 583h1v1h-1zM936 593h1v1h-1zM936 603h1v1h-1zM936 613h1v1h-1zM936 623h1v1h-1zM936 633h1v1h-1zM936 643h1v1h-1zM936 653h1v1h-1zM936 663h1v1h-1zM936 673h1v1h-1zM936 683h1v1h-1zM936 693h1v1h-1zM936 703h1v1h-1zM936 713h1v1h-1zM936 723h1v1h-1zM946 163h1v1h-1zM946 173h1v1h-1zM946 183h1v1h-1zM946 193h1v1h-1zM946 203h1v1h-1zM946 213h1v1h-1zM946 223h1v1h-1zM946 233h1v1h-1zM946 243h1v1h-1zM946 253h1v1h-1zM946 263h1v1h-1zM946 273h1v1h-1zM946 283h1v1h-1zM946 293h1v1h-1zM946 303h1v1h-1zM946 313h1v1h-1zM946 323h1v1h-1zM946 333h1v1h-1zM946 343h1v1h-1zM946 353h1v1h-1zM946 363h1v1h-1zM946 373h1v1h-1zM946 383h1v1h-1zM946 393h1v1h-1zM946 403h1v1h-1zM946 413h1v1h-1zM946 423h1v1h-1zM946 433h1v1h-1zM946 443h1v1h-1zM946 453h1v1h-1zM946 463h1v1h-1zM946 473h1v1h-1zM946 483h1v1h-1zM946 493h1v1h-1zM946 503h1v1h-1zM946 513h1v1h-1zM946 523h1v1h-1zM946 533h1v1h-1zM946 543h1v1h-1zM946 553h1v1h-1zM946 563h1v1h-1zM946 573h1v1h-1zM946 583h1v1h-1zM946 593h1v1h-1zM946 603h1v1h-1zM946 613h1v1h-1zM946 623h1v1h-1zM946 633h1v1h-1zM946 643h1v1h-1zM946 653h1v1h-1zM946 663h1v1h-1zM946 673h1v1h-1zM946 683h1v1h-1zM946 693h1v1h-1zM946 703h1v1h-1zM946 713h1v1h-1zM946 723h1v1h-1zM956 163h1v1h-1zM956 173h1v1h-1zM956 183h1v1h-1zM956 193h1v1h-1zM956 203h1v1h-1zM956 213h1v1h-1zM956 223h1v1h-1zM956 233h1v1h-1zM956 243h1v1h-1zM956 253h1v1h-1zM956 263h1v1h-1zM956 273h1v1h-1zM956 283h1v1h-1zM956 293h1v1h-1zM956 303h1v1h-1zM956 313h1v1h-1zM956 323h1v1h-1zM956 333h1v1h-1zM956 343h1v1h-1zM956 353h1v1h-1zM956 363h1v1h-1zM956 373h1v1h-1zM956 383h1v1h-1zM956 393h1v1h-1zM956 403h1v1h-1zM956 413h1v1h-1zM956 423h1v1h-1zM956 433h1v1h-1zM956 443h1v1h-1zM956 453h1v1h-1zM956 463h1v1h-1zM956 473h1v1h-1zM956 483h1v1h-1zM956 493h1v1h-1zM956 503h1v1h-1zM956 513h1v1h-1zM956 523h1v1h-1zM956 533h1v1h-1zM956 543h1v1h-1zM956 553h1v1h-1zM956 563h1v1h-1zM956 573h1v1h-1zM956 583h1v1h-1zM956 593h1v1h-1zM956 603h1v1h-1zM956 613h1v1h-1zM956 623h1v1h-1zM956 633h1v1h-1zM956 643h1v1h-1zM956 653h1v1h-1zM956 663h1v1h-1zM956 673h1v1h-1zM956 683h1v1h-1zM956 693h1v1h-1zM956 703h1v1h-1zM956 713h1v1h-1zM956 723h1v1h-1zM966 163h1v1h-1zM966 173h1v1h-1zM966 183h1v1h-1zM966 193h1v1h-1zM966 203h1v1h-1zM966 213h1v1h-1zM966 223h1v1h-1zM966 233h1v1h-1zM966 243h1v1h-1zM966 253h1v1h-1zM966 263h1v1h-1zM966 273h1v1h-1zM966 283h1v1h-1zM966 293h1v1h-1zM966 303h1v1h-1zM966 313h1v1h-1zM966 323h1v1h-1zM966 333h1v1h-1zM966 343h1v1h-1zM966 353h1v1h-1zM966 363h1v1h-1zM966 373h1v1h-1zM966 383h1v1h-1zM966 393h1v1h-1zM966 403h1v1h-1zM966 413h1v1h-1zM966 423h1v1h-1zM966 433h1v1h-1zM966 443h1v1h-1zM966 453h1v1h-1zM966 463h1v1h-1zM966 473h1v1h-1zM966 483h1v1h-1zM966 493h1v1h-1zM966 503h1v1h-1zM966 513h1v1h-1zM966 523h1v1h-1zM966 533h1v1h-1zM966 543h1v1h-1zM966 553h1v1h-1zM966 563h1v1h-1zM966 573h1v1h-1zM966 583h1v1h-1zM966 593h1v1h-1zM966 603h1v1h-1zM966 613h1v1h-1zM966 623h1v1h-1zM966 633h1v1h-1zM966 643h1v1h-1zM966 653h1v1h-1zM966 663h1v1h-1zM966 673h1v1h-1zM966 683h1v1h-1zM966 693h1v1h-1zM966 703h1v1h-1zM966 713h1v1h-1zM966 723h1v1h-1zM976 163h1v1h-1zM976 173h1v1h-1zM976 183h1v1h-1zM976 193h1v1h-1zM976 203h1v1h-1zM976 213h1v1h-1zM976 223h1v1h-1zM976 233h1v1h-1zM976 243h1v1h-1zM976 253h1v1h-1zM976 263h1v1h-1zM976 273h1v1h-1zM976 283h1v1h-1zM976 293h1v1h-1zM976 303h1v1h-1zM976 313h1v1h-1zM976 323h1v1h-1zM976 333h1v1h-1zM976 343h1v1h-1zM976 353h1v1h-1zM976 363h1v1h-1zM976 373h1v1h-1zM976 383h1v1h-1zM976 393h1v1h-1zM976 403h1v1h-1zM976 413h1v1h-1zM976 423h1v1h-1zM976 433h1v1h-1zM976 443h1v1h-1zM976 453h1v1h-1zM976 463h1v1h-1zM976 473h1v1h-1zM976 483h1v1h-1zM976 493h1v1h-1zM976 503h1v1h-1zM976 513h1v1h-1zM976 523h1v1h-1zM976 533h1v1h-1zM976 543h1v1h-1zM976 553h1v1h-1zM976 563h1v1h-1zM976 573h1v1h-1zM976 583h1v1h-1zM976 593h1v1h-1zM976 603h1v1h-1zM976 613h1v1h-1zM976 623h1v1h-1zM976 633h1v1h-1zM976 643h1v1h-1zM976 653h1v1h-1zM976 663h1v1h-1zM976 673h1v1h-1zM976 683h1v1h-1zM976 693h1v1h-1zM976 703h1v1h-1zM976 713h1v1h-1zM976 723h1v1h-1zM986 163h1v1h-1zM986 173h1v1h-1zM986 183h1v1h-1zM986 193h1v1h-1zM986 203h1v1h-1zM986 213h1v1h-1zM986 223h1v1h-1zM986 233h1v1h-1zM986 243h1v1h-1zM986 253h1v1h-1zM986 263h1v1h-1zM986 273h1v1h-1zM986 283h1v1h-1zM986 293h1v1h-1zM986 303h1v1h-1zM986 313h1v1h-1zM986 323h1v1h-1zM986 333h1v1h-1zM986 343h1v1h-1zM986 353h1v1h-1zM986 363h1v1h-1zM986 373h1v1h-1zM986 383h1v1h-1zM986 393h1v1h-1zM986 403h1v1h-1zM986 413h1v1h-1zM986 423h1v1h-1zM986 433h1v1h-1zM986 443h1v1h-1zM986 453h1v1h-1zM986 463h1v1h-1zM986 473h1v1h-1zM986 483h1v1h-1zM986 493h1v1h-1zM986 503h1v1h-1zM986 513h1v1h-1zM986 523h1v1h-1zM986 533h1v1h-1zM986 543h1v1h-1zM986 553h1v1h-1zM986 563h1v1h-1zM986 573h1v1h-1zM986 583h1v1h-1zM986 593h1v1h-1zM986 603h1v1h-1zM986 613h1v1h-1zM986 623h1v1h-1zM986 633h1v1h-1zM986 643h1v1h-1zM986 653h1v1h-1zM986 663h1v1h-1zM986 673h1v1h-1zM986 683h1v1h-1zM986 693h1v1h-1zM986 703h1v1h-1zM986 713h1v1h-1zM986 723h1v1h-1zM996 163h1v1h-1zM996 173h1v1h-1zM996 183h1v1h-1zM996 193h1v1h-1zM996 203h1v1h-1zM996 213h1v1h-1zM996 223h1v1h-1zM996 233h1v1h-1zM996 243h1v1h-1zM996 253h1v1h-1zM996 263h1v1h-1zM996 273h1v1h-1zM996 283h1v1h-1zM996 293h1v1h-1zM996 303h1v1h-1zM996 313h1v1h-1zM996 323h1v1h-1zM996 333h1v1h-1zM996 343h1v1h-1zM996 353h1v1h-1zM996 363h1v1h-1zM996 373h1v1h-1zM996 383h1v1h-1zM996 393h1v1h-1zM996 403h1v1h-1zM996 413h1v1h-1zM996 423h1v1h-1zM996 433h1v1h-1zM996 443h1v1h-1zM996 453h1v1h-1zM996 463h1v1h-1zM996 473h1v1h-1zM996 483h1v1h-1zM996 493h1v1h-1zM996 503h1v1h-1zM996 513h1v1h-1zM996 523h1v1h-1zM996 533h1v1h-1zM996 543h1v1h-1zM996 553h1v1h-1zM996 563h1v1h-1zM996 573h1v1h-1zM996 583h1v1h-1zM996 593h1v1h-1zM996 603h1v1h-1zM996 613h1v1h-1zM996 623h1v1h-1zM996 633h1v1h-1zM996 643h1v1h-1zM996 653h1v1h-1zM996 663h1v1h-1zM996 673h1v1h-1zM996 683h1v1h-1zM996 693h1v1h-1zM996 703h1v1h-1zM996 713h1v1h-1zM996 723h1v1h-1zM1006 163h1v1h-1zM1006 173h1v1h-1zM1006 183h1v1h-1zM1006 193h1v1h-1zM1006 203h1v1h-1zM1006 213h1v1h-1zM1006 223h1v1h-1zM1006 233h1v1h-1zM1006 243h1v1h-1zM1006 253h1v1h-1zM1006 263h1v1h-1zM1006 273h1v1h-1zM1006 283h1v1h-1zM1006 293h1v1h-1zM1006 303h1v1h-1zM1006 313h1v1h-1zM1006 323h1v1h-1zM1006 333h1v1h-1zM1006 343h1v1h-1zM1006 353h1v1h-1zM1006 363h1v1h-1zM1006 373h1v1h-1zM1006 383h1v1h-1zM1006 393h1v1h-1zM1006 403h1v1h-1zM1006 413h1v1h-1zM1006 423h1v1h-1zM1006 433h1v1h-1zM1006 443h1v1h-1zM1006 453h1v1h-1zM1006 463h1v1h-1zM1006 473h1v1h-1zM1006 483h1v1h-1zM1006 493h1v1h-1zM1006 503h1v1h-1zM1006 513h1v1h-1zM1006 523h1v1h-1zM1006 533h1v1h-1zM1006 543h1v1h-1zM1006 553h1v1h-1zM1006 563h1v1h-1zM1006 573h1v1h-1zM1006 583h1v1h-1zM1006 593h1v1h-1zM1006 603h1v1h-1zM1006 613h1v1h-1zM1006 623h1v1h-1zM1006 633h1v1h-1zM1006 643h1v1h-1zM1006 653h1v1h-1zM1006 663h1v1h-1zM1006 673h1v1h-1zM1006 683h1v1h-1zM1006 693h1v1h-1zM1006 703h1v1h-1zM1006 713h1v1h-1zM1006 723h1v1h-1zM1016 163h1v1h-1zM1016 173h1v1h-1zM1016 183h1v1h-1zM1016 193h1v1h-1zM1016 203h1v1h-1zM1016 213h1v1h-1zM1016 223h1v1h-1zM1016 233h1v1h-1zM1016 243h1v1h-1zM1016 253h1v1h-1zM1016 263h1v1h-1zM1016 273h1v1h-1zM1016 283h1v1h-1zM1016 293h1v1h-1zM1016 303h1v1h-1zM1016 313h1v1h-1zM1016 323h1v1h-1zM1016 333h1v1h-1zM1016 343h1v1h-1zM1016 353h1v1h-1zM1016 363h1v1h-1zM1016 373h1v1h-1zM1016 383h1v1h-1zM1016 393h1v1h-1zM1016 403h1v1h-1zM1016 413h1v1h-1zM1016 423h1v1h-1zM1016 433h1v1h-1zM1016 443h1v1h-1zM1016 453h1v1h-1zM1016 463h1v1h-1zM1016 473h1v1h-1zM1016 483h1v1h-1zM1016 493h1v1h-1zM1016 503h1v1h-1zM1016 513h1v1h-1zM1016 523h1v1h-1zM1016 533h1v1h-1zM1016 543h1v1h-1zM1016 553h1v1h-1zM1016 563h1v1h-1zM1016 573h1v1h-1zM1016 583h1v1h-1zM1016 593h1v1h-1zM1016 603h1v1h-1zM1016 613h1v1h-1zM1016 623h1v1h-1zM1016 633h1v1h-1zM1016 643h1v1h-1zM1016 653h1v1h-1zM1016 663h1v1h-1zM1016 673h1v1h-1zM1016 683h1v1h-1zM1016 693h1v1h-1zM1016 703h1v1h-1zM1016 713h1v1h-1zM1016 723h1v1h-1zM1026 163h1v1h-1zM1026 173h1v1h-1zM1026 183h1v1h-1zM1026 193h1v1h-1zM1026 203h1v1h-1zM1026 213h1v1h-1zM1026 223h1v1h-1zM1026 233h1v1h-1zM1026 243h1v1h-1zM1026 253h1v1h-1zM1026 263h1v1h-1zM1026 273h1v1h-1zM1026 283h1v1h-1zM1026 293h1v1h-1zM1026 303h1v1h-1zM1026 313h1v1h-1zM1026 323h1v1h-1zM1026 333h1v1h-1zM1026 343h1v1h-1zM1026 353h1v1h-1zM1026 363h1v1h-1zM1026 373h1v1h-1zM1026 383h1v1h-1zM1026 393h1v1h-1zM1026 403h1v1h-1zM1026 413h1v1h-1zM1026 423h1v1h-1zM1026 433h1v1h-1zM1026 443h1v1h-1zM1026 453h1v1h-1zM1026 463h1v1h-1zM1026 473h1v1h-1zM1026 483h1v1h-1zM1026 493h1v1h-1zM1026 503h1v1h-1zM1026 513h1v1h-1zM1026 523h1v1h-1zM1026 533h1v1h-1zM1026 543h1v1h-1zM1026 553h1v1h-1zM1026 563h1v1h-1zM1026 573h1v1h-1zM1026 583h1v1h-1zM1026 593h1v1h-1zM1026 603h1v1h-1zM1026 613h1v1h-1zM1026 623h1v1h-1zM1026 633h1v1h-1zM1026 643h1v1h-1zM1026 653h1v1h-1zM1026 663h1v1h-1zM1026 673h1v1h-1zM1026 683h1v1h-1zM1026 693h1v1h-1zM1026 703h1v1h-1zM1026 713h1v1h-1zM1026 723h1v1h-1zM1036 163h1v1h-1zM1036 173h1v1h-1zM1036 183h1v1h-1zM1036 193h1v1h-1zM1036 203h1v1h-1zM1036 213h1v1h-1zM1036 223h1v1h-1zM1036 233h1v1h-1zM1036 243h1v1h-1zM1036 253h1v1h-1zM1036 263h1v1h-1zM1036 273h1v1h-1zM1036 283h1v1h-1zM1036 293h1v1h-1zM1036 303h1v1h-1zM1036 313h1v1h-1zM1036 323h1v1h-1zM1036 333h1v1h-1zM1036 343h1v1h-1zM1036 353h1v1h-1zM1036 363h1v1h-1zM1036 373h1v1h-1zM1036 383h1v1h-1zM1036 393h1v1h-1zM1036 403h1v1h-1zM1036 413h1v1h-1zM1036 423h1v1h-1zM1036 433h1v1h-1zM1036 443h1v1h-1zM1036 453h1v1h-1zM1036 463h1v1h-1zM1036 473h1v1h-1zM1036 483h1v1h-1zM1036 493h1v1h-1zM1036 503h1v1h-1zM1036 513h1v1h-1zM1036 523h1v1h-1zM1036 533h1v1h-1zM1036 543h1v1h-1zM1036 553h1v1h-1zM1036 563h1v1h-1zM1036 573h1v1h-1zM1036 583h1v1h-1zM1036 593h1v1h-1zM1036 603h1v1h-1zM1036 613h1v1h-1zM1036 623h1v1h-1zM1036 633h1v1h-1zM1036 643h1v1h-1zM1036 653h1v1h-1zM1036 663h1v1h-1zM1036 673h1v1h-1zM1036 683h1v1h-1zM1036 693h1v1h-1zM1036 703h1v1h-1zM1036 713h1v1h-1zM1036 723h1v1h-1zM1047 163h1v1h-1zM1047 173h1v1h-1zM1047 183h1v1h-1zM1047 193h1v1h-1zM1047 203h1v1h-1zM1047 213h1v1h-1zM1047 223h1v1h-1zM1047 233h1v1h-1zM1047 243h1v1h-1zM1047 253h1v1h-1zM1047 263h1v1h-1zM1047 273h1v1h-1zM1047 283h1v1h-1zM1047 293h1v1h-1zM1047 303h1v1h-1zM1047 313h1v1h-1zM1047 323h1v1h-1zM1047 333h1v1h-1zM1047 343h1v1h-1zM1047 353h1v1h-1zM1047 363h1v1h-1zM1047 373h1v1h-1zM1047 383h1v1h-1zM1047 393h1v1h-1zM1047 403h1v1h-1zM1047 413h1v1h-1zM1047 423h1v1h-1zM1047 433h1v1h-1zM1047 443h1v1h-1zM1047 453h1v1h-1zM1047 463h1v1h-1zM1047 473h1v1h-1zM1047 483h1v1h-1zM1047 493h1v1h-1zM1047 503h1v1h-1zM1047 513h1v1h-1zM1047 523h1v1h-1zM1047 533h1v1h-1zM1047 543h1v1h-1zM1047 553h1v1h-1zM1047 563h1v1h-1zM1047 573h1v1h-1zM1047 583h1v1h-1zM1047 593h1v1h-1zM1047 603h1v1h-1zM1047 613h1v1h-1zM1047 623h1v1h-1zM1047 633h1v1h-1zM1047 643h1v1h-1zM1047 653h1v1h-1zM1047 663h1v1h-1zM1047 673h1v1h-1zM1047 683h1v1h-1zM1047 693h1v1h-1zM1047 703h1v1h-1zM1047 713h1v1h-1zM1047 723h1v1h-1zM1057 163h1v1h-1zM1057 173h1v1h-1zM1057 183h1v1h-1zM1057 193h1v1h-1zM1057 203h1v1h-1zM1057 213h1v1h-1zM1057 223h1v1h-1zM1057 233h1v1h-1zM1057 243h1v1h-1zM1057 253h1v1h-1zM1057 263h1v1h-1zM1057 273h1v1h-1zM1057 283h1v1h-1zM1057 293h1v1h-1zM1057 303h1v1h-1zM1057 313h1v1h-1zM1057 323h1v1h-1zM1057 333h1v1h-1zM1057 343h1v1h-1zM1057 353h1v1h-1zM1057 363h1v1h-1zM1057 373h1v1h-1zM1057 383h1v1h-1zM1057 393h1v1h-1zM1057 403h1v1h-1zM1057 413h1v1h-1zM1057 423h1v1h-1zM1057 433h1v1h-1zM1057 443h1v1h-1zM1057 453h1v1h-1zM1057 463h1v1h-1zM1057 473h1v1h-1zM1057 483h1v1h-1zM1057 493h1v1h-1zM1057 503h1v1h-1zM1057 513h1v1h-1zM1057 523h1v1h-1zM1057 533h1v1h-1zM1057 543h1v1h-1zM1057 553h1v1h-1zM1057 563h1v1h-1zM1057 573h1v1h-1zM1057 583h1v1h-1zM1057 593h1v1h-1zM1057 603h1v1h-1zM1057 613h1v1h-1zM1057 623h1v1h-1zM1057 633h1v1h-1zM1057 643h1v1h-1zM1057 653h1v1h-1zM1057 663h1v1h-1zM1057 673h1v1h-1zM1057 683h1v1h-1zM1057 693h1v1h-1zM1057 703h1v1h-1zM1057 713h1v1h-1zM1057 723h1v1h-1zM1067 163h1v1h-1zM1067 173h1v1h-1zM1067 183h1v1h-1zM1067 193h1v1h-1zM1067 203h1v1h-1zM1067 213h1v1h-1zM1067 223h1v1h-1zM1067 233h1v1h-1zM1067 243h1v1h-1zM1067 253h1v1h-1zM1067 263h1v1h-1zM1067 273h1v1h-1zM1067 283h1v1h-1zM1067 293h1v1h-1zM1067 303h1v1h-1zM1067 313h1v1h-1zM1067 323h1v1h-1zM1067 333h1v1h-1zM1067 343h1v1h-1zM1067 353h1v1h-1zM1067 363h1v1h-1zM1067 373h1v1h-1zM1067 383h1v1h-1zM1067 393h1v1h-1zM1067 403h1v1h-1zM1067 413h1v1h-1zM1067 423h1v1h-1zM1067 433h1v1h-1zM1067 443h1v1h-1zM1067 453h1v1h-1zM1067 463h1v1h-1zM1067 473h1v1h-1zM1067 483h1v1h-1zM1067 493h1v1h-1zM1067 503h1v1h-1zM1067 513h1v1h-1zM1067 523h1v1h-1zM1067 533h1v1h-1zM1067 543h1v1h-1zM1067 553h1v1h-1zM1067 563h1v1h-1zM1067 573h1v1h-1zM1067 583h1v1h-1zM1067 593h1v1h-1zM1067 603h1v1h-1zM1067 613h1v1h-1zM1067 623h1v1h-1zM1067 633h1v1h-1zM1067 643h1v1h-1zM1067 653h1v1h-1zM1067 663h1v1h-1zM1067 673h1v1h-1zM1067 683h1v1h-1zM1067 693h1v1h-1zM1067 703h1v1h-1zM1067 713h1v1h-1zM1067 723h1v1h-1zM1077 163h1v1h-1zM1077 173h1v1h-1zM1077 183h1v1h-1zM1077 193h1v1h-1zM1077 203h1v1h-1zM1077 213h1v1h-1zM1077 223h1v1h-1zM1077 233h1v1h-1zM1077 243h1v1h-1zM1077 253h1v1h-1zM1077 263h1v1h-1zM1077 273h1v1h-1zM1077 283h1v1h-1zM1077 293h1v1h-1zM1077 303h1v1h-1zM1077 313h1v1h-1zM1077 323h1v1h-1zM1077 333h1v1h-1zM1077 343h1v1h-1zM1077 353h1v1h-1zM1077 363h1v1h-1zM1077 373h1v1h-1zM1077 383h1v1h-1zM1077 393h1v1h-1zM1077 403h1v1h-1zM1077 413h1v1h-1zM1077 423h1v1h-1zM1077 433h1v1h-1zM1077 443h1v1h-1zM1077 453h1v1h-1zM1077 463h1v1h-1zM1077 473h1v1h-1zM1077 483h1v1h-1zM1077 493h1v1h-1zM1077 503h1v1h-1zM1077 513h1v1h-1zM1077 523h1v1h-1zM1077 533h1v1h-1zM1077 543h1v1h-1zM1077 553h1v1h-1zM1077 563h1v1h-1zM1077 573h1v1h-1zM1077 583h1v1h-1zM1077 593h1v1h-1zM1077 603h1v1h-1zM1077 613h1v1h-1zM1077 623h1v1h-1zM1077 633h1v1h-1zM1077 643h1v1h-1zM1077 653h1v1h-1zM1077 663h1v1h-1zM1077 673h1v1h-1zM1077 683h1v1h-1zM1077 693h1v1h-1zM1077 703h1v1h-1zM1077 713h1v1h-1zM1077 723h1v1h-1zM1087 163h1v1h-1zM1087 173h1v1h-1zM1087 183h1v1h-1zM1087 193h1v1h-1zM1087 203h1v1h-1zM1087 213h1v1h-1zM1087 223h1v1h-1zM1087 233h1v1h-1zM1087 243h1v1h-1zM1087 253h1v1h-1zM1087 263h1v1h-1zM1087 273h1v1h-1zM1087 283h1v1h-1zM1087 293h1v1h-1zM1087 303h1v1h-1zM1087 313h1v1h-1zM1087 323h1v1h-1zM1087 333h1v1h-1zM1087 343h1v1h-1zM1087 353h1v1h-1zM1087 363h1v1h-1zM1087 373h1v1h-1zM1087 383h1v1h-1zM1087 393h1v1h-1zM1087 403h1v1h-1zM1087 413h1v1h-1zM1087 423h1v1h-1zM1087 433h1v1h-1zM1087 443h1v1h-1zM1087 453h1v1h-1zM1087 463h1v1h-1zM1087 473h1v1h-1zM1087 483h1v1h-1zM1087 493h1v1h-1zM1087 503h1v1h-1zM1087 513h1v1h-1zM1087 523h1v1h-1zM1087 533h1v1h-1zM1087 543h1v1h-1zM1087 553h1v1h-1zM1087 563h1v1h-1zM1087 573h1v1h-1zM1087 583h1v1h-1zM1087 593h1v1h-1zM1087 603h1v1h-1zM1087 613h1v1h-1zM1087 623h1v1h-1zM1087 633h1v1h-1zM1087 643h1v1h-1zM1087 653h1v1h-1zM1087 663h1v1h-1zM1087 673h1v1h-1zM1087 683h1v1h-1zM1087 693h1v1h-1zM1087 703h1v1h-1zM1087 713h1v1h-1zM1087 723h1v1h-1zM1097 163h1v1h-1zM1097 173h1v1h-1zM1097 183h1v1h-1zM1097 193h1v1h-1zM1097 203h1v1h-1zM1097 213h1v1h-1zM1097 223h1v1h-1zM1097 233h1v1h-1zM1097 243h1v1h-1zM1097 253h1v1h-1zM1097 263h1v1h-1zM1097 273h1v1h-1zM1097 283h1v1h-1zM1097 293h1v1h-1zM1097 303h1v1h-1zM1097 313h1v1h-1zM1097 323h1v1h-1zM1097 333h1v1h-1zM1097 343h1v1h-1zM1097 353h1v1h-1zM1097 363h1v1h-1zM1097 373h1v1h-1zM1097 383h1v1h-1zM1097 393h1v1h-1zM1097 403h1v1h-1zM1097 413h1v1h-1zM1097 423h1v1h-1zM1097 433h1v1h-1zM1097 443h1v1h-1zM1097 453h1v1h-1zM1097 463h1v1h-1zM1097 473h1v1h-1zM1097 483h1v1h-1zM1097 493h1v1h-1zM1097 503h1v1h-1zM1097 513h1v1h-1zM1097 523h1v1h-1zM1097 533h1v1h-1zM1097 543h1v1h-1zM1097 553h1v1h-1zM1097 563h1v1h-1zM1097 573h1v1h-1zM1097 583h1v1h-1zM1097 593h1v1h-1zM1097 603h1v1h-1zM1097 613h1v1h-1zM1097 623h1v1h-1zM1097 633h1v1h-1zM1097 643h1v1h-1zM1097 653h1v1h-1zM1097 663h1v1h-1zM1097 673h1v1h-1zM1097 683h1v1h-1zM1097 693h1v1h-1zM1097 703h1v1h-1zM1097 713h1v1h-1zM1097 723h1v1h-1zM1107 163h1v1h-1zM1107 173h1v1h-1zM1107 183h1v1h-1zM1107 193h1v1h-1zM1107 203h1v1h-1zM1107 213h1v1h-1zM1107 223h1v1h-1zM1107 233h1v1h-1zM1107 243h1v1h-1zM1107 253h1v1h-1zM1107 263h1v1h-1zM1107 273h1v1h-1zM1107 283h1v1h-1zM1107 293h1v1h-1zM1107 303h1v1h-1zM1107 313h1v1h-1zM1107 323h1v1h-1zM1107 333h1v1h-1zM1107 343h1v1h-1zM1107 353h1v1h-1zM1107 363h1v1h-1zM1107 373h1v1h-1zM1107 383h1v1h-1zM1107 393h1v1h-1zM1107 403h1v1h-1zM1107 413h1v1h-1zM1107 423h1v1h-1zM1107 433h1v1h-1zM1107 443h1v1h-1zM1107 453h1v1h-1zM1107 463h1v1h-1zM1107 473h1v1h-1zM1107 483h1v1h-1zM1107 493h1v1h-1zM1107 503h1v1h-1zM1107 513h1v1h-1zM1107 523h1v1h-1zM1107 533h1v1h-1zM1107 543h1v1h-1zM1107 553h1v1h-1zM1107 563h1v1h-1zM1107 573h1v1h-1zM1107 583h1v1h-1zM1107 593h1v1h-1zM1107 603h1v1h-1zM1107 613h1v1h-1zM1107 623h1v1h-1zM1107 633h1v1h-1zM1107 643h1v1h-1zM1107 653h1v1h-1zM1107 663h1v1h-1zM1107 673h1v1h-1zM1107 683h1v1h-1zM1107 693h1v1h-1zM1107 703h1v1h-1zM1107 713h1v1h-1zM1107 723h1v1h-1zM1117 163h1v1h-1zM1117 173h1v1h-1zM1117 183h1v1h-1zM1117 193h1v1h-1zM1117 203h1v1h-1zM1117 213h1v1h-1zM1117 223h1v1h-1zM1117 233h1v1h-1zM1117 243h1v1h-1zM1117 253h1v1h-1zM1117 263h1v1h-1zM1117 273h1v1h-1zM1117 283h1v1h-1zM1117 293h1v1h-1zM1117 303h1v1h-1zM1117 313h1v1h-1zM1117 323h1v1h-1zM1117 333h1v1h-1zM1117 343h1v1h-1zM1117 353h1v1h-1zM1117 363h1v1h-1zM1117 373h1v1h-1zM1117 383h1v1h-1zM1117 393h1v1h-1zM1117 403h1v1h-1zM1117 413h1v1h-1zM1117 423h1v1h-1zM1117 433h1v1h-1zM1117 443h1v1h-1zM1117 453h1v1h-1zM1117 463h1v1h-1zM1117 473h1v1h-1zM1117 483h1v1h-1zM1117 493h1v1h-1zM1117 503h1v1h-1zM1117 513h1v1h-1zM1117 523h1v1h-1zM1117 533h1v1h-1zM1117 543h1v1h-1zM1117 553h1v1h-1zM1117 563h1v1h-1zM1117 573h1v1h-1zM1117 583h1v1h-1zM1117 593h1v1h-1zM1117 603h1v1h-1zM1117 613h1v1h-1zM1117 623h1v1h-1zM1117 633h1v1h-1zM1117 643h1v1h-1zM1117 653h1v1h-1zM1117 663h1v1h-1zM1117 673h1v1h-1zM1117 683h1v1h-1zM1117 693h1v1h-1zM1117 703h1v1h-1zM1117 713h1v1h-1zM1117 723h1v1h-1zM1127 163h1v1h-1zM1127 173h1v1h-1zM1127 183h1v1h-1zM1127 193h1v1h-1zM1127 203h1v1h-1zM1127 213h1v1h-1zM1127 223h1v1h-1zM1127 233h1v1h-1zM1127 243h1v1h-1zM1127 253h1v1h-1zM1127 263h1v1h-1zM1127 273h1v1h-1zM1127 283h1v1h-1zM1127 293h1v1h-1zM1127 303h1v1h-1zM1127 313h1v1h-1zM1127 323h1v1h-1zM1127 333h1v1h-1zM1127 343h1v1h-1zM1127 353h1v1h-1zM1127 363h1v1h-1zM1127 373h1v1h-1zM1127 383h1v1h-1zM1127 393h1v1h-1zM1127 403h1v1h-1zM1127 413h1v1h-1zM1127 423h1v1h-1zM1127 433h1v1h-1zM1127 443h1v1h-1zM1127 453h1v1h-1zM1127 463h1v1h-1zM1127 473h1v1h-1zM1127 483h1v1h-1zM1127 493h1v1h-1zM1127 503h1v1h-1zM1127 513h1v1h-1zM1127 523h1v1h-1zM1127 533h1v1h-1zM1127 543h1v1h-1zM1127 553h1v1h-1zM1127 563h1v1h-1zM1127 573h1v1h-1zM1127 583h1v1h-1zM1127 593h1v1h-1zM1127 603h1v1h-1zM1127 613h1v1h-1zM1127 623h1v1h-1zM1127 633h1v1h-1zM1127 643h1v1h-1zM1127 653h1v1h-1zM1127 663h1v1h-1zM1127 673h1v1h-1zM1127 683h1v1h-1zM1127 693h1v1h-1zM1127 703h1v1h-1zM1127 713h1v1h-1zM1127 723h1v1h-1zM1137 163h1v1h-1zM1137 173h1v1h-1zM1137 183h1v1h-1zM1137 193h1v1h-1zM1137 203h1v1h-1zM1137 213h1v1h-1zM1137 223h1v1h-1zM1137 233h1v1h-1zM1137 243h1v1h-1zM1137 253h1v1h-1zM1137 263h1v1h-1zM1137 273h1v1h-1zM1137 283h1v1h-1zM1137 293h1v1h-1zM1137 303h1v1h-1zM1137 313h1v1h-1zM1137 323h1v1h-1zM1137 333h1v1h-1zM1137 343h1v1h-1zM1137 353h1v1h-1zM1137 363h1v1h-1zM1137 373h1v1h-1zM1137 383h1v1h-1zM1137 393h1v1h-1zM1137 403h1v1h-1zM1137 413h1v1h-1zM1137 423h1v1h-1zM1137 433h1v1h-1zM1137 443h1v1h-1zM1137 453h1v1h-1zM1137 463h1v1h-1zM1137 473h1v1h-1zM1137 483h1v1h-1zM1137 493h1v1h-1zM1137 503h1v1h-1zM1137 513h1v1h-1zM1137 523h1v1h-1zM1137 533h1v1h-1zM1137 543h1v1h-1zM1137 553h1v1h-1zM1137 563h1v1h-1zM1137 573h1v1h-1zM1137 583h1v1h-1zM1137 593h1v1h-1zM1137 603h1v1h-1zM1137 613h1v1h-1zM1137 623h1v1h-1zM1137 633h1v1h-1zM1137 643h1v1h-1zM1137 653h1v1h-1zM1137 663h1v1h-1zM1137 673h1v1h-1zM1137 683h1v1h-1zM1137 693h1v1h-1zM1137 703h1v1h-1zM1137 713h1v1h-1zM1137 723h1v1h-1z" fill="#363636"/></svg>
<svg class="a" style="left:95px;top:155px" width="1043" height="577" viewBox="95 155 1043 577">
<!-- origin marker -->
<path d="M96 543.5H136M116.5 523V564" stroke="#b00000" stroke-width="1.2" fill="none"/>
<!-- rect -->
<rect x="216.5" y="363.5" width="800" height="180" fill="none" stroke="#fff" stroke-width="2.6"/>
<!-- vertical center lines -->
<path d="M316.5 343V563M916.5 343V563" stroke="#f00" stroke-width="1.3" stroke-dasharray="17.6 6.9 1.6 6.8" stroke-dashoffset="13.9" fill="none"/>
<!-- horizontal center line (selected) -->
<path d="M196 443.5H1036" stroke="#a84e4a" stroke-width="1.0" stroke-dasharray="17.6 6.9 1.6 6.8" fill="none"/>
<!-- circles -->
<circle cx="316.5" cy="443.5" r="40" fill="none" stroke="#c85a5a" stroke-width="2.2"/>
<circle cx="916.5" cy="443.5" r="40" fill="none" stroke="#c85a5a" stroke-width="2.2"/>
<!-- red marker -->
<circle cx="916.5" cy="323.5" r="6.2" fill="none" stroke="#a00000" stroke-width="1"/>
<path d="M910 323.5H923M916.5 317V330" stroke="#a00000" stroke-width="1"/>
<!-- text -->
<text transform="translate(425.4 534.9) rotate(-90)" font-family="Liberation Sans" font-size="28" fill="#fff" letter-spacing="-0.1">104.245.02.4B</text>
<!-- cursor highlight ring -->
<defs><radialGradient id="ringg" cx="0.5" cy="0.5" r="0.5">
<stop offset="0" stop-color="#000" stop-opacity="0"/>
<stop offset="0.785" stop-color="#101820" stop-opacity="0"/>
<stop offset="0.82" stop-color="#222e3a" stop-opacity="0.9"/>
<stop offset="0.87" stop-color="#3a4a58" stop-opacity="0.95"/>
<stop offset="0.92" stop-color="#5a6c7c" stop-opacity="0.95"/>
<stop offset="0.96" stop-color="#8a9cac" stop-opacity="0.95"/>
<stop offset="0.985" stop-color="#7c8e9e" stop-opacity="0.75"/>
<stop offset="1" stop-color="#7a8c9c" stop-opacity="0"/>
</radialGradient></defs>
<circle cx="228.3" cy="443.5" r="40" fill="url(#ringg)"/>
<!-- handles -->
<g fill="#0a7fae" stroke="#3f9cc4" stroke-width="0.8">
<rect x="311.5" y="398.5" width="10" height="10"/><rect x="311.5" y="478.5" width="10" height="10"/>
<rect x="271.5" y="438.5" width="10" height="10"/><rect x="351.5" y="438.5" width="10" height="10"/>
<rect x="911.5" y="398.5" width="10" height="10"/><rect x="911.5" y="478.5" width="10" height="10"/>
<rect x="871.5" y="438.5" width="10" height="10"/><rect x="951.5" y="438.5" width="10" height="10"/>
</g>
<g fill="#0000a8" stroke="#4040c8" stroke-width="0.8"><circle cx="316.5" cy="443.5" r="5"/><circle cx="916.5" cy="443.5" r="5"/></g>
<defs><linearGradient id="hb" x1="0" x2="1"><stop offset="0" stop-color="#2a2ae0"/><stop offset="1" stop-color="#0000a0"/></linearGradient></defs>
<rect x="191.5" y="438.5" width="10" height="10" fill="url(#hb)" stroke="#3a3ab0" stroke-width="0.8"/>
<rect x="1031.5" y="438.5" width="10" height="10" fill="#c0102a" stroke="#d04050" stroke-width="0.8"/>
<!-- cursor -->
<path d="M227.6 443.1L227.8 466.8L233.5 461.6L238 472L242.7 469.6L239 460.2L244.4 459.2Z" fill="#fff" stroke="#fff" stroke-width="1.6" stroke-linejoin="round"/>
<path d="M228.6 445L228.8 464.6L233.8 460.1L238.4 470.6L241.5 469.2L237.3 459.4L242.2 458.6Z" fill="#fff" stroke="#000" stroke-width="0.95" stroke-linejoin="round"/>
</svg>

<svg class="a" style="left:1154px;top:108px" width="346" height="690" viewBox="1154 108 346 690">
<defs>
<linearGradient id="gpt" x1="0" y1="0" x2="0" y2="1"><stop offset="0" stop-color="#ececec"/><stop offset="1" stop-color="#dadada"/></linearGradient>
<linearGradient id="gpb" x1="0" y1="0" x2="0" y2="1"><stop offset="0" stop-color="#f8f8f8"/><stop offset="0.3" stop-color="#e8e8e8"/><stop offset="1" stop-color="#f4f4f4"/></linearGradient>
<linearGradient id="gdock" x1="1455" y1="0" x2="1500" y2="0" gradientUnits="userSpaceOnUse"><stop offset="0" stop-color="#f2f2f2"/><stop offset="0.04" stop-color="#eaeaea"/><stop offset="0.935" stop-color="#cccccc"/><stop offset="0.945" stop-color="#bbbbbb"/><stop offset="1" stop-color="#bbbbbb"/></linearGradient>
<g id="eye"><path d="M-7.6 0.3C-5.5 -4.6 -1.5 -5.5 1 -5.3C4.5 -5 7 -2.5 7.7 0C6.5 3.6 3 5.5 0 5.5C-3.5 5.5 -6.6 3.6 -7.6 0.3Z"/><ellipse cx="0.2" cy="0.6" rx="4.7" ry="3.3" fill="#fff"/><circle cx="0.2" cy="-0.2" r="2.9"/><path d="M-4.8 -1.2Q0 -3.8 4.8 -1.2" fill="none" stroke="#000" stroke-width="1.6"/><circle cx="-0.8" cy="-1" r="0.7" fill="#fff"/></g><g id="lock"><path d="M-3.5 -1.5V-3.3A3.5 3.5 0 0 1 3.5 -3.3V-1.5" fill="none" stroke="#b8b8b8" stroke-width="1.6"/><rect x="-4.9" y="-1.5" width="9.8" height="7.8" fill="#b8b8b8"/></g>
</defs>
<rect x="1154" y="108" width="2" height="690" fill="#b6b6b6"/>
<rect x="1156" y="108" width="298" height="22" fill="url(#gpt)"/>
<rect x="1156" y="128.5" width="298" height="1.5" fill="#c4c4c4"/>
<circle cx="1163.9" cy="117.9" r="6.8" fill="#5c5c5c"/>
<path d="M1160.6 114.6L1167.2 121.2M1167.2 114.6L1160.6 121.2" stroke="#e8e8e8" stroke-width="1.8"/>
<circle cx="1181.9" cy="117.9" r="6.8" fill="#5c5c5c"/>
<path d="M1181.2 115.5H1185.4V119.5M1178.5 117.5H1182.7V121.5H1178.5Z" fill="none" stroke="#f0f0f0" stroke-width="1.2"/>
<text x="1322" y="122.8" font-family="Liberation Sans" font-size="11.8" text-anchor="middle" fill="#222">Layerliste</text>
<rect x="1155.5" y="130.5" width="298.5" height="25.5" fill="url(#gpb)" stroke="#a8a8a8" stroke-width="1"/>
<path d="M1215.5 131V155.5M1275.5 131V155.5M1335.5 131V155.5M1395.5 131V155.5" stroke="#a8a8a8" stroke-width="1.6"/>
<rect x="1156" y="156" width="298" height="642" fill="#fff"/>
<rect x="1156" y="155.5" width="298" height="1.5" fill="#b0b0b0"/>
<rect x="1453.8" y="108" width="1.4" height="690" fill="#c0c0c0"/>
<use href="#eye" transform="translate(1185.2 143)" fill="#000"/>
<use href="#eye" transform="translate(1245 143)" fill="#a4a4a4"/>
<path d="M1300 143H1310M1305 138V148" stroke="#e00000" stroke-width="3"/>
<path d="M1359.3 143H1370.5" stroke="#e00000" stroke-width="3"/>
<path d="M1419 149.5L1430 138.5" stroke="#7a5a20" stroke-width="3.4" stroke-linecap="round"/>
<path d="M1419.3 149.2L1429.7 138.8" stroke="#e8b040" stroke-width="2.2"/>
<path d="M1428.5 140L1431.3 137.2" stroke="#e02020" stroke-width="3"/>
<path d="M1418 150.8L1419 148L1420.8 149.5Z" fill="#333"/>

<rect x="1161.5" y="163.5" width="15" height="8" fill="#fff" stroke="#111" stroke-width="1"/>
<text x="1183.3" y="171.6" font-family="Liberation Sans" font-size="13" fill="#111">0</text>
<use href="#eye" transform="translate(1423 166.6)" fill="#000"/>
<use href="#lock" transform="translate(1445 167)"/>
<rect x="1161.5" y="183.5" width="15" height="8" fill="#f00000" stroke="#111" stroke-width="1"/>
<text x="1183.3" y="191.6" font-family="Liberation Sans" font-size="13" fill="#111">Center</text>
<use href="#eye" transform="translate(1423 186.6)" fill="#000"/>
<use href="#lock" transform="translate(1445 187)"/>
<rect x="1161.5" y="203.5" width="15" height="8" fill="#000" stroke="#111" stroke-width="1"/>
<text x="1183.3" y="211.6" font-family="Liberation Sans" font-size="13" fill="#111">Hidden</text>
<use href="#eye" transform="translate(1423 206.6)" fill="#000"/>
<use href="#lock" transform="translate(1445 207)"/>
<rect x="1161.5" y="223.5" width="15" height="8" fill="#fff" stroke="#111" stroke-width="1"/>
<text x="1183.3" y="231.6" font-family="Liberation Sans" font-size="13" fill="#111">Visible</text>
<use href="#eye" transform="translate(1423 226.6)" fill="#000"/>
<use href="#lock" transform="translate(1445 227)"/>
<path d="M1395.5 233.5L1406 223" stroke="#7a5a20" stroke-width="3.2" stroke-linecap="round"/>
<path d="M1395.8 233.2L1405.7 223.3" stroke="#e8b040" stroke-width="2"/>
<path d="M1404.4 224.6L1407 222" stroke="#e02020" stroke-width="2.8"/>
<path d="M1394.5 234.8L1395.5 232L1397.2 233.5Z" fill="#333"/>

<rect x="1455" y="108" width="45" height="690" fill="url(#gdock)"/>
<g fill="#a0a0a0"><rect x="1462" y="116" width="2" height="2"/><rect x="1468" y="116" width="2" height="2"/><rect x="1474" y="116" width="2" height="2"/><rect x="1480" y="116" width="2" height="2"/><rect x="1486" y="116" width="2" height="2"/></g>
<rect x="1456" y="120" width="42.8" height="42.2" rx="5" fill="#b4b4b4"/>
<rect x="1456" y="417.2" width="42.8" height="42.5" rx="5" fill="#b4b4b4"/>
<path d="M1458 261.5H1500M1458 409.5H1500" stroke="#8a8a8a" stroke-width="1" stroke-dasharray="1 2.2"/>
<rect x="1463.5" y="127.5" width="27" height="27" fill="#fff" stroke="#222" stroke-width="1"/>
<rect x="1463.5" y="127.5" width="27" height="4.5" fill="#000"/>
<rect x="1464.2" y="128.3" width="3.2" height="3" fill="#fff"/>
<rect x="1463.5" y="174.5" width="27" height="27" fill="#fff" stroke="#222" stroke-width="1"/>
<rect x="1463.5" y="174.5" width="27" height="4.5" fill="#000"/>
<rect x="1464.2" y="175.3" width="3.2" height="3" fill="#fff"/>
<rect x="1463.5" y="220.5" width="27" height="27" fill="#fff" stroke="#222" stroke-width="1"/>
<rect x="1463.5" y="220.5" width="27" height="4.5" fill="#000"/>
<rect x="1464.2" y="221.3" width="3.2" height="3" fill="#fff"/>
<rect x="1463.5" y="276.5" width="27" height="27" fill="#fff" stroke="#222" stroke-width="1"/>
<rect x="1463.5" y="276.5" width="27" height="4.5" fill="#000"/>
<rect x="1464.2" y="277.3" width="3.2" height="3" fill="#fff"/>
<rect x="1463.5" y="323.0" width="27" height="27" fill="#fff" stroke="#222" stroke-width="1"/>
<rect x="1463.5" y="323.0" width="27" height="4.5" fill="#000"/>
<rect x="1464.2" y="323.8" width="3.2" height="3" fill="#fff"/>
<rect x="1463.5" y="369.0" width="27" height="27" fill="#fff" stroke="#222" stroke-width="1"/>
<rect x="1463.5" y="369.0" width="27" height="4.5" fill="#000"/>
<rect x="1464.2" y="369.8" width="3.2" height="3" fill="#fff"/>
<rect x="1463.5" y="424.5" width="27" height="27" fill="#fff" stroke="#222" stroke-width="1"/>
<rect x="1463.5" y="424.5" width="27" height="4.5" fill="#000"/>
<rect x="1464.2" y="425.3" width="3.2" height="3" fill="#fff"/>
<rect x="1463.5" y="471.5" width="27" height="27" fill="#fff" stroke="#222" stroke-width="1"/>
<rect x="1463.5" y="471.5" width="27" height="4.5" fill="#000"/>
<rect x="1464.2" y="472.3" width="3.2" height="3" fill="#fff"/>
<!-- dock icon contents -->
<path d="M1470.2 139.5L1473.2 137.8V148.5L1470.2 150.2Z" fill="#bbb" stroke="#444" stroke-width="0.6"/>
<path d="M1472.2 138.5L1475.2 136.8V147.5L1472.2 149.2Z" fill="#ddd" stroke="#444" stroke-width="0.6"/>
<path d="M1474.5 137.5L1483.8 134V144.5L1474.5 148Z" fill="#fff" stroke="#444" stroke-width="0.7"/>
<path d="M1476.5 145L1481.2 139L1480.8 144Z" fill="none" stroke="#e03030" stroke-width="0.8"/>
<rect x="1470.3" y="183.8" width="10.5" height="8" fill="#fdf1c8" stroke="#555" stroke-width="0.7"/>
<circle cx="1478.8" cy="190.8" r="4.2" fill="#fdf1c8" stroke="#555" stroke-width="0.7"/>
<rect x="1470" y="228.5" width="15" height="12" rx="2" fill="#f5f5f5" stroke="#b8c8e0" stroke-width="0.8"/>
<g fill="#000"><rect x="1467" y="285" width="4" height="3"/><rect x="1467" y="291" width="4" height="3"/><rect x="1467" y="297" width="4" height="3"/></g>
<g fill="#fff" stroke="#222" stroke-width="0.7"><rect x="1473.5" y="285" width="14" height="3"/><rect x="1473.5" y="291" width="14" height="3"/><rect x="1473.5" y="297" width="14" height="3"/></g>
<path d="M1469.5 333.5H1484.5L1478.5 339.5V345.5L1476 344.5V339.5Z" fill="#9a9a9a" stroke="#555" stroke-width="0.6"/>
<ellipse cx="1477" cy="333.5" rx="7.5" ry="1.3" fill="#c8c8c8" stroke="#555" stroke-width="0.5"/>
<path d="M1469 375V389L1474 385.5V379Z" fill="#fff" stroke="#333" stroke-width="0.8"/>
<rect x="1474" y="379" width="11" height="6.5" rx="1" fill="#bbb" stroke="#777" stroke-width="0.5"/>
<path d="M1466 382.2H1488" stroke="#f08080" stroke-width="0.8" stroke-dasharray="2 1"/>
<path d="M1467 433H1479M1467 436.5H1477M1467 440H1479M1467 443.5H1479" stroke="#888" stroke-width="0.6"/>
<path d="M1464 446.5H1490" stroke="#333" stroke-width="0.6"/>
<path d="M1466 448.5L1468 447.5L1468 449.5M1474 449H1488" stroke="#666" stroke-width="0.6"/>
<rect x="1470.5" y="480.5" width="13" height="14" rx="0.8" fill="#c08838" stroke="#8a5a18" stroke-width="0.6"/>
<rect x="1472" y="482.5" width="10" height="11" fill="#f2f2f2"/>
<rect x="1474.5" y="479" width="5" height="2.8" fill="#888"/>
<path d="M1473 485.5H1480.5M1473 488H1480.5M1473 490.5H1478" stroke="#bbb" stroke-width="0.6"/>
</svg>
<svg class="a" style="left:0;top:0" width="1500" height="844" viewBox="0 0 1500 844">
<!-- title icon -->
<defs><linearGradient id="gti" x1="0" y1="0" x2="1" y2="1"><stop offset="0" stop-color="#7a88c0"/><stop offset="0.5" stop-color="#2a3f8c"/><stop offset="1" stop-color="#1f3580"/></linearGradient></defs>
<circle cx="102.2" cy="118.7" r="5.15" fill="#f2f2f4" stroke="url(#gti)" stroke-width="2.4"/>
<path d="M98.5 118.2H104M101.3 115.5V121.5" stroke="#a8a8b0" stroke-width="0.6"/>
<path d="M103.5 116L104.8 117.3M99 120.3H102" stroke="#e07070" stroke-width="0.6"/>
<path d="M102.8 119.4L106.6 123.4" stroke="#e8a020" stroke-width="2"/>
<path d="M102.8 119.4L106 122.7" stroke="#f8d040" stroke-width="0.8"/>
<circle cx="107.3" cy="124.2" r="1.2" fill="#e06060"/>
<text x="632" y="124" font-family="Liberation Sans" font-size="12" text-anchor="middle" fill="#1a1a1a">* bond_washer.dxf</text>
<!-- ruler markers -->
<path d="M222.5 145H234L228.2 151Z" fill="#000"/>
<path d="M85 437.7V449.5L91.2 443.6Z" fill="#000"/>
<!-- scroll thumbs -->
<rect x="1143.5" y="276.5" width="7" height="322" rx="3.5" fill="#7e7e7e"/>
<rect x="280.5" y="737.3" width="633" height="8" rx="4" fill="#7e7e7e"/>
<rect x="1099.5" y="733" width="54" height="15" fill="#e8e8e8"/>
<text x="1153" y="745" font-family="Liberation Sans" font-size="13" text-anchor="end" fill="#111">1 &lt; 10</text>
<!-- command -->
<text x="77" y="762.3" font-family="Liberation Sans" font-size="13" fill="#1414d2"><tspan font-style="italic">Kommando:</tspan> snapgrid</text>
<text x="73.5" y="789.6" font-family="Liberation Sans" font-size="13" fill="#111">Kommando:</text>
<rect x="148" y="775.8" width="978" height="18" fill="#fff"/>
<rect x="1127.8" y="772.8" width="25" height="24.7" fill="#f0f0f0" stroke="#aaa" stroke-width="1"/>
<rect x="1133.5" y="780.5" width="13.5" height="9.2" fill="#f4f4f4" stroke="#555" stroke-width="0.9"/>
<rect x="1133" y="780" width="14.5" height="2.8" fill="#000"/>
<!-- status -->
<path d="M254 802V841" stroke="#7a7a7a" stroke-width="1"/>
<circle cx="509.5" cy="822" r="2.7" fill="#c6c6c6"/>
<circle cx="943.5" cy="822" r="2.7" fill="#c6c6c6"/>
<circle cx="1272.3" cy="822" r="2.7" fill="#c6c6c6"/>
<g font-family="Liberation Sans" font-size="9.5" fill="#1f1f1f">
<text x="2" y="815.7" letter-spacing="0.15">11.173,9.95</text>
<text x="2" y="836" letter-spacing="0.15">@-68.827,-12.05</text>
<text x="256" y="815.7" letter-spacing="0.15">14.9613&lt;42°</text>
<text x="256" y="836" letter-spacing="0.15">@69.8738&lt;190°</text>
<text x="699.5" y="820" text-anchor="end" letter-spacing="0.3">Element oder Bereich selektieren</text>
<text x="699.5" y="831.2" text-anchor="end" letter-spacing="0.3">Element oder Referenzpunkt verschieben</text>
<text x="949" y="820" letter-spacing="0.3">Selektierte Objekte:</text>
<text x="949" y="831.2" letter-spacing="0.3">3 Objekte auf 2 Layer.</text>
</g>
<!-- mouse -->
<path d="M727 806.5C722 806.5 718.5 809.5 718.5 815V826.5C718.5 832 722 835.3 727 835.3C732 835.3 735.5 832 735.5 826.5V815C735.5 809.5 732 806.5 727 806.5Z" fill="#fff" stroke="#444" stroke-width="0.9"/>
<path d="M718.7 819.8Q727 817.2 735.3 819.8" stroke="#444" stroke-width="1.5" fill="none"/><path d="M727 806.5V818.5" stroke="#444" stroke-width="1.1" fill="none"/>
<rect x="725.3" y="808" width="3.4" height="7.6" rx="1" fill="#fff" stroke="#444" stroke-width="1"/>
</svg>

</body></html>
